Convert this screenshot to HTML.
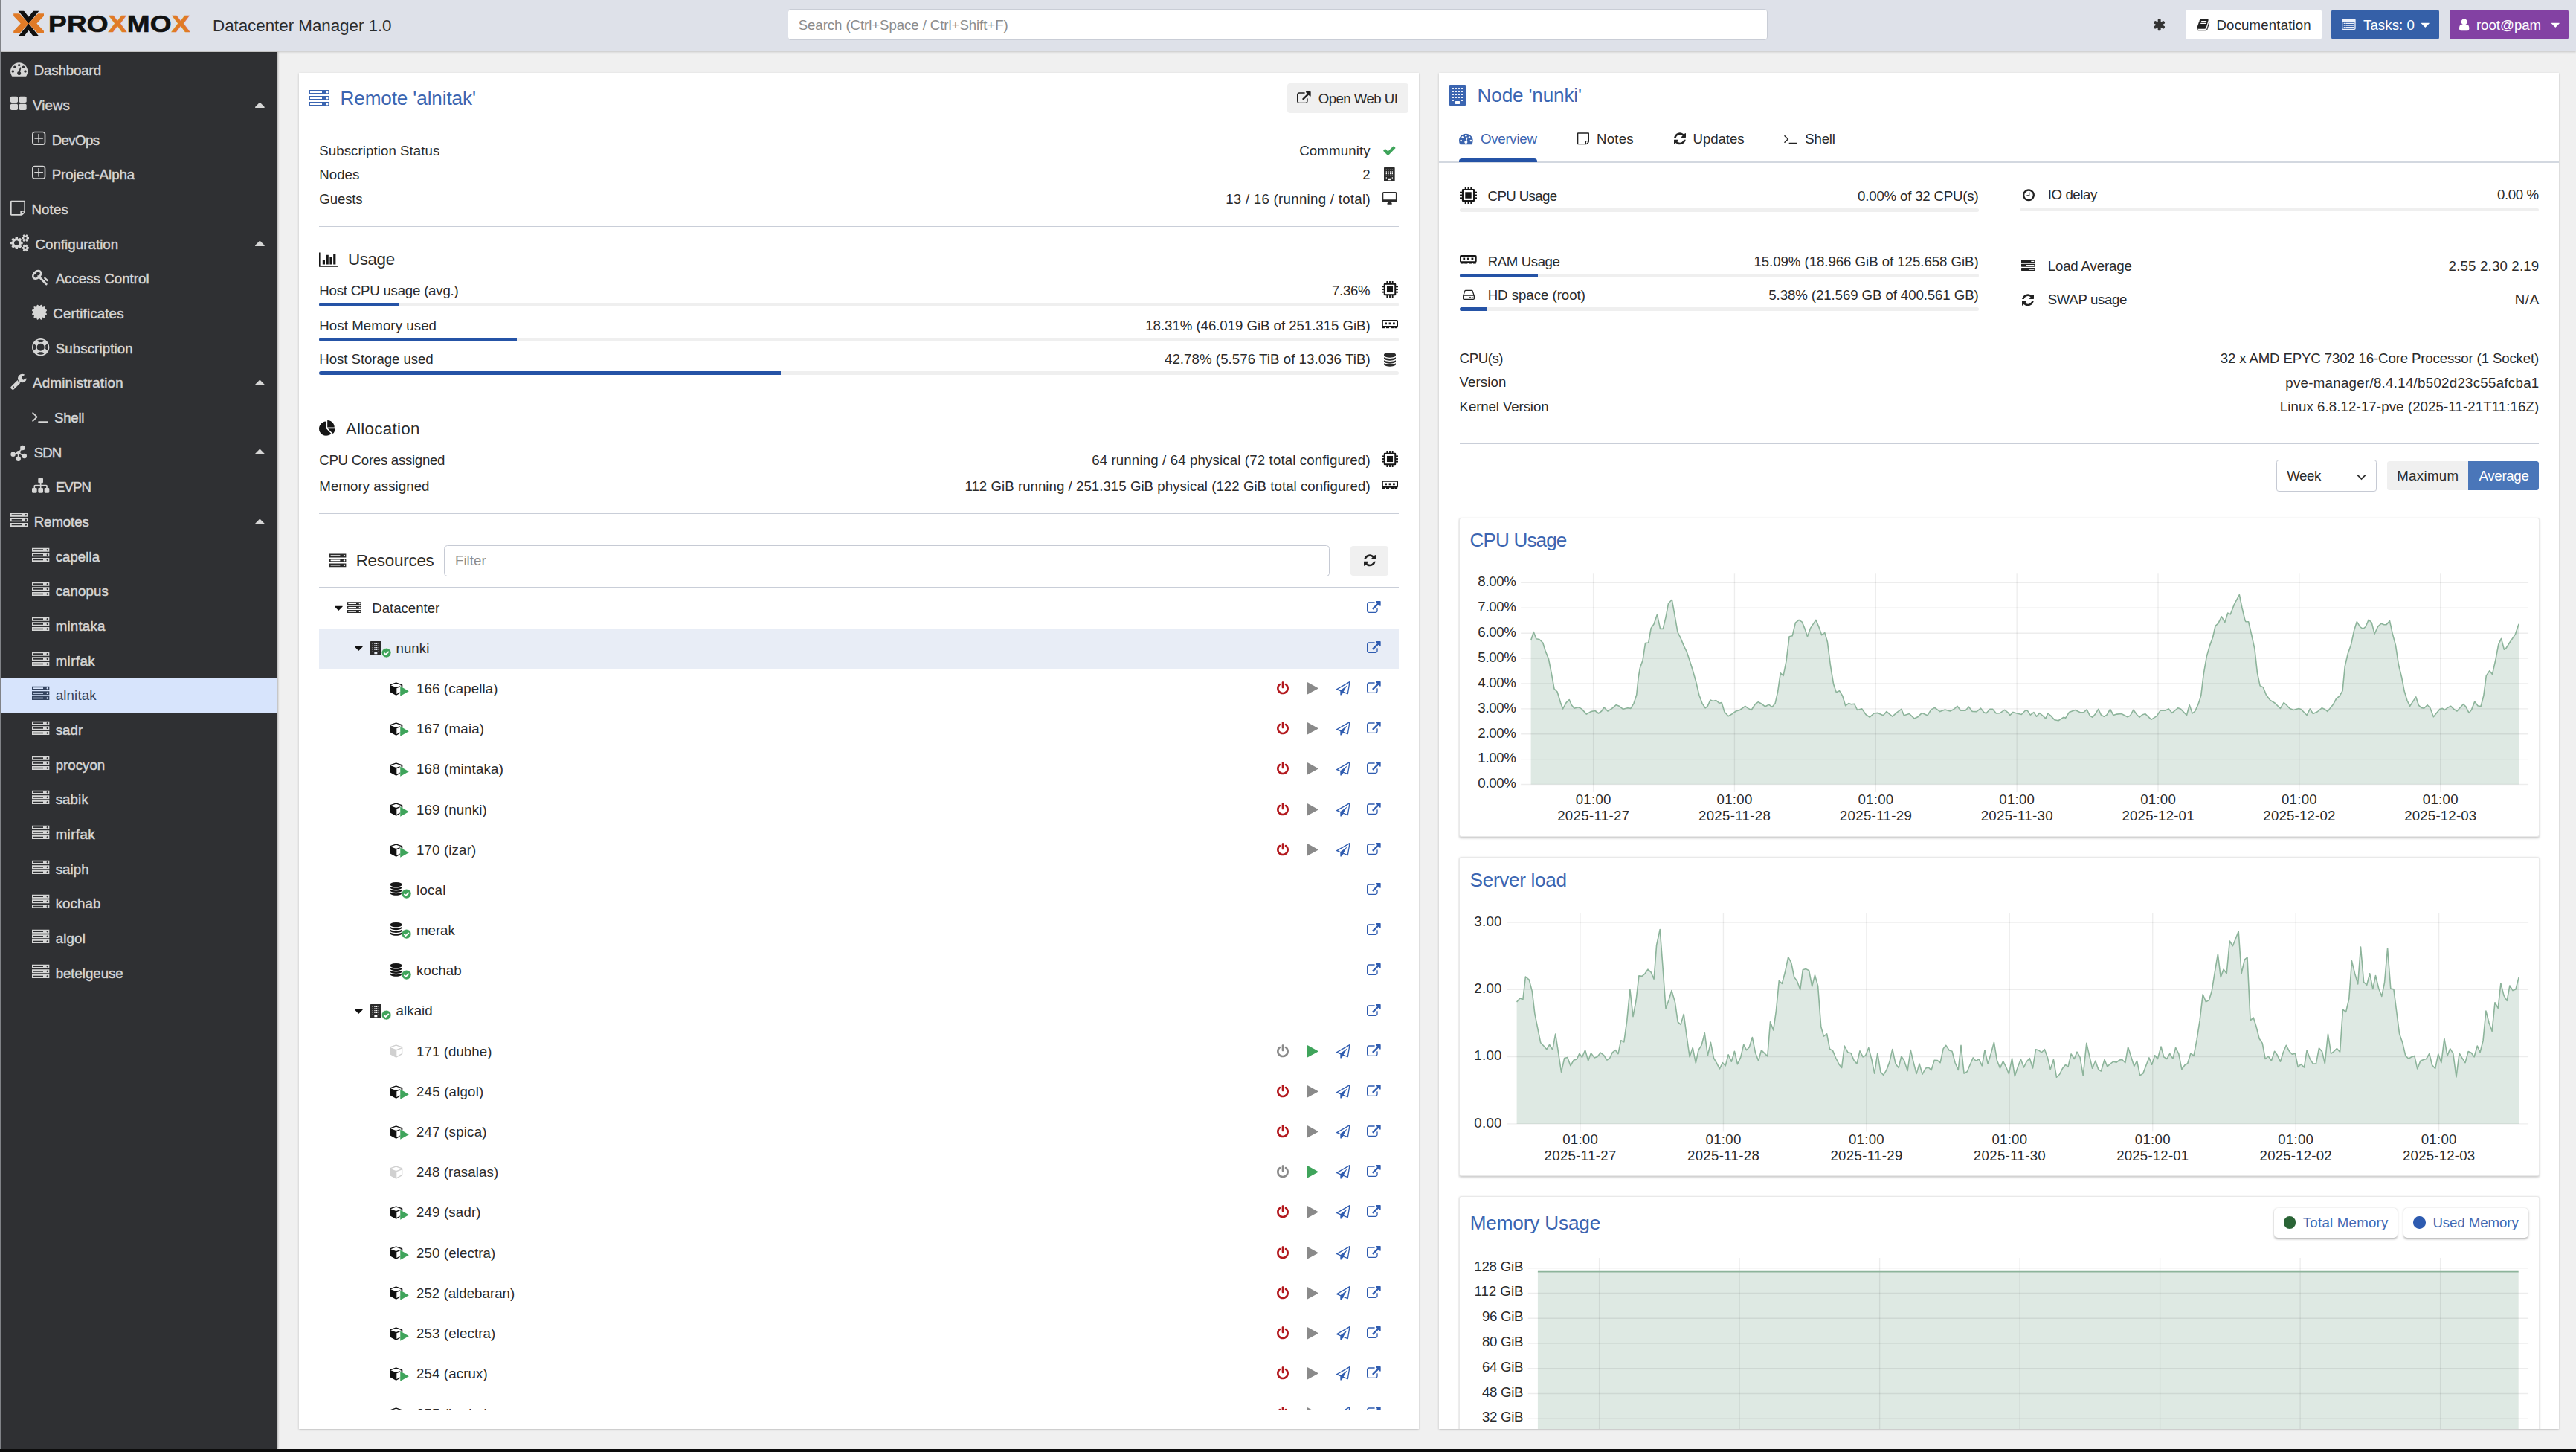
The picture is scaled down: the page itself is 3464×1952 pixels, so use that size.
<!DOCTYPE html><html lang="en"><head><meta charset="utf-8"><title>Proxmox Datacenter Manager</title><style>html,body{margin:0;padding:0}body{width:3464px;height:1952px;overflow:hidden;background:#f0f0f0;position:relative;font-family:"Liberation Sans",sans-serif;}
.t{position:absolute;white-space:nowrap;display:block}.i{position:absolute;display:block;overflow:visible}.r{position:absolute}</style></head><body>
<div class="r" style="left:0.00px;top:69.60px;width:372.90px;height:1878.60px;background:#2f3033;border-right:1.4px solid #19191b;box-sizing:border-box;box-shadow:1px 0 2px rgba(0,0,0,.25);"></div>
<svg class="i" style="width:23.33px;height:23.33px;left:13.70px;top:81.30px;" viewBox="0 -1536 1792 1792"><path fill="#d6d6d6" transform="scale(1,-1)" d="M384 384q0 53 -37.5 90.5t-90.5 37.5t-90.5 -37.5t-37.5 -90.5t37.5 -90.5t90.5 -37.5t90.5 37.5t37.5 90.5zM576 832q0 53 -37.5 90.5t-90.5 37.5t-90.5 -37.5t-37.5 -90.5t37.5 -90.5t90.5 -37.5t90.5 37.5t37.5 90.5zM1004 351l101 382q6 26 -7.5 48.5t-38.5 29.5 t-48 -6.5t-30 -39.5l-101 -382q-60 -5 -107 -43.5t-63 -98.5q-20 -77 20 -146t117 -89t146 20t89 117q16 60 -6 117t-72 91zM1664 384q0 53 -37.5 90.5t-90.5 37.5t-90.5 -37.5t-37.5 -90.5t37.5 -90.5t90.5 -37.5t90.5 37.5t37.5 90.5zM1024 1024q0 53 -37.5 90.5 t-90.5 37.5t-90.5 -37.5t-37.5 -90.5t37.5 -90.5t90.5 -37.5t90.5 37.5t37.5 90.5zM1472 832q0 53 -37.5 90.5t-90.5 37.5t-90.5 -37.5t-37.5 -90.5t37.5 -90.5t90.5 -37.5t90.5 37.5t37.5 90.5zM1792 384q0 -261 -141 -483q-19 -29 -54 -29h-1402q-35 0 -54 29 q-141 221 -141 483q0 182 71 348t191 286t286 191t348 71t348 -71t286 -191t191 -286t71 -348z"/></svg>
<span class="t" style="top:86.00px;font-size:18.667px;line-height:18.667px;color:#d6d6d6;letter-spacing:-0.115px;left:45.73px;-webkit-text-stroke:0.45px;">Dashboard</span>
<svg class="i" style="width:21.66px;height:23.33px;left:13.70px;top:127.97px;" viewBox="0 -1536 1664 1792"><path fill="#d6d6d6" transform="scale(1,-1)" d="M768 512v-384q0 -52 -38 -90t-90 -38h-512q-52 0 -90 38t-38 90v384q0 52 38 90t90 38h512q52 0 90 -38t38 -90zM768 1280v-384q0 -52 -38 -90t-90 -38h-512q-52 0 -90 38t-38 90v384q0 52 38 90t90 38h512q52 0 90 -38t38 -90zM1664 512v-384q0 -52 -38 -90t-90 -38 h-512q-52 0 -90 38t-38 90v384q0 52 38 90t90 38h512q52 0 90 -38t38 -90zM1664 1280v-384q0 -52 -38 -90t-90 -38h-512q-52 0 -90 38t-38 90v384q0 52 38 90t90 38h512q52 0 90 -38t38 -90z"/></svg>
<span class="t" style="top:133.00px;font-size:18.667px;line-height:18.667px;color:#d6d6d6;letter-spacing:0.106px;left:44.06px;-webkit-text-stroke:0.45px;">Views</span>
<svg class="i" style="width:12.80px;height:22.40px;left:342.60px;top:128.77px;" viewBox="0 -1536 1024 1792"><path fill="#d6d6d6" transform="scale(1,-1)" d="M1024 320q0 -26 -19 -45t-45 -19h-896q-26 0 -45 19t-19 45t19 45l448 448q19 19 45 19t45 -19l448 -448q19 -19 19 -45z"/></svg>
<svg class="i" style="width:18.33px;height:23.33px;left:42.60px;top:174.64px;" viewBox="0 -1536 1408 1792"><path fill="#d6d6d6" transform="scale(1,-1)" d="M1152 736v-64q0 -14 -9 -23t-23 -9h-352v-352q0 -14 -9 -23t-23 -9h-64q-14 0 -23 9t-9 23v352h-352q-14 0 -23 9t-9 23v64q0 14 9 23t23 9h352v352q0 14 9 23t23 9h64q14 0 23 -9t9 -23v-352h352q14 0 23 -9t9 -23zM1280 288v832q0 66 -47 113t-113 47h-832 q-66 0 -113 -47t-47 -113v-832q0 -66 47 -113t113 -47h832q66 0 113 47t47 113zM1408 1120v-832q0 -119 -84.5 -203.5t-203.5 -84.5h-832q-119 0 -203.5 84.5t-84.5 203.5v832q0 119 84.5 203.5t203.5 84.5h832q119 0 203.5 -84.5t84.5 -203.5z"/></svg>
<span class="t" style="top:180.00px;font-size:18.667px;line-height:18.667px;color:#d6d6d6;letter-spacing:-0.567px;left:69.63px;-webkit-text-stroke:0.45px;">DevOps</span>
<svg class="i" style="width:18.33px;height:23.33px;left:42.60px;top:221.30px;" viewBox="0 -1536 1408 1792"><path fill="#d6d6d6" transform="scale(1,-1)" d="M1152 736v-64q0 -14 -9 -23t-23 -9h-352v-352q0 -14 -9 -23t-23 -9h-64q-14 0 -23 9t-9 23v352h-352q-14 0 -23 9t-9 23v64q0 14 9 23t23 9h352v352q0 14 9 23t23 9h64q14 0 23 -9t9 -23v-352h352q14 0 23 -9t9 -23zM1280 288v832q0 66 -47 113t-113 47h-832 q-66 0 -113 -47t-47 -113v-832q0 -66 47 -113t113 -47h832q66 0 113 47t47 113zM1408 1120v-832q0 -119 -84.5 -203.5t-203.5 -84.5h-832q-119 0 -203.5 84.5t-84.5 203.5v832q0 119 84.5 203.5t203.5 84.5h832q119 0 203.5 -84.5t84.5 -203.5z"/></svg>
<span class="t" style="top:226.00px;font-size:18.667px;line-height:18.667px;color:#d6d6d6;letter-spacing:-0.035px;left:69.63px;-webkit-text-stroke:0.45px;">Project-Alpha</span>
<svg class="i" style="width:20.00px;height:23.33px;left:13.70px;top:267.97px;" viewBox="0 -1536 1536 1792"><path fill="#d6d6d6" transform="scale(1,-1)" d="M1400 256h-248v-248q29 10 41 22l185 185q12 12 22 41zM1120 384h288v896h-1280v-1280h896v288q0 40 28 68t68 28zM1536 1312v-1024q0 -40 -20 -88t-48 -76l-184 -184q-28 -28 -76 -48t-88 -20h-1024q-40 0 -68 28t-28 68v1344q0 40 28 68t68 28h1344q40 0 68 -28t28 -68 z"/></svg>
<span class="t" style="top:273.00px;font-size:18.667px;line-height:18.667px;color:#d6d6d6;letter-spacing:0.168px;left:42.40px;-webkit-text-stroke:0.45px;">Notes</span>
<svg class="i" style="width:25.00px;height:23.33px;left:13.70px;top:314.64px;" viewBox="0 -1536 1920 1792"><path fill="#d6d6d6" transform="scale(1,-1)" d="M896 640q0 106 -75 181t-181 75t-181 -75t-75 -181t75 -181t181 -75t181 75t75 181zM1664 128q0 52 -38 90t-90 38t-90 -38t-38 -90q0 -53 37.5 -90.5t90.5 -37.5t90.5 37.5t37.5 90.5zM1664 1152q0 52 -38 90t-90 38t-90 -38t-38 -90q0 -53 37.5 -90.5t90.5 -37.5 t90.5 37.5t37.5 90.5zM1280 731v-185q0 -10 -7 -19.5t-16 -10.5l-155 -24q-11 -35 -32 -76q34 -48 90 -115q7 -11 7 -20q0 -12 -7 -19q-23 -30 -82.5 -89.5t-78.5 -59.5q-11 0 -21 7l-115 90q-37 -19 -77 -31q-11 -108 -23 -155q-7 -24 -30 -24h-186q-11 0 -20 7.5t-10 17.5 l-23 153q-34 10 -75 31l-118 -89q-7 -7 -20 -7q-11 0 -21 8q-144 133 -144 160q0 9 7 19q10 14 41 53t47 61q-23 44 -35 82l-152 24q-10 1 -17 9.5t-7 19.5v185q0 10 7 19.5t16 10.5l155 24q11 35 32 76q-34 48 -90 115q-7 11 -7 20q0 12 7 20q22 30 82 89t79 59q11 0 21 -7 l115 -90q34 18 77 32q11 108 23 154q7 24 30 24h186q11 0 20 -7.5t10 -17.5l23 -153q34 -10 75 -31l118 89q8 7 20 7q11 0 21 -8q144 -133 144 -160q0 -8 -7 -19q-12 -16 -42 -54t-45 -60q23 -48 34 -82l152 -23q10 -2 17 -10.5t7 -19.5zM1920 198v-140q0 -16 -149 -31 q-12 -27 -30 -52q51 -113 51 -138q0 -4 -4 -7q-122 -71 -124 -71q-8 0 -46 47t-52 68q-20 -2 -30 -2t-30 2q-14 -21 -52 -68t-46 -47q-2 0 -124 71q-4 3 -4 7q0 25 51 138q-18 25 -30 52q-149 15 -149 31v140q0 16 149 31q13 29 30 52q-51 113 -51 138q0 4 4 7q4 2 35 20 t59 34t30 16q8 0 46 -46.5t52 -67.5q20 2 30 2t30 -2q51 71 92 112l6 2q4 0 124 -70q4 -3 4 -7q0 -25 -51 -138q17 -23 30 -52q149 -15 149 -31zM1920 1222v-140q0 -16 -149 -31q-12 -27 -30 -52q51 -113 51 -138q0 -4 -4 -7q-122 -71 -124 -71q-8 0 -46 47t-52 68 q-20 -2 -30 -2t-30 2q-14 -21 -52 -68t-46 -47q-2 0 -124 71q-4 3 -4 7q0 25 51 138q-18 25 -30 52q-149 15 -149 31v140q0 16 149 31q13 29 30 52q-51 113 -51 138q0 4 4 7q4 2 35 20t59 34t30 16q8 0 46 -46.5t52 -67.5q20 2 30 2t30 -2q51 71 92 112l6 2q4 0 124 -70 q4 -3 4 -7q0 -25 -51 -138q17 -23 30 -52q149 -15 149 -31z"/></svg>
<span class="t" style="top:320.00px;font-size:18.667px;line-height:18.667px;color:#d6d6d6;letter-spacing:0.069px;left:47.40px;-webkit-text-stroke:0.45px;">Configuration</span>
<svg class="i" style="width:12.80px;height:22.40px;left:342.60px;top:315.44px;" viewBox="0 -1536 1024 1792"><path fill="#d6d6d6" transform="scale(1,-1)" d="M1024 320q0 -26 -19 -45t-45 -19h-896q-26 0 -45 19t-19 45t19 45l448 448q19 19 45 19t45 -19l448 -448q19 -19 19 -45z"/></svg>
<svg class="i" style="width:23.33px;height:23.33px;left:42.60px;top:361.30px;" viewBox="0 -1536 1792 1792"><path fill="#d6d6d6" transform="scale(1,-1)" d="M832 1024q0 80 -56 136t-136 56t-136 -56t-56 -136q0 -42 19 -83q-41 19 -83 19q-80 0 -136 -56t-56 -136t56 -136t136 -56t136 56t56 136q0 42 -19 83q41 -19 83 -19q80 0 136 56t56 136zM1683 320q0 -17 -49 -66t-66 -49q-9 0 -28.5 16t-36.5 33t-38.5 40t-24.5 26 l-96 -96l220 -220q28 -28 28 -68q0 -42 -39 -81t-81 -39q-40 0 -68 28l-671 671q-176 -131 -365 -131q-163 0 -265.5 102.5t-102.5 265.5q0 160 95 313t248 248t313 95q163 0 265.5 -102.5t102.5 -265.5q0 -189 -131 -365l355 -355l96 96q-3 3 -26 24.5t-40 38.5t-33 36.5 t-16 28.5q0 17 49 66t66 49q13 0 23 -10q6 -6 46 -44.5t82 -79.5t86.5 -86t73 -78t28.5 -41z"/></svg>
<span class="t" style="top:366.00px;font-size:18.667px;line-height:18.667px;color:#d6d6d6;letter-spacing:0.038px;left:74.63px;-webkit-text-stroke:0.45px;">Access Control</span>
<svg class="i" style="width:20.00px;height:23.33px;left:42.60px;top:407.97px;" viewBox="0 -1536 1536 1792"><path fill="#d6d6d6" transform="scale(1,-1)" d="M1376 640l138 -135q30 -28 20 -70q-12 -41 -52 -51l-188 -48l53 -186q12 -41 -19 -70q-29 -31 -70 -19l-186 53l-48 -188q-10 -40 -51 -52q-12 -2 -19 -2q-31 0 -51 22l-135 138l-135 -138q-28 -30 -70 -20q-41 11 -51 52l-48 188l-186 -53q-41 -12 -70 19q-31 29 -19 70 l53 186l-188 48q-40 10 -52 51q-10 42 20 70l138 135l-138 135q-30 28 -20 70q12 41 52 51l188 48l-53 186q-12 41 19 70q29 31 70 19l186 -53l48 188q10 41 51 51q41 12 70 -19l135 -139l135 139q29 30 70 19q41 -10 51 -51l48 -188l186 53q41 12 70 -19q31 -29 19 -70 l-53 -186l188 -48q40 -10 52 -51q10 -42 -20 -70z"/></svg>
<span class="t" style="top:413.00px;font-size:18.667px;line-height:18.667px;color:#d6d6d6;letter-spacing:0.169px;left:71.30px;-webkit-text-stroke:0.45px;">Certificates</span>
<svg class="i" style="width:23.33px;height:23.33px;left:42.60px;top:454.64px;" viewBox="0 -1536 1792 1792"><path fill="#d6d6d6" transform="scale(1,-1)" d="M896 1536q182 0 348 -71t286 -191t191 -286t71 -348t-71 -348t-191 -286t-286 -191t-348 -71t-348 71t-286 191t-191 286t-71 348t71 348t191 286t286 191t348 71zM896 1408q-190 0 -361 -90l194 -194q82 28 167 28t167 -28l194 194q-171 90 -361 90zM218 279l194 194 q-28 82 -28 167t28 167l-194 194q-90 -171 -90 -361t90 -361zM896 -128q190 0 361 90l-194 194q-82 -28 -167 -28t-167 28l-194 -194q171 -90 361 -90zM896 256q159 0 271.5 112.5t112.5 271.5t-112.5 271.5t-271.5 112.5t-271.5 -112.5t-112.5 -271.5t112.5 -271.5 t271.5 -112.5zM1380 473l194 -194q90 171 90 361t-90 361l-194 -194q28 -82 28 -167t-28 -167z"/></svg>
<span class="t" style="top:460.00px;font-size:18.667px;line-height:18.667px;color:#d6d6d6;letter-spacing:0.124px;left:74.63px;-webkit-text-stroke:0.45px;">Subscription</span>
<svg class="i" style="width:21.66px;height:23.33px;left:13.70px;top:501.31px;" viewBox="0 -1536 1664 1792"><path fill="#d6d6d6" transform="scale(1,-1)" d="M384 64q0 26 -19 45t-45 19t-45 -19t-19 -45t19 -45t45 -19t45 19t19 45zM1028 484l-682 -682q-37 -37 -90 -37q-52 0 -91 37l-106 108q-38 36 -38 90q0 53 38 91l681 681q39 -98 114.5 -173.5t173.5 -114.5zM1662 919q0 -39 -23 -106q-47 -134 -164.5 -217.5 t-258.5 -83.5q-185 0 -316.5 131.5t-131.5 316.5t131.5 316.5t316.5 131.5q58 0 121.5 -16.5t107.5 -46.5q16 -11 16 -28t-16 -28l-293 -169v-224l193 -107q5 3 79 48.5t135.5 81t70.5 35.5q15 0 23.5 -10t8.5 -25z"/></svg>
<span class="t" style="top:506.00px;font-size:18.667px;line-height:18.667px;color:#d6d6d6;letter-spacing:0.260px;left:44.06px;-webkit-text-stroke:0.45px;">Administration</span>
<svg class="i" style="width:12.80px;height:22.40px;left:342.60px;top:502.10px;" viewBox="0 -1536 1024 1792"><path fill="#d6d6d6" transform="scale(1,-1)" d="M1024 320q0 -26 -19 -45t-45 -19h-896q-26 0 -45 19t-19 45t19 45l448 448q19 19 45 19t45 -19l448 -448q19 -19 19 -45z"/></svg>
<svg class="i" style="width:21.66px;height:23.33px;left:42.60px;top:547.97px;" viewBox="0 -1536 1664 1792"><path fill="#d6d6d6" transform="scale(1,-1)" d="M585 553l-466 -466q-10 -10 -23 -10t-23 10l-50 50q-10 10 -10 23t10 23l393 393l-393 393q-10 10 -10 23t10 23l50 50q10 10 23 10t23 -10l466 -466q10 -10 10 -23t-10 -23zM1664 96v-64q0 -14 -9 -23t-23 -9h-960q-14 0 -23 9t-9 23v64q0 14 9 23t23 9h960q14 0 23 -9 t9 -23z"/></svg>
<span class="t" style="top:553.00px;font-size:18.667px;line-height:18.667px;color:#d6d6d6;letter-spacing:-0.233px;left:72.96px;-webkit-text-stroke:0.45px;">Shell</span>
<svg class="i" style="left:14.40px;top:597.74px;width:23px;height:23px" viewBox="0 0 23 23"><g stroke="#d6d6d6" stroke-width="1.7"><line x1="10.7" y1="10.8" x2="16.4" y2="4"/><line x1="10.7" y1="10.8" x2="3.6" y2="12.8"/><line x1="10.7" y1="10.8" x2="18.8" y2="15"/><line x1="10.7" y1="10.8" x2="10.7" y2="18.8"/></g><g fill="#d6d6d6"><circle cx="16.4" cy="4" r="3.2"/><circle cx="3.6" cy="12.8" r="3.2"/><circle cx="10.7" cy="10.8" r="2.7"/><circle cx="18.8" cy="15" r="3.2"/><circle cx="10.7" cy="18.8" r="3.2"/></g></svg>
<span class="t" style="top:600.00px;font-size:18.667px;line-height:18.667px;color:#d6d6d6;letter-spacing:-0.921px;left:45.73px;-webkit-text-stroke:0.45px;">SDN</span>
<svg class="i" style="width:12.80px;height:22.40px;left:342.60px;top:595.44px;" viewBox="0 -1536 1024 1792"><path fill="#d6d6d6" transform="scale(1,-1)" d="M1024 320q0 -26 -19 -45t-45 -19h-896q-26 0 -45 19t-19 45t19 45l448 448q19 19 45 19t45 -19l448 -448q19 -19 19 -45z"/></svg>
<svg class="i" style="width:23.33px;height:23.33px;left:42.60px;top:641.31px;" viewBox="0 -1536 1792 1792"><path fill="#d6d6d6" transform="scale(1,-1)" d="M1792 288v-320q0 -40 -28 -68t-68 -28h-320q-40 0 -68 28t-28 68v320q0 40 28 68t68 28h96v192h-512v-192h96q40 0 68 -28t28 -68v-320q0 -40 -28 -68t-68 -28h-320q-40 0 -68 28t-28 68v320q0 40 28 68t68 28h96v192h-512v-192h96q40 0 68 -28t28 -68v-320 q0 -40 -28 -68t-68 -28h-320q-40 0 -68 28t-28 68v320q0 40 28 68t68 28h96v192q0 52 38 90t90 38h512v192h-96q-40 0 -68 28t-28 68v320q0 40 28 68t68 28h320q40 0 68 -28t28 -68v-320q0 -40 -28 -68t-68 -28h-96v-192h512q52 0 90 -38t38 -90v-192h96q40 0 68 -28t28 -68 z"/></svg>
<span class="t" style="top:646.00px;font-size:18.667px;line-height:18.667px;color:#d6d6d6;letter-spacing:-0.811px;left:74.63px;-webkit-text-stroke:0.45px;">EVPN</span>
<svg class="i" style="width:23.33px;height:23.33px;left:13.70px;top:687.97px;" viewBox="0 -1536 1792 1792"><path fill="#d6d6d6" transform="scale(1,-1)" d="M128 128h1024v128h-1024v-128zM128 640h1024v128h-1024v-128zM1696 192q0 40 -28 68t-68 28t-68 -28t-28 -68t28 -68t68 -28t68 28t28 68zM128 1152h1024v128h-1024v-128zM1696 704q0 40 -28 68t-68 28t-68 -28t-28 -68t28 -68t68 -28t68 28t28 68zM1696 1216 q0 40 -28 68t-68 28t-68 -28t-28 -68t28 -68t68 -28t68 28t28 68zM1792 384v-384h-1792v384h1792zM1792 896v-384h-1792v384h1792zM1792 1408v-384h-1792v384h1792z"/></svg>
<span class="t" style="top:693.00px;font-size:18.667px;line-height:18.667px;color:#d6d6d6;letter-spacing:-0.091px;left:45.73px;-webkit-text-stroke:0.45px;">Remotes</span>
<svg class="i" style="width:12.80px;height:22.40px;left:342.60px;top:688.77px;" viewBox="0 -1536 1024 1792"><path fill="#d6d6d6" transform="scale(1,-1)" d="M1024 320q0 -26 -19 -45t-45 -19h-896q-26 0 -45 19t-19 45t19 45l448 448q19 19 45 19t45 -19l448 -448q19 -19 19 -45z"/></svg>
<svg class="i" style="width:23.33px;height:23.33px;left:42.60px;top:734.64px;" viewBox="0 -1536 1792 1792"><path fill="#d6d6d6" transform="scale(1,-1)" d="M128 128h1024v128h-1024v-128zM128 640h1024v128h-1024v-128zM1696 192q0 40 -28 68t-68 28t-68 -28t-28 -68t28 -68t68 -28t68 28t28 68zM128 1152h1024v128h-1024v-128zM1696 704q0 40 -28 68t-68 28t-68 -28t-28 -68t28 -68t68 -28t68 28t28 68zM1696 1216 q0 40 -28 68t-68 28t-68 -28t-28 -68t28 -68t68 -28t68 28t28 68zM1792 384v-384h-1792v384h1792zM1792 896v-384h-1792v384h1792zM1792 1408v-384h-1792v384h1792z"/></svg>
<span class="t" style="top:740.00px;font-size:18.667px;line-height:18.667px;color:#d6d6d6;letter-spacing:0.055px;left:74.63px;-webkit-text-stroke:0.45px;">capella</span>
<svg class="i" style="width:23.33px;height:23.33px;left:42.60px;top:781.31px;" viewBox="0 -1536 1792 1792"><path fill="#d6d6d6" transform="scale(1,-1)" d="M128 128h1024v128h-1024v-128zM128 640h1024v128h-1024v-128zM1696 192q0 40 -28 68t-68 28t-68 -28t-28 -68t28 -68t68 -28t68 28t28 68zM128 1152h1024v128h-1024v-128zM1696 704q0 40 -28 68t-68 28t-68 -28t-28 -68t28 -68t68 -28t68 28t28 68zM1696 1216 q0 40 -28 68t-68 28t-68 -28t-28 -68t28 -68t68 -28t68 28t28 68zM1792 384v-384h-1792v384h1792zM1792 896v-384h-1792v384h1792zM1792 1408v-384h-1792v384h1792z"/></svg>
<span class="t" style="top:786.00px;font-size:18.667px;line-height:18.667px;color:#d6d6d6;letter-spacing:0.102px;left:74.63px;-webkit-text-stroke:0.45px;">canopus</span>
<svg class="i" style="width:23.33px;height:23.33px;left:42.60px;top:827.97px;" viewBox="0 -1536 1792 1792"><path fill="#d6d6d6" transform="scale(1,-1)" d="M128 128h1024v128h-1024v-128zM128 640h1024v128h-1024v-128zM1696 192q0 40 -28 68t-68 28t-68 -28t-28 -68t28 -68t68 -28t68 28t28 68zM128 1152h1024v128h-1024v-128zM1696 704q0 40 -28 68t-68 28t-68 -28t-28 -68t28 -68t68 -28t68 28t28 68zM1696 1216 q0 40 -28 68t-68 28t-68 -28t-28 -68t28 -68t68 -28t68 28t28 68zM1792 384v-384h-1792v384h1792zM1792 896v-384h-1792v384h1792zM1792 1408v-384h-1792v384h1792z"/></svg>
<span class="t" style="top:833.00px;font-size:18.667px;line-height:18.667px;color:#d6d6d6;letter-spacing:0.247px;left:74.63px;-webkit-text-stroke:0.45px;">mintaka</span>
<svg class="i" style="width:23.33px;height:23.33px;left:42.60px;top:874.64px;" viewBox="0 -1536 1792 1792"><path fill="#d6d6d6" transform="scale(1,-1)" d="M128 128h1024v128h-1024v-128zM128 640h1024v128h-1024v-128zM1696 192q0 40 -28 68t-68 28t-68 -28t-28 -68t28 -68t68 -28t68 28t28 68zM128 1152h1024v128h-1024v-128zM1696 704q0 40 -28 68t-68 28t-68 -28t-28 -68t28 -68t68 -28t68 28t28 68zM1696 1216 q0 40 -28 68t-68 28t-68 -28t-28 -68t28 -68t68 -28t68 28t28 68zM1792 384v-384h-1792v384h1792zM1792 896v-384h-1792v384h1792zM1792 1408v-384h-1792v384h1792z"/></svg>
<span class="t" style="top:880.00px;font-size:18.667px;line-height:18.667px;color:#d6d6d6;letter-spacing:0.444px;left:74.63px;-webkit-text-stroke:0.45px;">mirfak</span>
<div class="r" style="left:1.40px;top:911.01px;width:372.00px;height:47.60px;background:#d7e4fc;"></div>
<svg class="i" style="width:23.33px;height:23.33px;left:42.60px;top:921.31px;" viewBox="0 -1536 1792 1792"><path fill="#33435f" transform="scale(1,-1)" d="M128 128h1024v128h-1024v-128zM128 640h1024v128h-1024v-128zM1696 192q0 40 -28 68t-68 28t-68 -28t-28 -68t28 -68t68 -28t68 28t28 68zM128 1152h1024v128h-1024v-128zM1696 704q0 40 -28 68t-68 28t-68 -28t-28 -68t28 -68t68 -28t68 28t28 68zM1696 1216 q0 40 -28 68t-68 28t-68 -28t-28 -68t28 -68t68 -28t68 28t28 68zM1792 384v-384h-1792v384h1792zM1792 896v-384h-1792v384h1792zM1792 1408v-384h-1792v384h1792z"/></svg>
<span class="t" style="top:926.00px;font-size:18.667px;line-height:18.667px;color:#33435f;letter-spacing:0.186px;left:74.63px;">alnitak</span>
<svg class="i" style="width:23.33px;height:23.33px;left:42.60px;top:967.98px;" viewBox="0 -1536 1792 1792"><path fill="#d6d6d6" transform="scale(1,-1)" d="M128 128h1024v128h-1024v-128zM128 640h1024v128h-1024v-128zM1696 192q0 40 -28 68t-68 28t-68 -28t-28 -68t28 -68t68 -28t68 28t28 68zM128 1152h1024v128h-1024v-128zM1696 704q0 40 -28 68t-68 28t-68 -28t-28 -68t28 -68t68 -28t68 28t28 68zM1696 1216 q0 40 -28 68t-68 28t-68 -28t-28 -68t28 -68t68 -28t68 28t28 68zM1792 384v-384h-1792v384h1792zM1792 896v-384h-1792v384h1792zM1792 1408v-384h-1792v384h1792z"/></svg>
<span class="t" style="top:973.00px;font-size:18.667px;line-height:18.667px;color:#d6d6d6;letter-spacing:0.082px;left:74.63px;-webkit-text-stroke:0.45px;">sadr</span>
<svg class="i" style="width:23.33px;height:23.33px;left:42.60px;top:1014.64px;" viewBox="0 -1536 1792 1792"><path fill="#d6d6d6" transform="scale(1,-1)" d="M128 128h1024v128h-1024v-128zM128 640h1024v128h-1024v-128zM1696 192q0 40 -28 68t-68 28t-68 -28t-28 -68t28 -68t68 -28t68 28t28 68zM128 1152h1024v128h-1024v-128zM1696 704q0 40 -28 68t-68 28t-68 -28t-28 -68t28 -68t68 -28t68 28t28 68zM1696 1216 q0 40 -28 68t-68 28t-68 -28t-28 -68t28 -68t68 -28t68 28t28 68zM1792 384v-384h-1792v384h1792zM1792 896v-384h-1792v384h1792zM1792 1408v-384h-1792v384h1792z"/></svg>
<span class="t" style="top:1020.00px;font-size:18.667px;line-height:18.667px;color:#d6d6d6;letter-spacing:0.040px;left:74.63px;-webkit-text-stroke:0.45px;">procyon</span>
<svg class="i" style="width:23.33px;height:23.33px;left:42.60px;top:1061.31px;" viewBox="0 -1536 1792 1792"><path fill="#d6d6d6" transform="scale(1,-1)" d="M128 128h1024v128h-1024v-128zM128 640h1024v128h-1024v-128zM1696 192q0 40 -28 68t-68 28t-68 -28t-28 -68t28 -68t68 -28t68 28t28 68zM128 1152h1024v128h-1024v-128zM1696 704q0 40 -28 68t-68 28t-68 -28t-28 -68t28 -68t68 -28t68 28t28 68zM1696 1216 q0 40 -28 68t-68 28t-68 -28t-28 -68t28 -68t68 -28t68 28t28 68zM1792 384v-384h-1792v384h1792zM1792 896v-384h-1792v384h1792zM1792 1408v-384h-1792v384h1792z"/></svg>
<span class="t" style="top:1066.00px;font-size:18.667px;line-height:18.667px;color:#d6d6d6;letter-spacing:0.139px;left:74.63px;-webkit-text-stroke:0.45px;">sabik</span>
<svg class="i" style="width:23.33px;height:23.33px;left:42.60px;top:1107.98px;" viewBox="0 -1536 1792 1792"><path fill="#d6d6d6" transform="scale(1,-1)" d="M128 128h1024v128h-1024v-128zM128 640h1024v128h-1024v-128zM1696 192q0 40 -28 68t-68 28t-68 -28t-28 -68t28 -68t68 -28t68 28t28 68zM128 1152h1024v128h-1024v-128zM1696 704q0 40 -28 68t-68 28t-68 -28t-28 -68t28 -68t68 -28t68 28t28 68zM1696 1216 q0 40 -28 68t-68 28t-68 -28t-28 -68t28 -68t68 -28t68 28t28 68zM1792 384v-384h-1792v384h1792zM1792 896v-384h-1792v384h1792zM1792 1408v-384h-1792v384h1792z"/></svg>
<span class="t" style="top:1113.00px;font-size:18.667px;line-height:18.667px;color:#d6d6d6;letter-spacing:0.444px;left:74.63px;-webkit-text-stroke:0.45px;">mirfak</span>
<svg class="i" style="width:23.33px;height:23.33px;left:42.60px;top:1154.64px;" viewBox="0 -1536 1792 1792"><path fill="#d6d6d6" transform="scale(1,-1)" d="M128 128h1024v128h-1024v-128zM128 640h1024v128h-1024v-128zM1696 192q0 40 -28 68t-68 28t-68 -28t-28 -68t28 -68t68 -28t68 28t28 68zM128 1152h1024v128h-1024v-128zM1696 704q0 40 -28 68t-68 28t-68 -28t-28 -68t28 -68t68 -28t68 28t28 68zM1696 1216 q0 40 -28 68t-68 28t-68 -28t-28 -68t28 -68t68 -28t68 28t28 68zM1792 384v-384h-1792v384h1792zM1792 896v-384h-1792v384h1792zM1792 1408v-384h-1792v384h1792z"/></svg>
<span class="t" style="top:1160.00px;font-size:18.667px;line-height:18.667px;color:#d6d6d6;letter-spacing:0.093px;left:74.63px;-webkit-text-stroke:0.45px;">saiph</span>
<svg class="i" style="width:23.33px;height:23.33px;left:42.60px;top:1201.31px;" viewBox="0 -1536 1792 1792"><path fill="#d6d6d6" transform="scale(1,-1)" d="M128 128h1024v128h-1024v-128zM128 640h1024v128h-1024v-128zM1696 192q0 40 -28 68t-68 28t-68 -28t-28 -68t28 -68t68 -28t68 28t28 68zM128 1152h1024v128h-1024v-128zM1696 704q0 40 -28 68t-68 28t-68 -28t-28 -68t28 -68t68 -28t68 28t28 68zM1696 1216 q0 40 -28 68t-68 28t-68 -28t-28 -68t28 -68t68 -28t68 28t28 68zM1792 384v-384h-1792v384h1792zM1792 896v-384h-1792v384h1792zM1792 1408v-384h-1792v384h1792z"/></svg>
<span class="t" style="top:1206.00px;font-size:18.667px;line-height:18.667px;color:#d6d6d6;letter-spacing:0.100px;left:74.63px;-webkit-text-stroke:0.45px;">kochab</span>
<svg class="i" style="width:23.33px;height:23.33px;left:42.60px;top:1247.98px;" viewBox="0 -1536 1792 1792"><path fill="#d6d6d6" transform="scale(1,-1)" d="M128 128h1024v128h-1024v-128zM128 640h1024v128h-1024v-128zM1696 192q0 40 -28 68t-68 28t-68 -28t-28 -68t28 -68t68 -28t68 28t28 68zM128 1152h1024v128h-1024v-128zM1696 704q0 40 -28 68t-68 28t-68 -28t-28 -68t28 -68t68 -28t68 28t28 68zM1696 1216 q0 40 -28 68t-68 28t-68 -28t-28 -68t28 -68t68 -28t68 28t28 68zM1792 384v-384h-1792v384h1792zM1792 896v-384h-1792v384h1792zM1792 1408v-384h-1792v384h1792z"/></svg>
<span class="t" style="top:1253.00px;font-size:18.667px;line-height:18.667px;color:#d6d6d6;letter-spacing:0.184px;left:74.63px;-webkit-text-stroke:0.45px;">algol</span>
<svg class="i" style="width:23.33px;height:23.33px;left:42.60px;top:1294.64px;" viewBox="0 -1536 1792 1792"><path fill="#d6d6d6" transform="scale(1,-1)" d="M128 128h1024v128h-1024v-128zM128 640h1024v128h-1024v-128zM1696 192q0 40 -28 68t-68 28t-68 -28t-28 -68t28 -68t68 -28t68 28t28 68zM128 1152h1024v128h-1024v-128zM1696 704q0 40 -28 68t-68 28t-68 -28t-28 -68t28 -68t68 -28t68 28t28 68zM1696 1216 q0 40 -28 68t-68 28t-68 -28t-28 -68t28 -68t68 -28t68 28t28 68zM1792 384v-384h-1792v384h1792zM1792 896v-384h-1792v384h1792zM1792 1408v-384h-1792v384h1792z"/></svg>
<span class="t" style="top:1300.00px;font-size:18.667px;line-height:18.667px;color:#d6d6d6;letter-spacing:-0.021px;left:74.63px;-webkit-text-stroke:0.45px;">betelgeuse</span>
<div class="r" style="left:0.00px;top:0.00px;width:3464.00px;height:69.40px;background:#dee1e9;border-bottom:1.3px solid #c8ccd4;box-sizing:border-box;box-shadow:0 1px 2.5px rgba(0,0,0,.18);"></div>
<svg class="i" style="left:14px;top:10px;width:50px;height:44px" viewBox="14 10 50 44"><clipPath id="lk"><rect x="18.2" y="14.7" width="40.8" height="34.1"/></clipPath><clipPath id="lo"><rect x="18.2" y="18.2" width="40.8" height="26.8"/></clipPath><g fill="none" stroke-linejoin="miter" stroke-linecap="butt"><g clip-path="url(#lk)" stroke="#111" stroke-width="5.9"><path d="M25.2 10.6 L38.55 27.3 L51.9 10.6"/><path d="M25.2 52.9 L38.55 36.2 L51.9 52.9"/></g><g clip-path="url(#lo)" stroke="#e07a26" stroke-width="8"><path d="M16.9 14.3 L33.2 31.6 L16.9 48.9"/><path d="M60.2 14.3 L43.9 31.6 L60.2 48.9"/></g></g></svg>
<span class="t" style="left:64.5px;top:15.7px;font-size:32px;line-height:32px;font-weight:bold;letter-spacing:0.2px;transform:scaleX(1.155);transform-origin:0 0;color:#111;-webkit-text-stroke:0.7px">PRO<span style="color:#e07a26">X</span>MO<span style="color:#e07a26">X</span></span>
<span class="t" style="top:24.00px;font-size:22.400px;line-height:22.400px;color:#2b2b2b;letter-spacing:-0.043px;left:286.00px;">Datacenter Manager 1.0</span>
<div class="r" style="left:1059.30px;top:12.10px;width:1317.70px;height:41.60px;background:#fff;border:1.3px solid #c9cdd6;border-radius:4px;box-sizing:border-box;"></div>
<span class="t" style="top:25.00px;font-size:18.667px;line-height:18.667px;color:#8c8c8c;letter-spacing:-0.080px;left:1073.70px;">Search (Ctrl+Space / Ctrl+Shift+F)</span>
<svg class="i" style="width:17.33px;height:18.67px;left:2895.13px;top:24.20px;" viewBox="0 -1536 1664 1792"><path fill="#333" transform="scale(1,-1)" d="M1482 486q46 -26 59.5 -77.5t-12.5 -97.5l-64 -110q-26 -46 -77.5 -59.5t-97.5 12.5l-266 153v-307q0 -52 -38 -90t-90 -38h-128q-52 0 -90 38t-38 90v307l-266 -153q-46 -26 -97.5 -12.5t-77.5 59.5l-64 110q-26 46 -12.5 97.5t59.5 77.5l266 154l-266 154 q-46 26 -59.5 77.5t12.5 97.5l64 110q26 46 77.5 59.5t97.5 -12.5l266 -153v307q0 52 38 90t90 38h128q52 0 90 -38t38 -90v-307l266 153q46 26 97.5 12.5t77.5 -59.5l64 -110q26 -46 12.5 -97.5t-59.5 -77.5l-266 -154z"/></svg>
<div class="r" style="left:2938.50px;top:13.30px;width:183.40px;height:39.80px;background:#fff;border-radius:3px;"></div>
<svg class="i" style="width:17.33px;height:18.67px;left:2953.60px;top:24.00px;" viewBox="0 -1536 1664 1792"><path fill="#222" transform="scale(1,-1)" d="M1639 1058q40 -57 18 -129l-275 -906q-19 -64 -76.5 -107.5t-122.5 -43.5h-923q-77 0 -148.5 53.5t-99.5 131.5q-24 67 -2 127q0 4 3 27t4 37q1 8 -3 21.5t-3 19.5q2 11 8 21t16.5 23.5t16.5 23.5q23 38 45 91.5t30 91.5q3 10 0.5 30t-0.5 28q3 11 17 28t17 23 q21 36 42 92t25 90q1 9 -2.5 32t0.5 28q4 13 22 30.5t22 22.5q19 26 42.5 84.5t27.5 96.5q1 8 -3 25.5t-2 26.5q2 8 9 18t18 23t17 21q8 12 16.5 30.5t15 35t16 36t19.5 32t26.5 23.5t36 11.5t47.5 -5.5l-1 -3q38 9 51 9h761q74 0 114 -56t18 -130l-274 -906 q-36 -119 -71.5 -153.5t-128.5 -34.5h-869q-27 0 -38 -15q-11 -16 -1 -43q24 -70 144 -70h923q29 0 56 15.5t35 41.5l300 987q7 22 5 57q38 -15 59 -43zM575 1056q-4 -13 2 -22.5t20 -9.5h608q13 0 25.5 9.5t16.5 22.5l21 64q4 13 -2 22.5t-20 9.5h-608q-13 0 -25.5 -9.5 t-16.5 -22.5zM492 800q-4 -13 2 -22.5t20 -9.5h608q13 0 25.5 9.5t16.5 22.5l21 64q4 13 -2 22.5t-20 9.5h-608q-13 0 -25.5 -9.5t-16.5 -22.5z"/></svg>
<span class="t" style="top:25.00px;font-size:18.667px;line-height:18.667px;color:#2b2b2b;letter-spacing:0.142px;left:2980.50px;">Documentation</span>
<div class="r" style="left:3135.40px;top:13.30px;width:144.40px;height:39.80px;background:#3560a8;border-radius:3px;"></div>
<svg class="i" style="width:18.67px;height:18.67px;left:3148.50px;top:24.00px;" viewBox="0 -1536 1792 1792"><path fill="#eef2fa" transform="scale(1,-1)" d="M384 352v-64q0 -13 -9.5 -22.5t-22.5 -9.5h-64q-13 0 -22.5 9.5t-9.5 22.5v64q0 13 9.5 22.5t22.5 9.5h64q13 0 22.5 -9.5t9.5 -22.5zM384 608v-64q0 -13 -9.5 -22.5t-22.5 -9.5h-64q-13 0 -22.5 9.5t-9.5 22.5v64q0 13 9.5 22.5t22.5 9.5h64q13 0 22.5 -9.5t9.5 -22.5z M384 864v-64q0 -13 -9.5 -22.5t-22.5 -9.5h-64q-13 0 -22.5 9.5t-9.5 22.5v64q0 13 9.5 22.5t22.5 9.5h64q13 0 22.5 -9.5t9.5 -22.5zM1536 352v-64q0 -13 -9.5 -22.5t-22.5 -9.5h-960q-13 0 -22.5 9.5t-9.5 22.5v64q0 13 9.5 22.5t22.5 9.5h960q13 0 22.5 -9.5t9.5 -22.5z M1536 608v-64q0 -13 -9.5 -22.5t-22.5 -9.5h-960q-13 0 -22.5 9.5t-9.5 22.5v64q0 13 9.5 22.5t22.5 9.5h960q13 0 22.5 -9.5t9.5 -22.5zM1536 864v-64q0 -13 -9.5 -22.5t-22.5 -9.5h-960q-13 0 -22.5 9.5t-9.5 22.5v64q0 13 9.5 22.5t22.5 9.5h960q13 0 22.5 -9.5 t9.5 -22.5zM1664 160v832q0 13 -9.5 22.5t-22.5 9.5h-1472q-13 0 -22.5 -9.5t-9.5 -22.5v-832q0 -13 9.5 -22.5t22.5 -9.5h1472q13 0 22.5 9.5t9.5 22.5zM1792 1248v-1088q0 -66 -47 -113t-113 -47h-1472q-66 0 -113 47t-47 113v1088q0 66 47 113t113 47h1472q66 0 113 -47 t47 -113z"/></svg>
<span class="t" style="top:25.00px;font-size:18.667px;line-height:18.667px;color:#fff;letter-spacing:0.068px;left:3178.00px;">Tasks: 0</span>
<svg class="i" style="width:10.67px;height:18.67px;left:3256.30px;top:24.00px;" viewBox="0 -1536 1024 1792"><path fill="#fff" transform="scale(1,-1)" d="M1024 832q0 -26 -19 -45l-448 -448q-19 -19 -45 -19t-45 19l-448 448q-19 19 -19 45t19 45t45 19h896q26 0 45 -19t19 -45z"/></svg>
<div class="r" style="left:3293.80px;top:13.30px;width:160.70px;height:39.80px;background:#8341a3;border-radius:3px;"></div>
<svg class="i" style="width:13.33px;height:18.67px;left:3307.00px;top:24.00px;" viewBox="0 -1536 1280 1792"><path fill="#fff" transform="scale(1,-1)" d="M1280 137q0 -109 -62.5 -187t-150.5 -78h-854q-88 0 -150.5 78t-62.5 187q0 85 8.5 160.5t31.5 152t58.5 131t94 89t134.5 34.5q131 -128 313 -128t313 128q76 0 134.5 -34.5t94 -89t58.5 -131t31.5 -152t8.5 -160.5zM1024 1024q0 -159 -112.5 -271.5t-271.5 -112.5 t-271.5 112.5t-112.5 271.5t112.5 271.5t271.5 112.5t271.5 -112.5t112.5 -271.5z"/></svg>
<span class="t" style="top:25.00px;font-size:18.667px;line-height:18.667px;color:#fff;letter-spacing:-0.015px;left:3329.90px;">root@pam</span>
<svg class="i" style="width:10.67px;height:18.67px;left:3431.30px;top:24.00px;" viewBox="0 -1536 1024 1792"><path fill="#fff" transform="scale(1,-1)" d="M1024 832q0 -26 -19 -45l-448 -448q-19 -19 -45 -19t-45 19l-448 448q-19 19 -19 45t19 45t45 19h896q26 0 45 -19t19 -45z"/></svg>
<div class="r" style="left:402.00px;top:97.70px;width:1506.00px;height:1823.10px;background:#fff;box-shadow:0 1px 2.5px rgba(0,0,0,.22);"></div>
<svg class="i" style="width:28.00px;height:28.00px;left:415.20px;top:119.00px;" viewBox="0 -1536 1792 1792"><path fill="#3b65b1" transform="scale(1,-1)" d="M128 128h1024v128h-1024v-128zM128 640h1024v128h-1024v-128zM1696 192q0 40 -28 68t-68 28t-68 -28t-28 -68t28 -68t68 -28t68 28t28 68zM128 1152h1024v128h-1024v-128zM1696 704q0 40 -28 68t-68 28t-68 -28t-28 -68t28 -68t68 -28t68 28t28 68zM1696 1216 q0 40 -28 68t-68 28t-68 -28t-28 -68t28 -68t68 -28t68 28t28 68zM1792 384v-384h-1792v384h1792zM1792 896v-384h-1792v384h1792zM1792 1408v-384h-1792v384h1792z"/></svg>
<span class="t" style="top:119.00px;font-size:26.100px;line-height:26.100px;color:#3b65b1;letter-spacing:-0.109px;left:457.50px;">Remote &#x27;alnitak&#x27;</span>
<div class="r" style="left:1731.10px;top:112.20px;width:163.10px;height:39.60px;background:#f0f0f0;border-radius:4px;"></div>
<svg class="i" style="width:18.67px;height:18.67px;left:1743.60px;top:122.60px;" viewBox="0 -1536 1792 1792"><path fill="#222" transform="scale(1,-1)" d="M1408 608v-320q0 -119 -84.5 -203.5t-203.5 -84.5h-832q-119 0 -203.5 84.5t-84.5 203.5v832q0 119 84.5 203.5t203.5 84.5h704q14 0 23 -9t9 -23v-64q0 -14 -9 -23t-23 -9h-704q-66 0 -113 -47t-47 -113v-832q0 -66 47 -113t113 -47h832q66 0 113 47t47 113v320 q0 14 9 23t23 9h64q14 0 23 -9t9 -23zM1792 1472v-512q0 -26 -19 -45t-45 -19t-45 19l-176 176l-652 -652q-10 -10 -23 -10t-23 10l-114 114q-10 10 -10 23t10 23l652 652l-176 176q-19 19 -19 45t19 45t45 19h512q26 0 45 -19t19 -45z"/></svg>
<span class="t" style="top:124.00px;font-size:18.667px;line-height:18.667px;color:#2b2b2b;letter-spacing:-0.556px;left:1772.70px;">Open Web UI</span>
<span class="t" style="top:194.00px;font-size:18.667px;line-height:18.667px;color:#2b2b2b;letter-spacing:0.073px;left:429.30px;">Subscription Status</span>
<span class="t" style="top:194.00px;font-size:18.667px;line-height:18.667px;color:#2b2b2b;letter-spacing:0.136px;right:1621.26px;">Community</span>
<svg class="i" style="width:18.67px;height:18.67px;left:1859.17px;top:192.90px;" viewBox="0 -1536 1792 1792"><path fill="#3fa45b" transform="scale(1,-1)" d="M1671 970q0 -40 -28 -68l-724 -724l-136 -136q-28 -28 -68 -28t-68 28l-136 136l-362 362q-28 28 -28 68t28 68l136 136q28 28 68 28t68 -28l294 -295l656 657q28 28 68 28t68 -28l136 -136q28 -28 28 -68z"/></svg>
<span class="t" style="top:226.00px;font-size:18.667px;line-height:18.667px;color:#2b2b2b;letter-spacing:0.013px;left:429.30px;">Nodes</span>
<span class="t" style="top:226.00px;font-size:18.667px;line-height:18.667px;color:#2b2b2b;letter-spacing:0.489px;right:1620.91px;">2</span>
<svg class="i" style="width:16.00px;height:18.67px;left:1861.17px;top:225.10px;" viewBox="0 -1536 1536 1792"><path fill="#2b2b2b" transform="scale(1,-1)" d="M1344 1536q26 0 45 -19t19 -45v-1664q0 -26 -19 -45t-45 -19h-1280q-26 0 -45 19t-19 45v1664q0 26 19 45t45 19h1280zM512 1248v-64q0 -14 9 -23t23 -9h64q14 0 23 9t9 23v64q0 14 -9 23t-23 9h-64q-14 0 -23 -9t-9 -23zM512 992v-64q0 -14 9 -23t23 -9h64q14 0 23 9 t9 23v64q0 14 -9 23t-23 9h-64q-14 0 -23 -9t-9 -23zM512 736v-64q0 -14 9 -23t23 -9h64q14 0 23 9t9 23v64q0 14 -9 23t-23 9h-64q-14 0 -23 -9t-9 -23zM512 480v-64q0 -14 9 -23t23 -9h64q14 0 23 9t9 23v64q0 14 -9 23t-23 9h-64q-14 0 -23 -9t-9 -23zM384 160v64 q0 14 -9 23t-23 9h-64q-14 0 -23 -9t-9 -23v-64q0 -14 9 -23t23 -9h64q14 0 23 9t9 23zM384 416v64q0 14 -9 23t-23 9h-64q-14 0 -23 -9t-9 -23v-64q0 -14 9 -23t23 -9h64q14 0 23 9t9 23zM384 672v64q0 14 -9 23t-23 9h-64q-14 0 -23 -9t-9 -23v-64q0 -14 9 -23t23 -9h64 q14 0 23 9t9 23zM384 928v64q0 14 -9 23t-23 9h-64q-14 0 -23 -9t-9 -23v-64q0 -14 9 -23t23 -9h64q14 0 23 9t9 23zM384 1184v64q0 14 -9 23t-23 9h-64q-14 0 -23 -9t-9 -23v-64q0 -14 9 -23t23 -9h64q14 0 23 9t9 23zM896 -96v192q0 14 -9 23t-23 9h-320q-14 0 -23 -9 t-9 -23v-192q0 -14 9 -23t23 -9h320q14 0 23 9t9 23zM896 416v64q0 14 -9 23t-23 9h-64q-14 0 -23 -9t-9 -23v-64q0 -14 9 -23t23 -9h64q14 0 23 9t9 23zM896 672v64q0 14 -9 23t-23 9h-64q-14 0 -23 -9t-9 -23v-64q0 -14 9 -23t23 -9h64q14 0 23 9t9 23zM896 928v64 q0 14 -9 23t-23 9h-64q-14 0 -23 -9t-9 -23v-64q0 -14 9 -23t23 -9h64q14 0 23 9t9 23zM896 1184v64q0 14 -9 23t-23 9h-64q-14 0 -23 -9t-9 -23v-64q0 -14 9 -23t23 -9h64q14 0 23 9t9 23zM1152 160v64q0 14 -9 23t-23 9h-64q-14 0 -23 -9t-9 -23v-64q0 -14 9 -23t23 -9h64 q14 0 23 9t9 23zM1152 416v64q0 14 -9 23t-23 9h-64q-14 0 -23 -9t-9 -23v-64q0 -14 9 -23t23 -9h64q14 0 23 9t9 23zM1152 672v64q0 14 -9 23t-23 9h-64q-14 0 -23 -9t-9 -23v-64q0 -14 9 -23t23 -9h64q14 0 23 9t9 23zM1152 928v64q0 14 -9 23t-23 9h-64q-14 0 -23 -9 t-9 -23v-64q0 -14 9 -23t23 -9h64q14 0 23 9t9 23zM1152 1184v64q0 14 -9 23t-23 9h-64q-14 0 -23 -9t-9 -23v-64q0 -14 9 -23t23 -9h64q14 0 23 9t9 23z"/></svg>
<span class="t" style="top:259.00px;font-size:18.667px;line-height:18.667px;color:#2b2b2b;letter-spacing:-0.143px;left:429.30px;">Guests</span>
<span class="t" style="top:259.00px;font-size:18.667px;line-height:18.667px;color:#2b2b2b;letter-spacing:0.282px;right:1621.12px;">13 / 16 (running / total)</span>
<svg class="i" style="width:19.20px;height:17.92px;left:1858.90px;top:257.84px;" viewBox="0 -1536 1920 1792"><path fill="#2b2b2b" transform="scale(1,-1)" d="M1792 544v832q0 13 -9.5 22.5t-22.5 9.5h-1600q-13 0 -22.5 -9.5t-9.5 -22.5v-832q0 -13 9.5 -22.5t22.5 -9.5h1600q13 0 22.5 9.5t9.5 22.5zM1920 1376v-1088q0 -66 -47 -113t-113 -47h-544q0 -37 16 -77.5t32 -71t16 -43.5q0 -26 -19 -45t-45 -19h-512q-26 0 -45 19 t-19 45q0 14 16 44t32 70t16 78h-544q-66 0 -113 47t-47 113v1088q0 66 47 113t113 47h1600q66 0 113 -47t47 -113z"/></svg>
<div class="r" style="left:429.30px;top:303.53px;width:1451.30px;height:1.34px;background:#c9ced8;"></div>
<svg class="i" style="width:25.60px;height:22.40px;left:429.30px;top:337.90px;" viewBox="0 -1536 2048 1792"><path fill="#161616" transform="scale(1,-1)" d="M640 640v-512h-256v512h256zM1024 1152v-1024h-256v1024h256zM2048 0v-128h-2048v1536h128v-1408h1920zM1408 896v-768h-256v768h256zM1792 1280v-1152h-256v1152h256z"/></svg>
<span class="t" style="top:338.00px;font-size:22.400px;line-height:22.400px;color:#2b2b2b;letter-spacing:-0.405px;left:468.00px;">Usage</span>
<span class="t" style="top:382.00px;font-size:18.667px;line-height:18.667px;color:#2b2b2b;letter-spacing:-0.220px;left:429.30px;">Host CPU usage (avg.)</span>
<span class="t" style="top:382.00px;font-size:18.667px;line-height:18.667px;color:#2b2b2b;letter-spacing:-0.344px;right:1621.74px;">7.36%</span>
<svg class="i" style="left:1857.50px;top:378.30px;width:22px;height:22px" viewBox="0 0 24 24"><g fill="#161616"><rect x="7" y="0" width="2" height="24"/><rect x="0" y="7" width="24" height="2"/><rect x="11" y="0" width="2" height="24"/><rect x="0" y="11" width="24" height="2"/><rect x="15" y="0" width="2" height="24"/><rect x="0" y="15" width="24" height="2"/><rect x="3" y="3" width="18" height="18" rx="1.5"/></g><rect x="5.2" y="5.2" width="13.6" height="13.6" fill="#fff"/><rect x="7.6" y="7.6" width="8.8" height="8.8" fill="#161616"/></svg>
<div class="r" style="left:429.30px;top:407.00px;width:1451.30px;height:5.30px;background:#efefef;border-radius:2.6px;"></div>
<div class="r" style="left:429.30px;top:407.00px;width:106.82px;height:5.30px;background:#2553a6;border-radius:2.6px 0 0 2.6px;"></div>
<span class="t" style="top:429.00px;font-size:18.667px;line-height:18.667px;color:#2b2b2b;letter-spacing:0.075px;left:429.30px;">Host Memory used</span>
<span class="t" style="top:429.00px;font-size:18.667px;line-height:18.667px;color:#2b2b2b;letter-spacing:-0.047px;right:1621.45px;">18.31% (46.019 GiB of 251.315 GiB)</span>
<svg class="i" style="left:1857.50px;top:430.27px;width:22px;height:11.46px" viewBox="0 0 24 12.5"><rect x="1" y="1" width="22" height="8.6" rx="0.8" fill="none" stroke="#161616" stroke-width="2"/><g fill="#161616"><rect x="4.6" y="3.8" width="3" height="3"/><rect x="10.5" y="3.8" width="3" height="3"/><rect x="16.4" y="3.8" width="3" height="3"/><rect x="1" y="10" width="4" height="2.2"/><rect x="6.5" y="10" width="4.5" height="2.2"/><rect x="13" y="10" width="4.5" height="2.2"/><rect x="19" y="10" width="4" height="2.2"/></g></svg>
<div class="r" style="left:429.30px;top:454.20px;width:1451.30px;height:5.30px;background:#efefef;border-radius:2.6px;"></div>
<div class="r" style="left:429.30px;top:454.20px;width:265.73px;height:5.30px;background:#2553a6;border-radius:2.6px 0 0 2.6px;"></div>
<span class="t" style="top:474.00px;font-size:18.667px;line-height:18.667px;color:#2b2b2b;letter-spacing:-0.068px;left:429.30px;">Host Storage used</span>
<span class="t" style="top:474.00px;font-size:18.667px;line-height:18.667px;color:#2b2b2b;letter-spacing:0.057px;right:1621.34px;">42.78% (5.576 TiB of 13.036 TiB)</span>
<svg class="i" style="width:16.00px;height:18.67px;left:1860.50px;top:473.60px;" viewBox="0 -1536 1536 1792"><path fill="#2b2b2b" transform="scale(1,-1)" d="M768 768q237 0 443 43t325 127v-170q0 -69 -103 -128t-280 -93.5t-385 -34.5t-385 34.5t-280 93.5t-103 128v170q119 -84 325 -127t443 -43zM768 0q237 0 443 43t325 127v-170q0 -69 -103 -128t-280 -93.5t-385 -34.5t-385 34.5t-280 93.5t-103 128v170q119 -84 325 -127 t443 -43zM768 384q237 0 443 43t325 127v-170q0 -69 -103 -128t-280 -93.5t-385 -34.5t-385 34.5t-280 93.5t-103 128v170q119 -84 325 -127t443 -43zM768 1536q208 0 385 -34.5t280 -93.5t103 -128v-128q0 -69 -103 -128t-280 -93.5t-385 -34.5t-385 34.5t-280 93.5 t-103 128v128q0 69 103 128t280 93.5t385 34.5z"/></svg>
<div class="r" style="left:429.30px;top:499.00px;width:1451.30px;height:5.30px;background:#efefef;border-radius:2.6px;"></div>
<div class="r" style="left:429.30px;top:499.00px;width:620.87px;height:5.30px;background:#2553a6;border-radius:2.6px 0 0 2.6px;"></div>
<div class="r" style="left:429.30px;top:531.63px;width:1451.30px;height:1.34px;background:#c9ced8;"></div>
<svg class="i" style="width:22.40px;height:22.40px;left:429.30px;top:565.00px;" viewBox="0 -1536 1792 1792"><path fill="#161616" transform="scale(1,-1)" d="M768 646l546 -546q-106 -108 -247.5 -168t-298.5 -60q-209 0 -385.5 103t-279.5 279.5t-103 385.5t103 385.5t279.5 279.5t385.5 103v-762zM955 640h773q0 -157 -60 -298.5t-168 -247.5zM1664 768h-768v768q209 0 385.5 -103t279.5 -279.5t103 -385.5z"/></svg>
<span class="t" style="top:566.00px;font-size:22.400px;line-height:22.400px;color:#2b2b2b;letter-spacing:0.299px;left:464.80px;">Allocation</span>
<span class="t" style="top:610.00px;font-size:18.667px;line-height:18.667px;color:#2b2b2b;letter-spacing:-0.297px;left:429.30px;">CPU Cores assigned</span>
<span class="t" style="top:610.00px;font-size:18.667px;line-height:18.667px;color:#2b2b2b;letter-spacing:0.140px;right:1621.26px;">64 running / 64 physical (72 total configured)</span>
<svg class="i" style="left:1857.50px;top:605.90px;width:22px;height:22px" viewBox="0 0 24 24"><g fill="#161616"><rect x="7" y="0" width="2" height="24"/><rect x="0" y="7" width="24" height="2"/><rect x="11" y="0" width="2" height="24"/><rect x="0" y="11" width="24" height="2"/><rect x="15" y="0" width="2" height="24"/><rect x="0" y="15" width="24" height="2"/><rect x="3" y="3" width="18" height="18" rx="1.5"/></g><rect x="5.2" y="5.2" width="13.6" height="13.6" fill="#fff"/><rect x="7.6" y="7.6" width="8.8" height="8.8" fill="#161616"/></svg>
<span class="t" style="top:645.00px;font-size:18.667px;line-height:18.667px;color:#2b2b2b;letter-spacing:0.068px;left:429.30px;">Memory assigned</span>
<span class="t" style="top:645.00px;font-size:18.667px;line-height:18.667px;color:#2b2b2b;letter-spacing:0.033px;right:1621.37px;">112 GiB running / 251.315 GiB physical (122 GiB total configured)</span>
<svg class="i" style="left:1857.50px;top:645.77px;width:22px;height:11.46px" viewBox="0 0 24 12.5"><rect x="1" y="1" width="22" height="8.6" rx="0.8" fill="none" stroke="#161616" stroke-width="2"/><g fill="#161616"><rect x="4.6" y="3.8" width="3" height="3"/><rect x="10.5" y="3.8" width="3" height="3"/><rect x="16.4" y="3.8" width="3" height="3"/><rect x="1" y="10" width="4" height="2.2"/><rect x="6.5" y="10" width="4.5" height="2.2"/><rect x="13" y="10" width="4.5" height="2.2"/><rect x="19" y="10" width="4" height="2.2"/></g></svg>
<div class="r" style="left:429.30px;top:690.03px;width:1451.30px;height:1.34px;background:#c9ced8;"></div>
<svg class="i" style="width:22.40px;height:22.40px;left:442.60px;top:742.60px;" viewBox="0 -1536 1792 1792"><path fill="#2b2b2b" transform="scale(1,-1)" d="M128 128h1024v128h-1024v-128zM128 640h1024v128h-1024v-128zM1696 192q0 40 -28 68t-68 28t-68 -28t-28 -68t28 -68t68 -28t68 28t28 68zM128 1152h1024v128h-1024v-128zM1696 704q0 40 -28 68t-68 28t-68 -28t-28 -68t28 -68t68 -28t68 28t28 68zM1696 1216 q0 40 -28 68t-68 28t-68 -28t-28 -68t28 -68t68 -28t68 28t28 68zM1792 384v-384h-1792v384h1792zM1792 896v-384h-1792v384h1792zM1792 1408v-384h-1792v384h1792z"/></svg>
<span class="t" style="top:743.00px;font-size:22.400px;line-height:22.400px;color:#2b2b2b;letter-spacing:-0.239px;left:478.70px;">Resources</span>
<div class="r" style="left:596.80px;top:733.10px;width:1191.60px;height:41.90px;background:#fff;border:1.3px solid #c6cad4;border-radius:4.5px;box-sizing:border-box;"></div>
<span class="t" style="top:745.00px;font-size:18.667px;line-height:18.667px;color:#8c8c8c;letter-spacing:0.041px;left:612.00px;">Filter</span>
<div class="r" style="left:1816.00px;top:734.00px;width:51.40px;height:39.70px;background:#f0f0f0;border-radius:4px;"></div>
<svg class="i" style="width:16.00px;height:18.67px;left:1833.70px;top:744.40px;" viewBox="0 -1536 1536 1792"><path fill="#222" transform="scale(1,-1)" d="M1511 480q0 -5 -1 -7q-64 -268 -268 -434.5t-478 -166.5q-146 0 -282.5 55t-243.5 157l-129 -129q-19 -19 -45 -19t-45 19t-19 45v448q0 26 19 45t45 19h448q26 0 45 -19t19 -45t-19 -45l-137 -137q71 -66 161 -102t187 -36q134 0 250 65t186 179q11 17 53 117 q8 23 30 23h192q13 0 22.5 -9.5t9.5 -22.5zM1536 1280v-448q0 -26 -19 -45t-45 -19h-448q-26 0 -45 19t-19 45t19 45l138 138q-148 137 -349 137q-134 0 -250 -65t-186 -179q-11 -17 -53 -117q-8 -23 -30 -23h-199q-13 0 -22.5 9.5t-9.5 22.5v7q65 268 270 434.5t480 166.5 q146 0 284 -55.5t245 -156.5l130 129q19 19 45 19t45 -19t19 -45z"/></svg>
<div class="r" style="left:429.30px;top:789.13px;width:1451.30px;height:1.34px;background:#c9ced8;"></div>
<div class="r" style="left:402px;top:790.5px;width:1506px;height:1104.1px;overflow:hidden"><div style="position:absolute;left:-402px;top:-790.5px">
<svg class="i" style="width:10.67px;height:18.67px;left:449.80px;top:807.80px;" viewBox="0 -1536 1024 1792"><path fill="#111" transform="scale(1,-1)" d="M1024 832q0 -26 -19 -45l-448 -448q-19 -19 -45 -19t-45 19l-448 448q-19 19 -19 45t19 45t45 19h896q26 0 45 -19t19 -45z"/></svg>
<svg class="i" style="width:18.67px;height:18.67px;left:467.20px;top:808.10px;" viewBox="0 -1536 1792 1792"><path fill="#2b2b2b" transform="scale(1,-1)" d="M128 128h1024v128h-1024v-128zM128 640h1024v128h-1024v-128zM1696 192q0 40 -28 68t-68 28t-68 -28t-28 -68t28 -68t68 -28t68 28t28 68zM128 1152h1024v128h-1024v-128zM1696 704q0 40 -28 68t-68 28t-68 -28t-28 -68t28 -68t68 -28t68 28t28 68zM1696 1216 q0 40 -28 68t-68 28t-68 -28t-28 -68t28 -68t68 -28t68 28t28 68zM1792 384v-384h-1792v384h1792zM1792 896v-384h-1792v384h1792zM1792 1408v-384h-1792v384h1792z"/></svg>
<span class="t" style="top:809.00px;font-size:18.667px;line-height:18.667px;color:#2b2b2b;letter-spacing:-0.034px;left:500.30px;">Datacenter</span>
<svg class="i" style="width:18.67px;height:18.67px;left:1837.67px;top:807.80px;" viewBox="0 -1536 1792 1792"><path fill="#2f5cb0" transform="scale(1,-1)" d="M1408 608v-320q0 -119 -84.5 -203.5t-203.5 -84.5h-832q-119 0 -203.5 84.5t-84.5 203.5v832q0 119 84.5 203.5t203.5 84.5h704q14 0 23 -9t9 -23v-64q0 -14 -9 -23t-23 -9h-704q-66 0 -113 -47t-47 -113v-832q0 -66 47 -113t113 -47h832q66 0 113 47t47 113v320 q0 14 9 23t23 9h64q14 0 23 -9t9 -23zM1792 1472v-512q0 -26 -19 -45t-45 -19t-45 19l-176 176l-652 -652q-10 -10 -23 -10t-23 10l-114 114q-10 10 -10 23t10 23l652 652l-176 176q-19 19 -19 45t19 45t45 19h512q26 0 45 -19t19 -45z"/></svg>
<div class="r" style="left:429.30px;top:845.37px;width:1451.30px;height:53.30px;background:#e8edf6;"></div>
<svg class="i" style="width:10.67px;height:18.67px;left:477.10px;top:861.97px;" viewBox="0 -1536 1024 1792"><path fill="#111" transform="scale(1,-1)" d="M1024 832q0 -26 -19 -45l-448 -448q-19 -19 -45 -19t-45 19l-448 448q-19 19 -19 45t19 45t45 19h896q26 0 45 -19t19 -45z"/></svg>
<svg class="i" style="width:16.00px;height:18.67px;left:498.40px;top:862.37px;" viewBox="0 -1536 1536 1792"><path fill="#2b2b2b" transform="scale(1,-1)" d="M1344 1536q26 0 45 -19t19 -45v-1664q0 -26 -19 -45t-45 -19h-1280q-26 0 -45 19t-19 45v1664q0 26 19 45t45 19h1280zM512 1248v-64q0 -14 9 -23t23 -9h64q14 0 23 9t9 23v64q0 14 -9 23t-23 9h-64q-14 0 -23 -9t-9 -23zM512 992v-64q0 -14 9 -23t23 -9h64q14 0 23 9 t9 23v64q0 14 -9 23t-23 9h-64q-14 0 -23 -9t-9 -23zM512 736v-64q0 -14 9 -23t23 -9h64q14 0 23 9t9 23v64q0 14 -9 23t-23 9h-64q-14 0 -23 -9t-9 -23zM512 480v-64q0 -14 9 -23t23 -9h64q14 0 23 9t9 23v64q0 14 -9 23t-23 9h-64q-14 0 -23 -9t-9 -23zM384 160v64 q0 14 -9 23t-23 9h-64q-14 0 -23 -9t-9 -23v-64q0 -14 9 -23t23 -9h64q14 0 23 9t9 23zM384 416v64q0 14 -9 23t-23 9h-64q-14 0 -23 -9t-9 -23v-64q0 -14 9 -23t23 -9h64q14 0 23 9t9 23zM384 672v64q0 14 -9 23t-23 9h-64q-14 0 -23 -9t-9 -23v-64q0 -14 9 -23t23 -9h64 q14 0 23 9t9 23zM384 928v64q0 14 -9 23t-23 9h-64q-14 0 -23 -9t-9 -23v-64q0 -14 9 -23t23 -9h64q14 0 23 9t9 23zM384 1184v64q0 14 -9 23t-23 9h-64q-14 0 -23 -9t-9 -23v-64q0 -14 9 -23t23 -9h64q14 0 23 9t9 23zM896 -96v192q0 14 -9 23t-23 9h-320q-14 0 -23 -9 t-9 -23v-192q0 -14 9 -23t23 -9h320q14 0 23 9t9 23zM896 416v64q0 14 -9 23t-23 9h-64q-14 0 -23 -9t-9 -23v-64q0 -14 9 -23t23 -9h64q14 0 23 9t9 23zM896 672v64q0 14 -9 23t-23 9h-64q-14 0 -23 -9t-9 -23v-64q0 -14 9 -23t23 -9h64q14 0 23 9t9 23zM896 928v64 q0 14 -9 23t-23 9h-64q-14 0 -23 -9t-9 -23v-64q0 -14 9 -23t23 -9h64q14 0 23 9t9 23zM896 1184v64q0 14 -9 23t-23 9h-64q-14 0 -23 -9t-9 -23v-64q0 -14 9 -23t23 -9h64q14 0 23 9t9 23zM1152 160v64q0 14 -9 23t-23 9h-64q-14 0 -23 -9t-9 -23v-64q0 -14 9 -23t23 -9h64 q14 0 23 9t9 23zM1152 416v64q0 14 -9 23t-23 9h-64q-14 0 -23 -9t-9 -23v-64q0 -14 9 -23t23 -9h64q14 0 23 9t9 23zM1152 672v64q0 14 -9 23t-23 9h-64q-14 0 -23 -9t-9 -23v-64q0 -14 9 -23t23 -9h64q14 0 23 9t9 23zM1152 928v64q0 14 -9 23t-23 9h-64q-14 0 -23 -9 t-9 -23v-64q0 -14 9 -23t23 -9h64q14 0 23 9t9 23zM1152 1184v64q0 14 -9 23t-23 9h-64q-14 0 -23 -9t-9 -23v-64q0 -14 9 -23t23 -9h64q14 0 23 9t9 23z"/></svg>
<svg class="i" style="left:513.40px;top:870.57px;width:13.2px;height:13.2px" viewBox="0 0 13.2 13.2"><circle cx="6.6" cy="6.6" r="6.4" fill="#3fa45b" stroke="#fff" stroke-width="0.6"/><path d="M3.4 6.8 L5.7 9 L9.8 4.9" fill="none" stroke="#fff" stroke-width="1.9"/></svg>
<span class="t" style="top:863.00px;font-size:18.667px;line-height:18.667px;color:#2b2b2b;letter-spacing:0.057px;left:532.50px;">nunki</span>
<svg class="i" style="width:18.67px;height:18.67px;left:1837.67px;top:861.97px;" viewBox="0 -1536 1792 1792"><path fill="#2f5cb0" transform="scale(1,-1)" d="M1408 608v-320q0 -119 -84.5 -203.5t-203.5 -84.5h-832q-119 0 -203.5 84.5t-84.5 203.5v832q0 119 84.5 203.5t203.5 84.5h704q14 0 23 -9t9 -23v-64q0 -14 -9 -23t-23 -9h-704q-66 0 -113 -47t-47 -113v-832q0 -66 47 -113t113 -47h832q66 0 113 47t47 113v320 q0 14 9 23t23 9h64q14 0 23 -9t9 -23zM1792 1472v-512q0 -26 -19 -45t-45 -19t-45 19l-176 176l-652 -652q-10 -10 -23 -10t-23 10l-114 114q-10 10 -10 23t10 23l652 652l-176 176q-19 19 -19 45t19 45t45 19h512q26 0 45 -19t19 -45z"/></svg>
<svg class="i" style="width:18.67px;height:18.67px;left:523.90px;top:915.94px;" viewBox="0 -1536 1792 1792"><path fill="#111" transform="scale(1,-1)" d="M896 -93l640 349v636l-640 -233v-752zM832 772l698 254l-698 254l-698 -254zM1664 1024v-768q0 -35 -18 -65t-49 -47l-704 -384q-28 -16 -61 -16t-61 16l-704 384q-31 17 -49 47t-18 65v768q0 40 23 73t61 47l704 256q22 8 44 8t44 -8l704 -256q38 -14 61 -47t23 -73z"/></svg>
<svg class="i" style="left:536.6px;top:921.94px;width:13.4px;height:14.4px" viewBox="0 0 14 15"><path d="M1.3 0.6 L13.4 7.5 L1.3 14.4 Z" fill="#3fa45b" stroke="#fff" stroke-width="1.2" paint-order="stroke"/></svg>
<span class="t" style="top:917.00px;font-size:18.667px;line-height:18.667px;color:#2b2b2b;letter-spacing:0.135px;left:560.00px;">166 (capella)</span>
<svg class="i" style="width:18.67px;height:18.67px;left:1837.67px;top:916.14px;" viewBox="0 -1536 1792 1792"><path fill="#2f5cb0" transform="scale(1,-1)" d="M1408 608v-320q0 -119 -84.5 -203.5t-203.5 -84.5h-832q-119 0 -203.5 84.5t-84.5 203.5v832q0 119 84.5 203.5t203.5 84.5h704q14 0 23 -9t9 -23v-64q0 -14 -9 -23t-23 -9h-704q-66 0 -113 -47t-47 -113v-832q0 -66 47 -113t113 -47h832q66 0 113 47t47 113v320 q0 14 9 23t23 9h64q14 0 23 -9t9 -23zM1792 1472v-512q0 -26 -19 -45t-45 -19t-45 19l-176 176l-652 -652q-10 -10 -23 -10t-23 10l-114 114q-10 10 -10 23t10 23l652 652l-176 176q-19 19 -19 45t19 45t45 19h512q26 0 45 -19t19 -45z"/></svg>
<svg class="i" style="width:16.00px;height:18.67px;left:1717.00px;top:916.14px;" viewBox="0 -1536 1536 1792"><path fill="#b3181d" transform="scale(1,-1)" d="M1536 640q0 -156 -61 -298t-164 -245t-245 -164t-298 -61t-298 61t-245 164t-164 245t-61 298q0 182 80.5 343t226.5 270q43 32 95.5 25t83.5 -50q32 -42 24.5 -94.5t-49.5 -84.5q-98 -74 -151.5 -181t-53.5 -228q0 -104 40.5 -198.5t109.5 -163.5t163.5 -109.5 t198.5 -40.5t198.5 40.5t163.5 109.5t109.5 163.5t40.5 198.5q0 121 -53.5 228t-151.5 181q-42 32 -49.5 84.5t24.5 94.5q31 43 84 50t95 -25q146 -109 226.5 -270t80.5 -343zM896 1408v-640q0 -52 -38 -90t-90 -38t-90 38t-38 90v640q0 52 38 90t90 38t90 -38t38 -90z"/></svg>
<svg class="i" style="width:14.67px;height:18.67px;left:1758.17px;top:916.14px;" viewBox="0 -1536 1408 1792"><path fill="#8a8a8a" transform="scale(1,-1)" d="M1384 609l-1328 -738q-23 -13 -39.5 -3t-16.5 36v1472q0 26 16.5 36t39.5 -3l1328 -738q23 -13 23 -31t-23 -31z"/></svg>
<svg class="i" style="width:18.67px;height:18.67px;left:1797.37px;top:916.14px;" viewBox="0 -1536 1792 1792"><path fill="#2f5cb0" transform="scale(1,-1)" d="M1764 1525q33 -24 27 -64l-256 -1536q-5 -29 -32 -45q-14 -8 -31 -8q-11 0 -24 5l-527 215l-298 -327q-18 -21 -47 -21q-14 0 -23 4q-19 7 -30 23.5t-11 36.5v452l-472 193q-37 14 -40 55q-3 39 32 59l1664 960q35 21 68 -2zM1422 26l221 1323l-1434 -827l336 -137 l863 639l-478 -797z"/></svg>
<svg class="i" style="width:18.67px;height:18.67px;left:523.90px;top:970.11px;" viewBox="0 -1536 1792 1792"><path fill="#111" transform="scale(1,-1)" d="M896 -93l640 349v636l-640 -233v-752zM832 772l698 254l-698 254l-698 -254zM1664 1024v-768q0 -35 -18 -65t-49 -47l-704 -384q-28 -16 -61 -16t-61 16l-704 384q-31 17 -49 47t-18 65v768q0 40 23 73t61 47l704 256q22 8 44 8t44 -8l704 -256q38 -14 61 -47t23 -73z"/></svg>
<svg class="i" style="left:536.6px;top:976.11px;width:13.4px;height:14.4px" viewBox="0 0 14 15"><path d="M1.3 0.6 L13.4 7.5 L1.3 14.4 Z" fill="#3fa45b" stroke="#fff" stroke-width="1.2" paint-order="stroke"/></svg>
<span class="t" style="top:971.00px;font-size:18.667px;line-height:18.667px;color:#2b2b2b;letter-spacing:0.212px;left:560.00px;">167 (maia)</span>
<svg class="i" style="width:18.67px;height:18.67px;left:1837.67px;top:970.31px;" viewBox="0 -1536 1792 1792"><path fill="#2f5cb0" transform="scale(1,-1)" d="M1408 608v-320q0 -119 -84.5 -203.5t-203.5 -84.5h-832q-119 0 -203.5 84.5t-84.5 203.5v832q0 119 84.5 203.5t203.5 84.5h704q14 0 23 -9t9 -23v-64q0 -14 -9 -23t-23 -9h-704q-66 0 -113 -47t-47 -113v-832q0 -66 47 -113t113 -47h832q66 0 113 47t47 113v320 q0 14 9 23t23 9h64q14 0 23 -9t9 -23zM1792 1472v-512q0 -26 -19 -45t-45 -19t-45 19l-176 176l-652 -652q-10 -10 -23 -10t-23 10l-114 114q-10 10 -10 23t10 23l652 652l-176 176q-19 19 -19 45t19 45t45 19h512q26 0 45 -19t19 -45z"/></svg>
<svg class="i" style="width:16.00px;height:18.67px;left:1717.00px;top:970.31px;" viewBox="0 -1536 1536 1792"><path fill="#b3181d" transform="scale(1,-1)" d="M1536 640q0 -156 -61 -298t-164 -245t-245 -164t-298 -61t-298 61t-245 164t-164 245t-61 298q0 182 80.5 343t226.5 270q43 32 95.5 25t83.5 -50q32 -42 24.5 -94.5t-49.5 -84.5q-98 -74 -151.5 -181t-53.5 -228q0 -104 40.5 -198.5t109.5 -163.5t163.5 -109.5 t198.5 -40.5t198.5 40.5t163.5 109.5t109.5 163.5t40.5 198.5q0 121 -53.5 228t-151.5 181q-42 32 -49.5 84.5t24.5 94.5q31 43 84 50t95 -25q146 -109 226.5 -270t80.5 -343zM896 1408v-640q0 -52 -38 -90t-90 -38t-90 38t-38 90v640q0 52 38 90t90 38t90 -38t38 -90z"/></svg>
<svg class="i" style="width:14.67px;height:18.67px;left:1758.17px;top:970.31px;" viewBox="0 -1536 1408 1792"><path fill="#8a8a8a" transform="scale(1,-1)" d="M1384 609l-1328 -738q-23 -13 -39.5 -3t-16.5 36v1472q0 26 16.5 36t39.5 -3l1328 -738q23 -13 23 -31t-23 -31z"/></svg>
<svg class="i" style="width:18.67px;height:18.67px;left:1797.37px;top:970.31px;" viewBox="0 -1536 1792 1792"><path fill="#2f5cb0" transform="scale(1,-1)" d="M1764 1525q33 -24 27 -64l-256 -1536q-5 -29 -32 -45q-14 -8 -31 -8q-11 0 -24 5l-527 215l-298 -327q-18 -21 -47 -21q-14 0 -23 4q-19 7 -30 23.5t-11 36.5v452l-472 193q-37 14 -40 55q-3 39 32 59l1664 960q35 21 68 -2zM1422 26l221 1323l-1434 -827l336 -137 l863 639l-478 -797z"/></svg>
<svg class="i" style="width:18.67px;height:18.67px;left:523.90px;top:1024.28px;" viewBox="0 -1536 1792 1792"><path fill="#111" transform="scale(1,-1)" d="M896 -93l640 349v636l-640 -233v-752zM832 772l698 254l-698 254l-698 -254zM1664 1024v-768q0 -35 -18 -65t-49 -47l-704 -384q-28 -16 -61 -16t-61 16l-704 384q-31 17 -49 47t-18 65v768q0 40 23 73t61 47l704 256q22 8 44 8t44 -8l704 -256q38 -14 61 -47t23 -73z"/></svg>
<svg class="i" style="left:536.6px;top:1030.28px;width:13.4px;height:14.4px" viewBox="0 0 14 15"><path d="M1.3 0.6 L13.4 7.5 L1.3 14.4 Z" fill="#3fa45b" stroke="#fff" stroke-width="1.2" paint-order="stroke"/></svg>
<span class="t" style="top:1025.00px;font-size:18.667px;line-height:18.667px;color:#2b2b2b;letter-spacing:0.238px;left:560.00px;">168 (mintaka)</span>
<svg class="i" style="width:18.67px;height:18.67px;left:1837.67px;top:1024.48px;" viewBox="0 -1536 1792 1792"><path fill="#2f5cb0" transform="scale(1,-1)" d="M1408 608v-320q0 -119 -84.5 -203.5t-203.5 -84.5h-832q-119 0 -203.5 84.5t-84.5 203.5v832q0 119 84.5 203.5t203.5 84.5h704q14 0 23 -9t9 -23v-64q0 -14 -9 -23t-23 -9h-704q-66 0 -113 -47t-47 -113v-832q0 -66 47 -113t113 -47h832q66 0 113 47t47 113v320 q0 14 9 23t23 9h64q14 0 23 -9t9 -23zM1792 1472v-512q0 -26 -19 -45t-45 -19t-45 19l-176 176l-652 -652q-10 -10 -23 -10t-23 10l-114 114q-10 10 -10 23t10 23l652 652l-176 176q-19 19 -19 45t19 45t45 19h512q26 0 45 -19t19 -45z"/></svg>
<svg class="i" style="width:16.00px;height:18.67px;left:1717.00px;top:1024.48px;" viewBox="0 -1536 1536 1792"><path fill="#b3181d" transform="scale(1,-1)" d="M1536 640q0 -156 -61 -298t-164 -245t-245 -164t-298 -61t-298 61t-245 164t-164 245t-61 298q0 182 80.5 343t226.5 270q43 32 95.5 25t83.5 -50q32 -42 24.5 -94.5t-49.5 -84.5q-98 -74 -151.5 -181t-53.5 -228q0 -104 40.5 -198.5t109.5 -163.5t163.5 -109.5 t198.5 -40.5t198.5 40.5t163.5 109.5t109.5 163.5t40.5 198.5q0 121 -53.5 228t-151.5 181q-42 32 -49.5 84.5t24.5 94.5q31 43 84 50t95 -25q146 -109 226.5 -270t80.5 -343zM896 1408v-640q0 -52 -38 -90t-90 -38t-90 38t-38 90v640q0 52 38 90t90 38t90 -38t38 -90z"/></svg>
<svg class="i" style="width:14.67px;height:18.67px;left:1758.17px;top:1024.48px;" viewBox="0 -1536 1408 1792"><path fill="#8a8a8a" transform="scale(1,-1)" d="M1384 609l-1328 -738q-23 -13 -39.5 -3t-16.5 36v1472q0 26 16.5 36t39.5 -3l1328 -738q23 -13 23 -31t-23 -31z"/></svg>
<svg class="i" style="width:18.67px;height:18.67px;left:1797.37px;top:1024.48px;" viewBox="0 -1536 1792 1792"><path fill="#2f5cb0" transform="scale(1,-1)" d="M1764 1525q33 -24 27 -64l-256 -1536q-5 -29 -32 -45q-14 -8 -31 -8q-11 0 -24 5l-527 215l-298 -327q-18 -21 -47 -21q-14 0 -23 4q-19 7 -30 23.5t-11 36.5v452l-472 193q-37 14 -40 55q-3 39 32 59l1664 960q35 21 68 -2zM1422 26l221 1323l-1434 -827l336 -137 l863 639l-478 -797z"/></svg>
<svg class="i" style="width:18.67px;height:18.67px;left:523.90px;top:1078.45px;" viewBox="0 -1536 1792 1792"><path fill="#111" transform="scale(1,-1)" d="M896 -93l640 349v636l-640 -233v-752zM832 772l698 254l-698 254l-698 -254zM1664 1024v-768q0 -35 -18 -65t-49 -47l-704 -384q-28 -16 -61 -16t-61 16l-704 384q-31 17 -49 47t-18 65v768q0 40 23 73t61 47l704 256q22 8 44 8t44 -8l704 -256q38 -14 61 -47t23 -73z"/></svg>
<svg class="i" style="left:536.6px;top:1084.45px;width:13.4px;height:14.4px" viewBox="0 0 14 15"><path d="M1.3 0.6 L13.4 7.5 L1.3 14.4 Z" fill="#3fa45b" stroke="#fff" stroke-width="1.2" paint-order="stroke"/></svg>
<span class="t" style="top:1080.00px;font-size:18.667px;line-height:18.667px;color:#2b2b2b;letter-spacing:0.150px;left:560.00px;">169 (nunki)</span>
<svg class="i" style="width:18.67px;height:18.67px;left:1837.67px;top:1078.65px;" viewBox="0 -1536 1792 1792"><path fill="#2f5cb0" transform="scale(1,-1)" d="M1408 608v-320q0 -119 -84.5 -203.5t-203.5 -84.5h-832q-119 0 -203.5 84.5t-84.5 203.5v832q0 119 84.5 203.5t203.5 84.5h704q14 0 23 -9t9 -23v-64q0 -14 -9 -23t-23 -9h-704q-66 0 -113 -47t-47 -113v-832q0 -66 47 -113t113 -47h832q66 0 113 47t47 113v320 q0 14 9 23t23 9h64q14 0 23 -9t9 -23zM1792 1472v-512q0 -26 -19 -45t-45 -19t-45 19l-176 176l-652 -652q-10 -10 -23 -10t-23 10l-114 114q-10 10 -10 23t10 23l652 652l-176 176q-19 19 -19 45t19 45t45 19h512q26 0 45 -19t19 -45z"/></svg>
<svg class="i" style="width:16.00px;height:18.67px;left:1717.00px;top:1078.65px;" viewBox="0 -1536 1536 1792"><path fill="#b3181d" transform="scale(1,-1)" d="M1536 640q0 -156 -61 -298t-164 -245t-245 -164t-298 -61t-298 61t-245 164t-164 245t-61 298q0 182 80.5 343t226.5 270q43 32 95.5 25t83.5 -50q32 -42 24.5 -94.5t-49.5 -84.5q-98 -74 -151.5 -181t-53.5 -228q0 -104 40.5 -198.5t109.5 -163.5t163.5 -109.5 t198.5 -40.5t198.5 40.5t163.5 109.5t109.5 163.5t40.5 198.5q0 121 -53.5 228t-151.5 181q-42 32 -49.5 84.5t24.5 94.5q31 43 84 50t95 -25q146 -109 226.5 -270t80.5 -343zM896 1408v-640q0 -52 -38 -90t-90 -38t-90 38t-38 90v640q0 52 38 90t90 38t90 -38t38 -90z"/></svg>
<svg class="i" style="width:14.67px;height:18.67px;left:1758.17px;top:1078.65px;" viewBox="0 -1536 1408 1792"><path fill="#8a8a8a" transform="scale(1,-1)" d="M1384 609l-1328 -738q-23 -13 -39.5 -3t-16.5 36v1472q0 26 16.5 36t39.5 -3l1328 -738q23 -13 23 -31t-23 -31z"/></svg>
<svg class="i" style="width:18.67px;height:18.67px;left:1797.37px;top:1078.65px;" viewBox="0 -1536 1792 1792"><path fill="#2f5cb0" transform="scale(1,-1)" d="M1764 1525q33 -24 27 -64l-256 -1536q-5 -29 -32 -45q-14 -8 -31 -8q-11 0 -24 5l-527 215l-298 -327q-18 -21 -47 -21q-14 0 -23 4q-19 7 -30 23.5t-11 36.5v452l-472 193q-37 14 -40 55q-3 39 32 59l1664 960q35 21 68 -2zM1422 26l221 1323l-1434 -827l336 -137 l863 639l-478 -797z"/></svg>
<svg class="i" style="width:18.67px;height:18.67px;left:523.90px;top:1132.62px;" viewBox="0 -1536 1792 1792"><path fill="#111" transform="scale(1,-1)" d="M896 -93l640 349v636l-640 -233v-752zM832 772l698 254l-698 254l-698 -254zM1664 1024v-768q0 -35 -18 -65t-49 -47l-704 -384q-28 -16 -61 -16t-61 16l-704 384q-31 17 -49 47t-18 65v768q0 40 23 73t61 47l704 256q22 8 44 8t44 -8l704 -256q38 -14 61 -47t23 -73z"/></svg>
<svg class="i" style="left:536.6px;top:1138.62px;width:13.4px;height:14.4px" viewBox="0 0 14 15"><path d="M1.3 0.6 L13.4 7.5 L1.3 14.4 Z" fill="#3fa45b" stroke="#fff" stroke-width="1.2" paint-order="stroke"/></svg>
<span class="t" style="top:1134.00px;font-size:18.667px;line-height:18.667px;color:#2b2b2b;letter-spacing:0.157px;left:560.00px;">170 (izar)</span>
<svg class="i" style="width:18.67px;height:18.67px;left:1837.67px;top:1132.82px;" viewBox="0 -1536 1792 1792"><path fill="#2f5cb0" transform="scale(1,-1)" d="M1408 608v-320q0 -119 -84.5 -203.5t-203.5 -84.5h-832q-119 0 -203.5 84.5t-84.5 203.5v832q0 119 84.5 203.5t203.5 84.5h704q14 0 23 -9t9 -23v-64q0 -14 -9 -23t-23 -9h-704q-66 0 -113 -47t-47 -113v-832q0 -66 47 -113t113 -47h832q66 0 113 47t47 113v320 q0 14 9 23t23 9h64q14 0 23 -9t9 -23zM1792 1472v-512q0 -26 -19 -45t-45 -19t-45 19l-176 176l-652 -652q-10 -10 -23 -10t-23 10l-114 114q-10 10 -10 23t10 23l652 652l-176 176q-19 19 -19 45t19 45t45 19h512q26 0 45 -19t19 -45z"/></svg>
<svg class="i" style="width:16.00px;height:18.67px;left:1717.00px;top:1132.82px;" viewBox="0 -1536 1536 1792"><path fill="#b3181d" transform="scale(1,-1)" d="M1536 640q0 -156 -61 -298t-164 -245t-245 -164t-298 -61t-298 61t-245 164t-164 245t-61 298q0 182 80.5 343t226.5 270q43 32 95.5 25t83.5 -50q32 -42 24.5 -94.5t-49.5 -84.5q-98 -74 -151.5 -181t-53.5 -228q0 -104 40.5 -198.5t109.5 -163.5t163.5 -109.5 t198.5 -40.5t198.5 40.5t163.5 109.5t109.5 163.5t40.5 198.5q0 121 -53.5 228t-151.5 181q-42 32 -49.5 84.5t24.5 94.5q31 43 84 50t95 -25q146 -109 226.5 -270t80.5 -343zM896 1408v-640q0 -52 -38 -90t-90 -38t-90 38t-38 90v640q0 52 38 90t90 38t90 -38t38 -90z"/></svg>
<svg class="i" style="width:14.67px;height:18.67px;left:1758.17px;top:1132.82px;" viewBox="0 -1536 1408 1792"><path fill="#8a8a8a" transform="scale(1,-1)" d="M1384 609l-1328 -738q-23 -13 -39.5 -3t-16.5 36v1472q0 26 16.5 36t39.5 -3l1328 -738q23 -13 23 -31t-23 -31z"/></svg>
<svg class="i" style="width:18.67px;height:18.67px;left:1797.37px;top:1132.82px;" viewBox="0 -1536 1792 1792"><path fill="#2f5cb0" transform="scale(1,-1)" d="M1764 1525q33 -24 27 -64l-256 -1536q-5 -29 -32 -45q-14 -8 -31 -8q-11 0 -24 5l-527 215l-298 -327q-18 -21 -47 -21q-14 0 -23 4q-19 7 -30 23.5t-11 36.5v452l-472 193q-37 14 -40 55q-3 39 32 59l1664 960q35 21 68 -2zM1422 26l221 1323l-1434 -827l336 -137 l863 639l-478 -797z"/></svg>
<svg class="i" style="width:15.20px;height:17.73px;left:525.40px;top:1186.29px;" viewBox="0 -1536 1536 1792"><path fill="#161616" transform="scale(1,-1)" d="M768 768q237 0 443 43t325 127v-170q0 -69 -103 -128t-280 -93.5t-385 -34.5t-385 34.5t-280 93.5t-103 128v170q119 -84 325 -127t443 -43zM768 0q237 0 443 43t325 127v-170q0 -69 -103 -128t-280 -93.5t-385 -34.5t-385 34.5t-280 93.5t-103 128v170q119 -84 325 -127 t443 -43zM768 384q237 0 443 43t325 127v-170q0 -69 -103 -128t-280 -93.5t-385 -34.5t-385 34.5t-280 93.5t-103 128v170q119 -84 325 -127t443 -43zM768 1536q208 0 385 -34.5t280 -93.5t103 -128v-128q0 -69 -103 -128t-280 -93.5t-385 -34.5t-385 34.5t-280 93.5 t-103 128v128q0 69 103 128t280 93.5t385 34.5z"/></svg>
<svg class="i" style="left:540.30px;top:1195.29px;width:13.2px;height:13.2px" viewBox="0 0 13.2 13.2"><circle cx="6.6" cy="6.6" r="6.4" fill="#3fa45b" stroke="#fff" stroke-width="0.6"/><path d="M3.4 6.8 L5.7 9 L9.8 4.9" fill="none" stroke="#fff" stroke-width="1.9"/></svg>
<span class="t" style="top:1188.00px;font-size:18.667px;line-height:18.667px;color:#2b2b2b;letter-spacing:0.252px;left:560.00px;">local</span>
<svg class="i" style="width:18.67px;height:18.67px;left:1837.67px;top:1186.99px;" viewBox="0 -1536 1792 1792"><path fill="#2f5cb0" transform="scale(1,-1)" d="M1408 608v-320q0 -119 -84.5 -203.5t-203.5 -84.5h-832q-119 0 -203.5 84.5t-84.5 203.5v832q0 119 84.5 203.5t203.5 84.5h704q14 0 23 -9t9 -23v-64q0 -14 -9 -23t-23 -9h-704q-66 0 -113 -47t-47 -113v-832q0 -66 47 -113t113 -47h832q66 0 113 47t47 113v320 q0 14 9 23t23 9h64q14 0 23 -9t9 -23zM1792 1472v-512q0 -26 -19 -45t-45 -19t-45 19l-176 176l-652 -652q-10 -10 -23 -10t-23 10l-114 114q-10 10 -10 23t10 23l652 652l-176 176q-19 19 -19 45t19 45t45 19h512q26 0 45 -19t19 -45z"/></svg>
<svg class="i" style="width:15.20px;height:17.73px;left:525.40px;top:1240.46px;" viewBox="0 -1536 1536 1792"><path fill="#161616" transform="scale(1,-1)" d="M768 768q237 0 443 43t325 127v-170q0 -69 -103 -128t-280 -93.5t-385 -34.5t-385 34.5t-280 93.5t-103 128v170q119 -84 325 -127t443 -43zM768 0q237 0 443 43t325 127v-170q0 -69 -103 -128t-280 -93.5t-385 -34.5t-385 34.5t-280 93.5t-103 128v170q119 -84 325 -127 t443 -43zM768 384q237 0 443 43t325 127v-170q0 -69 -103 -128t-280 -93.5t-385 -34.5t-385 34.5t-280 93.5t-103 128v170q119 -84 325 -127t443 -43zM768 1536q208 0 385 -34.5t280 -93.5t103 -128v-128q0 -69 -103 -128t-280 -93.5t-385 -34.5t-385 34.5t-280 93.5 t-103 128v128q0 69 103 128t280 93.5t385 34.5z"/></svg>
<svg class="i" style="left:540.30px;top:1249.46px;width:13.2px;height:13.2px" viewBox="0 0 13.2 13.2"><circle cx="6.6" cy="6.6" r="6.4" fill="#3fa45b" stroke="#fff" stroke-width="0.6"/><path d="M3.4 6.8 L5.7 9 L9.8 4.9" fill="none" stroke="#fff" stroke-width="1.9"/></svg>
<span class="t" style="top:1242.00px;font-size:18.667px;line-height:18.667px;color:#2b2b2b;letter-spacing:-0.004px;left:560.00px;">merak</span>
<svg class="i" style="width:18.67px;height:18.67px;left:1837.67px;top:1241.16px;" viewBox="0 -1536 1792 1792"><path fill="#2f5cb0" transform="scale(1,-1)" d="M1408 608v-320q0 -119 -84.5 -203.5t-203.5 -84.5h-832q-119 0 -203.5 84.5t-84.5 203.5v832q0 119 84.5 203.5t203.5 84.5h704q14 0 23 -9t9 -23v-64q0 -14 -9 -23t-23 -9h-704q-66 0 -113 -47t-47 -113v-832q0 -66 47 -113t113 -47h832q66 0 113 47t47 113v320 q0 14 9 23t23 9h64q14 0 23 -9t9 -23zM1792 1472v-512q0 -26 -19 -45t-45 -19t-45 19l-176 176l-652 -652q-10 -10 -23 -10t-23 10l-114 114q-10 10 -10 23t10 23l652 652l-176 176q-19 19 -19 45t19 45t45 19h512q26 0 45 -19t19 -45z"/></svg>
<svg class="i" style="width:15.20px;height:17.73px;left:525.40px;top:1294.63px;" viewBox="0 -1536 1536 1792"><path fill="#161616" transform="scale(1,-1)" d="M768 768q237 0 443 43t325 127v-170q0 -69 -103 -128t-280 -93.5t-385 -34.5t-385 34.5t-280 93.5t-103 128v170q119 -84 325 -127t443 -43zM768 0q237 0 443 43t325 127v-170q0 -69 -103 -128t-280 -93.5t-385 -34.5t-385 34.5t-280 93.5t-103 128v170q119 -84 325 -127 t443 -43zM768 384q237 0 443 43t325 127v-170q0 -69 -103 -128t-280 -93.5t-385 -34.5t-385 34.5t-280 93.5t-103 128v170q119 -84 325 -127t443 -43zM768 1536q208 0 385 -34.5t280 -93.5t103 -128v-128q0 -69 -103 -128t-280 -93.5t-385 -34.5t-385 34.5t-280 93.5 t-103 128v128q0 69 103 128t280 93.5t385 34.5z"/></svg>
<svg class="i" style="left:540.30px;top:1303.63px;width:13.2px;height:13.2px" viewBox="0 0 13.2 13.2"><circle cx="6.6" cy="6.6" r="6.4" fill="#3fa45b" stroke="#fff" stroke-width="0.6"/><path d="M3.4 6.8 L5.7 9 L9.8 4.9" fill="none" stroke="#fff" stroke-width="1.9"/></svg>
<span class="t" style="top:1296.00px;font-size:18.667px;line-height:18.667px;color:#2b2b2b;letter-spacing:0.100px;left:560.00px;">kochab</span>
<svg class="i" style="width:18.67px;height:18.67px;left:1837.67px;top:1295.33px;" viewBox="0 -1536 1792 1792"><path fill="#2f5cb0" transform="scale(1,-1)" d="M1408 608v-320q0 -119 -84.5 -203.5t-203.5 -84.5h-832q-119 0 -203.5 84.5t-84.5 203.5v832q0 119 84.5 203.5t203.5 84.5h704q14 0 23 -9t9 -23v-64q0 -14 -9 -23t-23 -9h-704q-66 0 -113 -47t-47 -113v-832q0 -66 47 -113t113 -47h832q66 0 113 47t47 113v320 q0 14 9 23t23 9h64q14 0 23 -9t9 -23zM1792 1472v-512q0 -26 -19 -45t-45 -19t-45 19l-176 176l-652 -652q-10 -10 -23 -10t-23 10l-114 114q-10 10 -10 23t10 23l652 652l-176 176q-19 19 -19 45t19 45t45 19h512q26 0 45 -19t19 -45z"/></svg>
<svg class="i" style="width:10.67px;height:18.67px;left:477.10px;top:1349.50px;" viewBox="0 -1536 1024 1792"><path fill="#111" transform="scale(1,-1)" d="M1024 832q0 -26 -19 -45l-448 -448q-19 -19 -45 -19t-45 19l-448 448q-19 19 -19 45t19 45t45 19h896q26 0 45 -19t19 -45z"/></svg>
<svg class="i" style="width:16.00px;height:18.67px;left:498.40px;top:1349.90px;" viewBox="0 -1536 1536 1792"><path fill="#2b2b2b" transform="scale(1,-1)" d="M1344 1536q26 0 45 -19t19 -45v-1664q0 -26 -19 -45t-45 -19h-1280q-26 0 -45 19t-19 45v1664q0 26 19 45t45 19h1280zM512 1248v-64q0 -14 9 -23t23 -9h64q14 0 23 9t9 23v64q0 14 -9 23t-23 9h-64q-14 0 -23 -9t-9 -23zM512 992v-64q0 -14 9 -23t23 -9h64q14 0 23 9 t9 23v64q0 14 -9 23t-23 9h-64q-14 0 -23 -9t-9 -23zM512 736v-64q0 -14 9 -23t23 -9h64q14 0 23 9t9 23v64q0 14 -9 23t-23 9h-64q-14 0 -23 -9t-9 -23zM512 480v-64q0 -14 9 -23t23 -9h64q14 0 23 9t9 23v64q0 14 -9 23t-23 9h-64q-14 0 -23 -9t-9 -23zM384 160v64 q0 14 -9 23t-23 9h-64q-14 0 -23 -9t-9 -23v-64q0 -14 9 -23t23 -9h64q14 0 23 9t9 23zM384 416v64q0 14 -9 23t-23 9h-64q-14 0 -23 -9t-9 -23v-64q0 -14 9 -23t23 -9h64q14 0 23 9t9 23zM384 672v64q0 14 -9 23t-23 9h-64q-14 0 -23 -9t-9 -23v-64q0 -14 9 -23t23 -9h64 q14 0 23 9t9 23zM384 928v64q0 14 -9 23t-23 9h-64q-14 0 -23 -9t-9 -23v-64q0 -14 9 -23t23 -9h64q14 0 23 9t9 23zM384 1184v64q0 14 -9 23t-23 9h-64q-14 0 -23 -9t-9 -23v-64q0 -14 9 -23t23 -9h64q14 0 23 9t9 23zM896 -96v192q0 14 -9 23t-23 9h-320q-14 0 -23 -9 t-9 -23v-192q0 -14 9 -23t23 -9h320q14 0 23 9t9 23zM896 416v64q0 14 -9 23t-23 9h-64q-14 0 -23 -9t-9 -23v-64q0 -14 9 -23t23 -9h64q14 0 23 9t9 23zM896 672v64q0 14 -9 23t-23 9h-64q-14 0 -23 -9t-9 -23v-64q0 -14 9 -23t23 -9h64q14 0 23 9t9 23zM896 928v64 q0 14 -9 23t-23 9h-64q-14 0 -23 -9t-9 -23v-64q0 -14 9 -23t23 -9h64q14 0 23 9t9 23zM896 1184v64q0 14 -9 23t-23 9h-64q-14 0 -23 -9t-9 -23v-64q0 -14 9 -23t23 -9h64q14 0 23 9t9 23zM1152 160v64q0 14 -9 23t-23 9h-64q-14 0 -23 -9t-9 -23v-64q0 -14 9 -23t23 -9h64 q14 0 23 9t9 23zM1152 416v64q0 14 -9 23t-23 9h-64q-14 0 -23 -9t-9 -23v-64q0 -14 9 -23t23 -9h64q14 0 23 9t9 23zM1152 672v64q0 14 -9 23t-23 9h-64q-14 0 -23 -9t-9 -23v-64q0 -14 9 -23t23 -9h64q14 0 23 9t9 23zM1152 928v64q0 14 -9 23t-23 9h-64q-14 0 -23 -9 t-9 -23v-64q0 -14 9 -23t23 -9h64q14 0 23 9t9 23zM1152 1184v64q0 14 -9 23t-23 9h-64q-14 0 -23 -9t-9 -23v-64q0 -14 9 -23t23 -9h64q14 0 23 9t9 23z"/></svg>
<svg class="i" style="left:513.40px;top:1358.10px;width:13.2px;height:13.2px" viewBox="0 0 13.2 13.2"><circle cx="6.6" cy="6.6" r="6.4" fill="#3fa45b" stroke="#fff" stroke-width="0.6"/><path d="M3.4 6.8 L5.7 9 L9.8 4.9" fill="none" stroke="#fff" stroke-width="1.9"/></svg>
<span class="t" style="top:1350.00px;font-size:18.667px;line-height:18.667px;color:#2b2b2b;letter-spacing:0.100px;left:532.50px;">alkaid</span>
<svg class="i" style="width:18.67px;height:18.67px;left:1837.67px;top:1349.50px;" viewBox="0 -1536 1792 1792"><path fill="#2f5cb0" transform="scale(1,-1)" d="M1408 608v-320q0 -119 -84.5 -203.5t-203.5 -84.5h-832q-119 0 -203.5 84.5t-84.5 203.5v832q0 119 84.5 203.5t203.5 84.5h704q14 0 23 -9t9 -23v-64q0 -14 -9 -23t-23 -9h-704q-66 0 -113 -47t-47 -113v-832q0 -66 47 -113t113 -47h832q66 0 113 47t47 113v320 q0 14 9 23t23 9h64q14 0 23 -9t9 -23zM1792 1472v-512q0 -26 -19 -45t-45 -19t-45 19l-176 176l-652 -652q-10 -10 -23 -10t-23 10l-114 114q-10 10 -10 23t10 23l652 652l-176 176q-19 19 -19 45t19 45t45 19h512q26 0 45 -19t19 -45z"/></svg>
<svg class="i" style="width:18.67px;height:18.67px;left:523.90px;top:1403.47px;" viewBox="0 -1536 1792 1792"><path fill="#d0d0d0" transform="scale(1,-1)" d="M896 -93l640 349v636l-640 -233v-752zM832 772l698 254l-698 254l-698 -254zM1664 1024v-768q0 -35 -18 -65t-49 -47l-704 -384q-28 -16 -61 -16t-61 16l-704 384q-31 17 -49 47t-18 65v768q0 40 23 73t61 47l704 256q22 8 44 8t44 -8l704 -256q38 -14 61 -47t23 -73z"/></svg>
<span class="t" style="top:1405.00px;font-size:18.667px;line-height:18.667px;color:#2b2b2b;letter-spacing:0.085px;left:560.00px;">171 (dubhe)</span>
<svg class="i" style="width:18.67px;height:18.67px;left:1837.67px;top:1403.67px;" viewBox="0 -1536 1792 1792"><path fill="#2f5cb0" transform="scale(1,-1)" d="M1408 608v-320q0 -119 -84.5 -203.5t-203.5 -84.5h-832q-119 0 -203.5 84.5t-84.5 203.5v832q0 119 84.5 203.5t203.5 84.5h704q14 0 23 -9t9 -23v-64q0 -14 -9 -23t-23 -9h-704q-66 0 -113 -47t-47 -113v-832q0 -66 47 -113t113 -47h832q66 0 113 47t47 113v320 q0 14 9 23t23 9h64q14 0 23 -9t9 -23zM1792 1472v-512q0 -26 -19 -45t-45 -19t-45 19l-176 176l-652 -652q-10 -10 -23 -10t-23 10l-114 114q-10 10 -10 23t10 23l652 652l-176 176q-19 19 -19 45t19 45t45 19h512q26 0 45 -19t19 -45z"/></svg>
<svg class="i" style="width:16.00px;height:18.67px;left:1717.00px;top:1403.67px;" viewBox="0 -1536 1536 1792"><path fill="#8a8a8a" transform="scale(1,-1)" d="M1536 640q0 -156 -61 -298t-164 -245t-245 -164t-298 -61t-298 61t-245 164t-164 245t-61 298q0 182 80.5 343t226.5 270q43 32 95.5 25t83.5 -50q32 -42 24.5 -94.5t-49.5 -84.5q-98 -74 -151.5 -181t-53.5 -228q0 -104 40.5 -198.5t109.5 -163.5t163.5 -109.5 t198.5 -40.5t198.5 40.5t163.5 109.5t109.5 163.5t40.5 198.5q0 121 -53.5 228t-151.5 181q-42 32 -49.5 84.5t24.5 94.5q31 43 84 50t95 -25q146 -109 226.5 -270t80.5 -343zM896 1408v-640q0 -52 -38 -90t-90 -38t-90 38t-38 90v640q0 52 38 90t90 38t90 -38t38 -90z"/></svg>
<svg class="i" style="width:14.67px;height:18.67px;left:1758.17px;top:1403.67px;" viewBox="0 -1536 1408 1792"><path fill="#3fa45b" transform="scale(1,-1)" d="M1384 609l-1328 -738q-23 -13 -39.5 -3t-16.5 36v1472q0 26 16.5 36t39.5 -3l1328 -738q23 -13 23 -31t-23 -31z"/></svg>
<svg class="i" style="width:18.67px;height:18.67px;left:1797.37px;top:1403.67px;" viewBox="0 -1536 1792 1792"><path fill="#2f5cb0" transform="scale(1,-1)" d="M1764 1525q33 -24 27 -64l-256 -1536q-5 -29 -32 -45q-14 -8 -31 -8q-11 0 -24 5l-527 215l-298 -327q-18 -21 -47 -21q-14 0 -23 4q-19 7 -30 23.5t-11 36.5v452l-472 193q-37 14 -40 55q-3 39 32 59l1664 960q35 21 68 -2zM1422 26l221 1323l-1434 -827l336 -137 l863 639l-478 -797z"/></svg>
<svg class="i" style="width:18.67px;height:18.67px;left:523.90px;top:1457.64px;" viewBox="0 -1536 1792 1792"><path fill="#111" transform="scale(1,-1)" d="M896 -93l640 349v636l-640 -233v-752zM832 772l698 254l-698 254l-698 -254zM1664 1024v-768q0 -35 -18 -65t-49 -47l-704 -384q-28 -16 -61 -16t-61 16l-704 384q-31 17 -49 47t-18 65v768q0 40 23 73t61 47l704 256q22 8 44 8t44 -8l704 -256q38 -14 61 -47t23 -73z"/></svg>
<svg class="i" style="left:536.6px;top:1463.64px;width:13.4px;height:14.4px" viewBox="0 0 14 15"><path d="M1.3 0.6 L13.4 7.5 L1.3 14.4 Z" fill="#3fa45b" stroke="#fff" stroke-width="1.2" paint-order="stroke"/></svg>
<span class="t" style="top:1459.00px;font-size:18.667px;line-height:18.667px;color:#2b2b2b;letter-spacing:0.208px;left:560.00px;">245 (algol)</span>
<svg class="i" style="width:18.67px;height:18.67px;left:1837.67px;top:1457.84px;" viewBox="0 -1536 1792 1792"><path fill="#2f5cb0" transform="scale(1,-1)" d="M1408 608v-320q0 -119 -84.5 -203.5t-203.5 -84.5h-832q-119 0 -203.5 84.5t-84.5 203.5v832q0 119 84.5 203.5t203.5 84.5h704q14 0 23 -9t9 -23v-64q0 -14 -9 -23t-23 -9h-704q-66 0 -113 -47t-47 -113v-832q0 -66 47 -113t113 -47h832q66 0 113 47t47 113v320 q0 14 9 23t23 9h64q14 0 23 -9t9 -23zM1792 1472v-512q0 -26 -19 -45t-45 -19t-45 19l-176 176l-652 -652q-10 -10 -23 -10t-23 10l-114 114q-10 10 -10 23t10 23l652 652l-176 176q-19 19 -19 45t19 45t45 19h512q26 0 45 -19t19 -45z"/></svg>
<svg class="i" style="width:16.00px;height:18.67px;left:1717.00px;top:1457.84px;" viewBox="0 -1536 1536 1792"><path fill="#b3181d" transform="scale(1,-1)" d="M1536 640q0 -156 -61 -298t-164 -245t-245 -164t-298 -61t-298 61t-245 164t-164 245t-61 298q0 182 80.5 343t226.5 270q43 32 95.5 25t83.5 -50q32 -42 24.5 -94.5t-49.5 -84.5q-98 -74 -151.5 -181t-53.5 -228q0 -104 40.5 -198.5t109.5 -163.5t163.5 -109.5 t198.5 -40.5t198.5 40.5t163.5 109.5t109.5 163.5t40.5 198.5q0 121 -53.5 228t-151.5 181q-42 32 -49.5 84.5t24.5 94.5q31 43 84 50t95 -25q146 -109 226.5 -270t80.5 -343zM896 1408v-640q0 -52 -38 -90t-90 -38t-90 38t-38 90v640q0 52 38 90t90 38t90 -38t38 -90z"/></svg>
<svg class="i" style="width:14.67px;height:18.67px;left:1758.17px;top:1457.84px;" viewBox="0 -1536 1408 1792"><path fill="#8a8a8a" transform="scale(1,-1)" d="M1384 609l-1328 -738q-23 -13 -39.5 -3t-16.5 36v1472q0 26 16.5 36t39.5 -3l1328 -738q23 -13 23 -31t-23 -31z"/></svg>
<svg class="i" style="width:18.67px;height:18.67px;left:1797.37px;top:1457.84px;" viewBox="0 -1536 1792 1792"><path fill="#2f5cb0" transform="scale(1,-1)" d="M1764 1525q33 -24 27 -64l-256 -1536q-5 -29 -32 -45q-14 -8 -31 -8q-11 0 -24 5l-527 215l-298 -327q-18 -21 -47 -21q-14 0 -23 4q-19 7 -30 23.5t-11 36.5v452l-472 193q-37 14 -40 55q-3 39 32 59l1664 960q35 21 68 -2zM1422 26l221 1323l-1434 -827l336 -137 l863 639l-478 -797z"/></svg>
<svg class="i" style="width:18.67px;height:18.67px;left:523.90px;top:1511.81px;" viewBox="0 -1536 1792 1792"><path fill="#111" transform="scale(1,-1)" d="M896 -93l640 349v636l-640 -233v-752zM832 772l698 254l-698 254l-698 -254zM1664 1024v-768q0 -35 -18 -65t-49 -47l-704 -384q-28 -16 -61 -16t-61 16l-704 384q-31 17 -49 47t-18 65v768q0 40 23 73t61 47l704 256q22 8 44 8t44 -8l704 -256q38 -14 61 -47t23 -73z"/></svg>
<svg class="i" style="left:536.6px;top:1517.81px;width:13.4px;height:14.4px" viewBox="0 0 14 15"><path d="M1.3 0.6 L13.4 7.5 L1.3 14.4 Z" fill="#3fa45b" stroke="#fff" stroke-width="1.2" paint-order="stroke"/></svg>
<span class="t" style="top:1513.00px;font-size:18.667px;line-height:18.667px;color:#2b2b2b;letter-spacing:0.215px;left:560.00px;">247 (spica)</span>
<svg class="i" style="width:18.67px;height:18.67px;left:1837.67px;top:1512.01px;" viewBox="0 -1536 1792 1792"><path fill="#2f5cb0" transform="scale(1,-1)" d="M1408 608v-320q0 -119 -84.5 -203.5t-203.5 -84.5h-832q-119 0 -203.5 84.5t-84.5 203.5v832q0 119 84.5 203.5t203.5 84.5h704q14 0 23 -9t9 -23v-64q0 -14 -9 -23t-23 -9h-704q-66 0 -113 -47t-47 -113v-832q0 -66 47 -113t113 -47h832q66 0 113 47t47 113v320 q0 14 9 23t23 9h64q14 0 23 -9t9 -23zM1792 1472v-512q0 -26 -19 -45t-45 -19t-45 19l-176 176l-652 -652q-10 -10 -23 -10t-23 10l-114 114q-10 10 -10 23t10 23l652 652l-176 176q-19 19 -19 45t19 45t45 19h512q26 0 45 -19t19 -45z"/></svg>
<svg class="i" style="width:16.00px;height:18.67px;left:1717.00px;top:1512.01px;" viewBox="0 -1536 1536 1792"><path fill="#b3181d" transform="scale(1,-1)" d="M1536 640q0 -156 -61 -298t-164 -245t-245 -164t-298 -61t-298 61t-245 164t-164 245t-61 298q0 182 80.5 343t226.5 270q43 32 95.5 25t83.5 -50q32 -42 24.5 -94.5t-49.5 -84.5q-98 -74 -151.5 -181t-53.5 -228q0 -104 40.5 -198.5t109.5 -163.5t163.5 -109.5 t198.5 -40.5t198.5 40.5t163.5 109.5t109.5 163.5t40.5 198.5q0 121 -53.5 228t-151.5 181q-42 32 -49.5 84.5t24.5 94.5q31 43 84 50t95 -25q146 -109 226.5 -270t80.5 -343zM896 1408v-640q0 -52 -38 -90t-90 -38t-90 38t-38 90v640q0 52 38 90t90 38t90 -38t38 -90z"/></svg>
<svg class="i" style="width:14.67px;height:18.67px;left:1758.17px;top:1512.01px;" viewBox="0 -1536 1408 1792"><path fill="#8a8a8a" transform="scale(1,-1)" d="M1384 609l-1328 -738q-23 -13 -39.5 -3t-16.5 36v1472q0 26 16.5 36t39.5 -3l1328 -738q23 -13 23 -31t-23 -31z"/></svg>
<svg class="i" style="width:18.67px;height:18.67px;left:1797.37px;top:1512.01px;" viewBox="0 -1536 1792 1792"><path fill="#2f5cb0" transform="scale(1,-1)" d="M1764 1525q33 -24 27 -64l-256 -1536q-5 -29 -32 -45q-14 -8 -31 -8q-11 0 -24 5l-527 215l-298 -327q-18 -21 -47 -21q-14 0 -23 4q-19 7 -30 23.5t-11 36.5v452l-472 193q-37 14 -40 55q-3 39 32 59l1664 960q35 21 68 -2zM1422 26l221 1323l-1434 -827l336 -137 l863 639l-478 -797z"/></svg>
<svg class="i" style="width:18.67px;height:18.67px;left:523.90px;top:1565.98px;" viewBox="0 -1536 1792 1792"><path fill="#d0d0d0" transform="scale(1,-1)" d="M896 -93l640 349v636l-640 -233v-752zM832 772l698 254l-698 254l-698 -254zM1664 1024v-768q0 -35 -18 -65t-49 -47l-704 -384q-28 -16 -61 -16t-61 16l-704 384q-31 17 -49 47t-18 65v768q0 40 23 73t61 47l704 256q22 8 44 8t44 -8l704 -256q38 -14 61 -47t23 -73z"/></svg>
<span class="t" style="top:1567.00px;font-size:18.667px;line-height:18.667px;color:#2b2b2b;letter-spacing:0.109px;left:560.00px;">248 (rasalas)</span>
<svg class="i" style="width:18.67px;height:18.67px;left:1837.67px;top:1566.18px;" viewBox="0 -1536 1792 1792"><path fill="#2f5cb0" transform="scale(1,-1)" d="M1408 608v-320q0 -119 -84.5 -203.5t-203.5 -84.5h-832q-119 0 -203.5 84.5t-84.5 203.5v832q0 119 84.5 203.5t203.5 84.5h704q14 0 23 -9t9 -23v-64q0 -14 -9 -23t-23 -9h-704q-66 0 -113 -47t-47 -113v-832q0 -66 47 -113t113 -47h832q66 0 113 47t47 113v320 q0 14 9 23t23 9h64q14 0 23 -9t9 -23zM1792 1472v-512q0 -26 -19 -45t-45 -19t-45 19l-176 176l-652 -652q-10 -10 -23 -10t-23 10l-114 114q-10 10 -10 23t10 23l652 652l-176 176q-19 19 -19 45t19 45t45 19h512q26 0 45 -19t19 -45z"/></svg>
<svg class="i" style="width:16.00px;height:18.67px;left:1717.00px;top:1566.18px;" viewBox="0 -1536 1536 1792"><path fill="#8a8a8a" transform="scale(1,-1)" d="M1536 640q0 -156 -61 -298t-164 -245t-245 -164t-298 -61t-298 61t-245 164t-164 245t-61 298q0 182 80.5 343t226.5 270q43 32 95.5 25t83.5 -50q32 -42 24.5 -94.5t-49.5 -84.5q-98 -74 -151.5 -181t-53.5 -228q0 -104 40.5 -198.5t109.5 -163.5t163.5 -109.5 t198.5 -40.5t198.5 40.5t163.5 109.5t109.5 163.5t40.5 198.5q0 121 -53.5 228t-151.5 181q-42 32 -49.5 84.5t24.5 94.5q31 43 84 50t95 -25q146 -109 226.5 -270t80.5 -343zM896 1408v-640q0 -52 -38 -90t-90 -38t-90 38t-38 90v640q0 52 38 90t90 38t90 -38t38 -90z"/></svg>
<svg class="i" style="width:14.67px;height:18.67px;left:1758.17px;top:1566.18px;" viewBox="0 -1536 1408 1792"><path fill="#3fa45b" transform="scale(1,-1)" d="M1384 609l-1328 -738q-23 -13 -39.5 -3t-16.5 36v1472q0 26 16.5 36t39.5 -3l1328 -738q23 -13 23 -31t-23 -31z"/></svg>
<svg class="i" style="width:18.67px;height:18.67px;left:1797.37px;top:1566.18px;" viewBox="0 -1536 1792 1792"><path fill="#2f5cb0" transform="scale(1,-1)" d="M1764 1525q33 -24 27 -64l-256 -1536q-5 -29 -32 -45q-14 -8 -31 -8q-11 0 -24 5l-527 215l-298 -327q-18 -21 -47 -21q-14 0 -23 4q-19 7 -30 23.5t-11 36.5v452l-472 193q-37 14 -40 55q-3 39 32 59l1664 960q35 21 68 -2zM1422 26l221 1323l-1434 -827l336 -137 l863 639l-478 -797z"/></svg>
<svg class="i" style="width:18.67px;height:18.67px;left:523.90px;top:1620.15px;" viewBox="0 -1536 1792 1792"><path fill="#111" transform="scale(1,-1)" d="M896 -93l640 349v636l-640 -233v-752zM832 772l698 254l-698 254l-698 -254zM1664 1024v-768q0 -35 -18 -65t-49 -47l-704 -384q-28 -16 -61 -16t-61 16l-704 384q-31 17 -49 47t-18 65v768q0 40 23 73t61 47l704 256q22 8 44 8t44 -8l704 -256q38 -14 61 -47t23 -73z"/></svg>
<svg class="i" style="left:536.6px;top:1626.15px;width:13.4px;height:14.4px" viewBox="0 0 14 15"><path d="M1.3 0.6 L13.4 7.5 L1.3 14.4 Z" fill="#3fa45b" stroke="#fff" stroke-width="1.2" paint-order="stroke"/></svg>
<span class="t" style="top:1621.00px;font-size:18.667px;line-height:18.667px;color:#2b2b2b;letter-spacing:0.170px;left:560.00px;">249 (sadr)</span>
<svg class="i" style="width:18.67px;height:18.67px;left:1837.67px;top:1620.35px;" viewBox="0 -1536 1792 1792"><path fill="#2f5cb0" transform="scale(1,-1)" d="M1408 608v-320q0 -119 -84.5 -203.5t-203.5 -84.5h-832q-119 0 -203.5 84.5t-84.5 203.5v832q0 119 84.5 203.5t203.5 84.5h704q14 0 23 -9t9 -23v-64q0 -14 -9 -23t-23 -9h-704q-66 0 -113 -47t-47 -113v-832q0 -66 47 -113t113 -47h832q66 0 113 47t47 113v320 q0 14 9 23t23 9h64q14 0 23 -9t9 -23zM1792 1472v-512q0 -26 -19 -45t-45 -19t-45 19l-176 176l-652 -652q-10 -10 -23 -10t-23 10l-114 114q-10 10 -10 23t10 23l652 652l-176 176q-19 19 -19 45t19 45t45 19h512q26 0 45 -19t19 -45z"/></svg>
<svg class="i" style="width:16.00px;height:18.67px;left:1717.00px;top:1620.35px;" viewBox="0 -1536 1536 1792"><path fill="#b3181d" transform="scale(1,-1)" d="M1536 640q0 -156 -61 -298t-164 -245t-245 -164t-298 -61t-298 61t-245 164t-164 245t-61 298q0 182 80.5 343t226.5 270q43 32 95.5 25t83.5 -50q32 -42 24.5 -94.5t-49.5 -84.5q-98 -74 -151.5 -181t-53.5 -228q0 -104 40.5 -198.5t109.5 -163.5t163.5 -109.5 t198.5 -40.5t198.5 40.5t163.5 109.5t109.5 163.5t40.5 198.5q0 121 -53.5 228t-151.5 181q-42 32 -49.5 84.5t24.5 94.5q31 43 84 50t95 -25q146 -109 226.5 -270t80.5 -343zM896 1408v-640q0 -52 -38 -90t-90 -38t-90 38t-38 90v640q0 52 38 90t90 38t90 -38t38 -90z"/></svg>
<svg class="i" style="width:14.67px;height:18.67px;left:1758.17px;top:1620.35px;" viewBox="0 -1536 1408 1792"><path fill="#8a8a8a" transform="scale(1,-1)" d="M1384 609l-1328 -738q-23 -13 -39.5 -3t-16.5 36v1472q0 26 16.5 36t39.5 -3l1328 -738q23 -13 23 -31t-23 -31z"/></svg>
<svg class="i" style="width:18.67px;height:18.67px;left:1797.37px;top:1620.35px;" viewBox="0 -1536 1792 1792"><path fill="#2f5cb0" transform="scale(1,-1)" d="M1764 1525q33 -24 27 -64l-256 -1536q-5 -29 -32 -45q-14 -8 -31 -8q-11 0 -24 5l-527 215l-298 -327q-18 -21 -47 -21q-14 0 -23 4q-19 7 -30 23.5t-11 36.5v452l-472 193q-37 14 -40 55q-3 39 32 59l1664 960q35 21 68 -2zM1422 26l221 1323l-1434 -827l336 -137 l863 639l-478 -797z"/></svg>
<svg class="i" style="width:18.67px;height:18.67px;left:523.90px;top:1674.32px;" viewBox="0 -1536 1792 1792"><path fill="#111" transform="scale(1,-1)" d="M896 -93l640 349v636l-640 -233v-752zM832 772l698 254l-698 254l-698 -254zM1664 1024v-768q0 -35 -18 -65t-49 -47l-704 -384q-28 -16 -61 -16t-61 16l-704 384q-31 17 -49 47t-18 65v768q0 40 23 73t61 47l704 256q22 8 44 8t44 -8l704 -256q38 -14 61 -47t23 -73z"/></svg>
<svg class="i" style="left:536.6px;top:1680.32px;width:13.4px;height:14.4px" viewBox="0 0 14 15"><path d="M1.3 0.6 L13.4 7.5 L1.3 14.4 Z" fill="#3fa45b" stroke="#fff" stroke-width="1.2" paint-order="stroke"/></svg>
<span class="t" style="top:1676.00px;font-size:18.667px;line-height:18.667px;color:#2b2b2b;letter-spacing:0.128px;left:560.00px;">250 (electra)</span>
<svg class="i" style="width:18.67px;height:18.67px;left:1837.67px;top:1674.52px;" viewBox="0 -1536 1792 1792"><path fill="#2f5cb0" transform="scale(1,-1)" d="M1408 608v-320q0 -119 -84.5 -203.5t-203.5 -84.5h-832q-119 0 -203.5 84.5t-84.5 203.5v832q0 119 84.5 203.5t203.5 84.5h704q14 0 23 -9t9 -23v-64q0 -14 -9 -23t-23 -9h-704q-66 0 -113 -47t-47 -113v-832q0 -66 47 -113t113 -47h832q66 0 113 47t47 113v320 q0 14 9 23t23 9h64q14 0 23 -9t9 -23zM1792 1472v-512q0 -26 -19 -45t-45 -19t-45 19l-176 176l-652 -652q-10 -10 -23 -10t-23 10l-114 114q-10 10 -10 23t10 23l652 652l-176 176q-19 19 -19 45t19 45t45 19h512q26 0 45 -19t19 -45z"/></svg>
<svg class="i" style="width:16.00px;height:18.67px;left:1717.00px;top:1674.52px;" viewBox="0 -1536 1536 1792"><path fill="#b3181d" transform="scale(1,-1)" d="M1536 640q0 -156 -61 -298t-164 -245t-245 -164t-298 -61t-298 61t-245 164t-164 245t-61 298q0 182 80.5 343t226.5 270q43 32 95.5 25t83.5 -50q32 -42 24.5 -94.5t-49.5 -84.5q-98 -74 -151.5 -181t-53.5 -228q0 -104 40.5 -198.5t109.5 -163.5t163.5 -109.5 t198.5 -40.5t198.5 40.5t163.5 109.5t109.5 163.5t40.5 198.5q0 121 -53.5 228t-151.5 181q-42 32 -49.5 84.5t24.5 94.5q31 43 84 50t95 -25q146 -109 226.5 -270t80.5 -343zM896 1408v-640q0 -52 -38 -90t-90 -38t-90 38t-38 90v640q0 52 38 90t90 38t90 -38t38 -90z"/></svg>
<svg class="i" style="width:14.67px;height:18.67px;left:1758.17px;top:1674.52px;" viewBox="0 -1536 1408 1792"><path fill="#8a8a8a" transform="scale(1,-1)" d="M1384 609l-1328 -738q-23 -13 -39.5 -3t-16.5 36v1472q0 26 16.5 36t39.5 -3l1328 -738q23 -13 23 -31t-23 -31z"/></svg>
<svg class="i" style="width:18.67px;height:18.67px;left:1797.37px;top:1674.52px;" viewBox="0 -1536 1792 1792"><path fill="#2f5cb0" transform="scale(1,-1)" d="M1764 1525q33 -24 27 -64l-256 -1536q-5 -29 -32 -45q-14 -8 -31 -8q-11 0 -24 5l-527 215l-298 -327q-18 -21 -47 -21q-14 0 -23 4q-19 7 -30 23.5t-11 36.5v452l-472 193q-37 14 -40 55q-3 39 32 59l1664 960q35 21 68 -2zM1422 26l221 1323l-1434 -827l336 -137 l863 639l-478 -797z"/></svg>
<svg class="i" style="width:18.67px;height:18.67px;left:523.90px;top:1728.49px;" viewBox="0 -1536 1792 1792"><path fill="#111" transform="scale(1,-1)" d="M896 -93l640 349v636l-640 -233v-752zM832 772l698 254l-698 254l-698 -254zM1664 1024v-768q0 -35 -18 -65t-49 -47l-704 -384q-28 -16 -61 -16t-61 16l-704 384q-31 17 -49 47t-18 65v768q0 40 23 73t61 47l704 256q22 8 44 8t44 -8l704 -256q38 -14 61 -47t23 -73z"/></svg>
<svg class="i" style="left:536.6px;top:1734.49px;width:13.4px;height:14.4px" viewBox="0 0 14 15"><path d="M1.3 0.6 L13.4 7.5 L1.3 14.4 Z" fill="#3fa45b" stroke="#fff" stroke-width="1.2" paint-order="stroke"/></svg>
<span class="t" style="top:1730.00px;font-size:18.667px;line-height:18.667px;color:#2b2b2b;letter-spacing:0.034px;left:560.00px;">252 (aldebaran)</span>
<svg class="i" style="width:18.67px;height:18.67px;left:1837.67px;top:1728.69px;" viewBox="0 -1536 1792 1792"><path fill="#2f5cb0" transform="scale(1,-1)" d="M1408 608v-320q0 -119 -84.5 -203.5t-203.5 -84.5h-832q-119 0 -203.5 84.5t-84.5 203.5v832q0 119 84.5 203.5t203.5 84.5h704q14 0 23 -9t9 -23v-64q0 -14 -9 -23t-23 -9h-704q-66 0 -113 -47t-47 -113v-832q0 -66 47 -113t113 -47h832q66 0 113 47t47 113v320 q0 14 9 23t23 9h64q14 0 23 -9t9 -23zM1792 1472v-512q0 -26 -19 -45t-45 -19t-45 19l-176 176l-652 -652q-10 -10 -23 -10t-23 10l-114 114q-10 10 -10 23t10 23l652 652l-176 176q-19 19 -19 45t19 45t45 19h512q26 0 45 -19t19 -45z"/></svg>
<svg class="i" style="width:16.00px;height:18.67px;left:1717.00px;top:1728.69px;" viewBox="0 -1536 1536 1792"><path fill="#b3181d" transform="scale(1,-1)" d="M1536 640q0 -156 -61 -298t-164 -245t-245 -164t-298 -61t-298 61t-245 164t-164 245t-61 298q0 182 80.5 343t226.5 270q43 32 95.5 25t83.5 -50q32 -42 24.5 -94.5t-49.5 -84.5q-98 -74 -151.5 -181t-53.5 -228q0 -104 40.5 -198.5t109.5 -163.5t163.5 -109.5 t198.5 -40.5t198.5 40.5t163.5 109.5t109.5 163.5t40.5 198.5q0 121 -53.5 228t-151.5 181q-42 32 -49.5 84.5t24.5 94.5q31 43 84 50t95 -25q146 -109 226.5 -270t80.5 -343zM896 1408v-640q0 -52 -38 -90t-90 -38t-90 38t-38 90v640q0 52 38 90t90 38t90 -38t38 -90z"/></svg>
<svg class="i" style="width:14.67px;height:18.67px;left:1758.17px;top:1728.69px;" viewBox="0 -1536 1408 1792"><path fill="#8a8a8a" transform="scale(1,-1)" d="M1384 609l-1328 -738q-23 -13 -39.5 -3t-16.5 36v1472q0 26 16.5 36t39.5 -3l1328 -738q23 -13 23 -31t-23 -31z"/></svg>
<svg class="i" style="width:18.67px;height:18.67px;left:1797.37px;top:1728.69px;" viewBox="0 -1536 1792 1792"><path fill="#2f5cb0" transform="scale(1,-1)" d="M1764 1525q33 -24 27 -64l-256 -1536q-5 -29 -32 -45q-14 -8 -31 -8q-11 0 -24 5l-527 215l-298 -327q-18 -21 -47 -21q-14 0 -23 4q-19 7 -30 23.5t-11 36.5v452l-472 193q-37 14 -40 55q-3 39 32 59l1664 960q35 21 68 -2zM1422 26l221 1323l-1434 -827l336 -137 l863 639l-478 -797z"/></svg>
<svg class="i" style="width:18.67px;height:18.67px;left:523.90px;top:1782.66px;" viewBox="0 -1536 1792 1792"><path fill="#111" transform="scale(1,-1)" d="M896 -93l640 349v636l-640 -233v-752zM832 772l698 254l-698 254l-698 -254zM1664 1024v-768q0 -35 -18 -65t-49 -47l-704 -384q-28 -16 -61 -16t-61 16l-704 384q-31 17 -49 47t-18 65v768q0 40 23 73t61 47l704 256q22 8 44 8t44 -8l704 -256q38 -14 61 -47t23 -73z"/></svg>
<svg class="i" style="left:536.6px;top:1788.66px;width:13.4px;height:14.4px" viewBox="0 0 14 15"><path d="M1.3 0.6 L13.4 7.5 L1.3 14.4 Z" fill="#3fa45b" stroke="#fff" stroke-width="1.2" paint-order="stroke"/></svg>
<span class="t" style="top:1784.00px;font-size:18.667px;line-height:18.667px;color:#2b2b2b;letter-spacing:0.128px;left:560.00px;">253 (electra)</span>
<svg class="i" style="width:18.67px;height:18.67px;left:1837.67px;top:1782.86px;" viewBox="0 -1536 1792 1792"><path fill="#2f5cb0" transform="scale(1,-1)" d="M1408 608v-320q0 -119 -84.5 -203.5t-203.5 -84.5h-832q-119 0 -203.5 84.5t-84.5 203.5v832q0 119 84.5 203.5t203.5 84.5h704q14 0 23 -9t9 -23v-64q0 -14 -9 -23t-23 -9h-704q-66 0 -113 -47t-47 -113v-832q0 -66 47 -113t113 -47h832q66 0 113 47t47 113v320 q0 14 9 23t23 9h64q14 0 23 -9t9 -23zM1792 1472v-512q0 -26 -19 -45t-45 -19t-45 19l-176 176l-652 -652q-10 -10 -23 -10t-23 10l-114 114q-10 10 -10 23t10 23l652 652l-176 176q-19 19 -19 45t19 45t45 19h512q26 0 45 -19t19 -45z"/></svg>
<svg class="i" style="width:16.00px;height:18.67px;left:1717.00px;top:1782.86px;" viewBox="0 -1536 1536 1792"><path fill="#b3181d" transform="scale(1,-1)" d="M1536 640q0 -156 -61 -298t-164 -245t-245 -164t-298 -61t-298 61t-245 164t-164 245t-61 298q0 182 80.5 343t226.5 270q43 32 95.5 25t83.5 -50q32 -42 24.5 -94.5t-49.5 -84.5q-98 -74 -151.5 -181t-53.5 -228q0 -104 40.5 -198.5t109.5 -163.5t163.5 -109.5 t198.5 -40.5t198.5 40.5t163.5 109.5t109.5 163.5t40.5 198.5q0 121 -53.5 228t-151.5 181q-42 32 -49.5 84.5t24.5 94.5q31 43 84 50t95 -25q146 -109 226.5 -270t80.5 -343zM896 1408v-640q0 -52 -38 -90t-90 -38t-90 38t-38 90v640q0 52 38 90t90 38t90 -38t38 -90z"/></svg>
<svg class="i" style="width:14.67px;height:18.67px;left:1758.17px;top:1782.86px;" viewBox="0 -1536 1408 1792"><path fill="#8a8a8a" transform="scale(1,-1)" d="M1384 609l-1328 -738q-23 -13 -39.5 -3t-16.5 36v1472q0 26 16.5 36t39.5 -3l1328 -738q23 -13 23 -31t-23 -31z"/></svg>
<svg class="i" style="width:18.67px;height:18.67px;left:1797.37px;top:1782.86px;" viewBox="0 -1536 1792 1792"><path fill="#2f5cb0" transform="scale(1,-1)" d="M1764 1525q33 -24 27 -64l-256 -1536q-5 -29 -32 -45q-14 -8 -31 -8q-11 0 -24 5l-527 215l-298 -327q-18 -21 -47 -21q-14 0 -23 4q-19 7 -30 23.5t-11 36.5v452l-472 193q-37 14 -40 55q-3 39 32 59l1664 960q35 21 68 -2zM1422 26l221 1323l-1434 -827l336 -137 l863 639l-478 -797z"/></svg>
<svg class="i" style="width:18.67px;height:18.67px;left:523.90px;top:1836.83px;" viewBox="0 -1536 1792 1792"><path fill="#111" transform="scale(1,-1)" d="M896 -93l640 349v636l-640 -233v-752zM832 772l698 254l-698 254l-698 -254zM1664 1024v-768q0 -35 -18 -65t-49 -47l-704 -384q-28 -16 -61 -16t-61 16l-704 384q-31 17 -49 47t-18 65v768q0 40 23 73t61 47l704 256q22 8 44 8t44 -8l704 -256q38 -14 61 -47t23 -73z"/></svg>
<svg class="i" style="left:536.6px;top:1842.83px;width:13.4px;height:14.4px" viewBox="0 0 14 15"><path d="M1.3 0.6 L13.4 7.5 L1.3 14.4 Z" fill="#3fa45b" stroke="#fff" stroke-width="1.2" paint-order="stroke"/></svg>
<span class="t" style="top:1838.00px;font-size:18.667px;line-height:18.667px;color:#2b2b2b;letter-spacing:0.138px;left:560.00px;">254 (acrux)</span>
<svg class="i" style="width:18.67px;height:18.67px;left:1837.67px;top:1837.03px;" viewBox="0 -1536 1792 1792"><path fill="#2f5cb0" transform="scale(1,-1)" d="M1408 608v-320q0 -119 -84.5 -203.5t-203.5 -84.5h-832q-119 0 -203.5 84.5t-84.5 203.5v832q0 119 84.5 203.5t203.5 84.5h704q14 0 23 -9t9 -23v-64q0 -14 -9 -23t-23 -9h-704q-66 0 -113 -47t-47 -113v-832q0 -66 47 -113t113 -47h832q66 0 113 47t47 113v320 q0 14 9 23t23 9h64q14 0 23 -9t9 -23zM1792 1472v-512q0 -26 -19 -45t-45 -19t-45 19l-176 176l-652 -652q-10 -10 -23 -10t-23 10l-114 114q-10 10 -10 23t10 23l652 652l-176 176q-19 19 -19 45t19 45t45 19h512q26 0 45 -19t19 -45z"/></svg>
<svg class="i" style="width:16.00px;height:18.67px;left:1717.00px;top:1837.03px;" viewBox="0 -1536 1536 1792"><path fill="#b3181d" transform="scale(1,-1)" d="M1536 640q0 -156 -61 -298t-164 -245t-245 -164t-298 -61t-298 61t-245 164t-164 245t-61 298q0 182 80.5 343t226.5 270q43 32 95.5 25t83.5 -50q32 -42 24.5 -94.5t-49.5 -84.5q-98 -74 -151.5 -181t-53.5 -228q0 -104 40.5 -198.5t109.5 -163.5t163.5 -109.5 t198.5 -40.5t198.5 40.5t163.5 109.5t109.5 163.5t40.5 198.5q0 121 -53.5 228t-151.5 181q-42 32 -49.5 84.5t24.5 94.5q31 43 84 50t95 -25q146 -109 226.5 -270t80.5 -343zM896 1408v-640q0 -52 -38 -90t-90 -38t-90 38t-38 90v640q0 52 38 90t90 38t90 -38t38 -90z"/></svg>
<svg class="i" style="width:14.67px;height:18.67px;left:1758.17px;top:1837.03px;" viewBox="0 -1536 1408 1792"><path fill="#8a8a8a" transform="scale(1,-1)" d="M1384 609l-1328 -738q-23 -13 -39.5 -3t-16.5 36v1472q0 26 16.5 36t39.5 -3l1328 -738q23 -13 23 -31t-23 -31z"/></svg>
<svg class="i" style="width:18.67px;height:18.67px;left:1797.37px;top:1837.03px;" viewBox="0 -1536 1792 1792"><path fill="#2f5cb0" transform="scale(1,-1)" d="M1764 1525q33 -24 27 -64l-256 -1536q-5 -29 -32 -45q-14 -8 -31 -8q-11 0 -24 5l-527 215l-298 -327q-18 -21 -47 -21q-14 0 -23 4q-19 7 -30 23.5t-11 36.5v452l-472 193q-37 14 -40 55q-3 39 32 59l1664 960q35 21 68 -2zM1422 26l221 1323l-1434 -827l336 -137 l863 639l-478 -797z"/></svg>
<svg class="i" style="width:18.67px;height:18.67px;left:523.90px;top:1891.00px;" viewBox="0 -1536 1792 1792"><path fill="#111" transform="scale(1,-1)" d="M896 -93l640 349v636l-640 -233v-752zM832 772l698 254l-698 254l-698 -254zM1664 1024v-768q0 -35 -18 -65t-49 -47l-704 -384q-28 -16 -61 -16t-61 16l-704 384q-31 17 -49 47t-18 65v768q0 40 23 73t61 47l704 256q22 8 44 8t44 -8l704 -256q38 -14 61 -47t23 -73z"/></svg>
<svg class="i" style="left:536.6px;top:1897.00px;width:13.4px;height:14.4px" viewBox="0 0 14 15"><path d="M1.3 0.6 L13.4 7.5 L1.3 14.4 Z" fill="#3fa45b" stroke="#fff" stroke-width="1.2" paint-order="stroke"/></svg>
<span class="t" style="top:1892.00px;font-size:18.667px;line-height:18.667px;color:#2b2b2b;letter-spacing:0.097px;left:560.00px;">255 (hadar)</span>
<svg class="i" style="width:18.67px;height:18.67px;left:1837.67px;top:1891.20px;" viewBox="0 -1536 1792 1792"><path fill="#2f5cb0" transform="scale(1,-1)" d="M1408 608v-320q0 -119 -84.5 -203.5t-203.5 -84.5h-832q-119 0 -203.5 84.5t-84.5 203.5v832q0 119 84.5 203.5t203.5 84.5h704q14 0 23 -9t9 -23v-64q0 -14 -9 -23t-23 -9h-704q-66 0 -113 -47t-47 -113v-832q0 -66 47 -113t113 -47h832q66 0 113 47t47 113v320 q0 14 9 23t23 9h64q14 0 23 -9t9 -23zM1792 1472v-512q0 -26 -19 -45t-45 -19t-45 19l-176 176l-652 -652q-10 -10 -23 -10t-23 10l-114 114q-10 10 -10 23t10 23l652 652l-176 176q-19 19 -19 45t19 45t45 19h512q26 0 45 -19t19 -45z"/></svg>
<svg class="i" style="width:16.00px;height:18.67px;left:1717.00px;top:1891.20px;" viewBox="0 -1536 1536 1792"><path fill="#b3181d" transform="scale(1,-1)" d="M1536 640q0 -156 -61 -298t-164 -245t-245 -164t-298 -61t-298 61t-245 164t-164 245t-61 298q0 182 80.5 343t226.5 270q43 32 95.5 25t83.5 -50q32 -42 24.5 -94.5t-49.5 -84.5q-98 -74 -151.5 -181t-53.5 -228q0 -104 40.5 -198.5t109.5 -163.5t163.5 -109.5 t198.5 -40.5t198.5 40.5t163.5 109.5t109.5 163.5t40.5 198.5q0 121 -53.5 228t-151.5 181q-42 32 -49.5 84.5t24.5 94.5q31 43 84 50t95 -25q146 -109 226.5 -270t80.5 -343zM896 1408v-640q0 -52 -38 -90t-90 -38t-90 38t-38 90v640q0 52 38 90t90 38t90 -38t38 -90z"/></svg>
<svg class="i" style="width:14.67px;height:18.67px;left:1758.17px;top:1891.20px;" viewBox="0 -1536 1408 1792"><path fill="#8a8a8a" transform="scale(1,-1)" d="M1384 609l-1328 -738q-23 -13 -39.5 -3t-16.5 36v1472q0 26 16.5 36t39.5 -3l1328 -738q23 -13 23 -31t-23 -31z"/></svg>
<svg class="i" style="width:18.67px;height:18.67px;left:1797.37px;top:1891.20px;" viewBox="0 -1536 1792 1792"><path fill="#2f5cb0" transform="scale(1,-1)" d="M1764 1525q33 -24 27 -64l-256 -1536q-5 -29 -32 -45q-14 -8 -31 -8q-11 0 -24 5l-527 215l-298 -327q-18 -21 -47 -21q-14 0 -23 4q-19 7 -30 23.5t-11 36.5v452l-472 193q-37 14 -40 55q-3 39 32 59l1664 960q35 21 68 -2zM1422 26l221 1323l-1434 -827l336 -137 l863 639l-478 -797z"/></svg>
</div></div>
<div class="r" style="left:1935.00px;top:97.70px;width:1506.20px;height:1823.10px;background:#fff;box-shadow:0 1px 2.5px rgba(0,0,0,.22);"></div>
<svg class="i" style="width:24.00px;height:28.00px;left:1949.10px;top:113.80px;" viewBox="0 -1536 1536 1792"><path fill="#3b65b1" transform="scale(1,-1)" d="M1344 1536q26 0 45 -19t19 -45v-1664q0 -26 -19 -45t-45 -19h-1280q-26 0 -45 19t-19 45v1664q0 26 19 45t45 19h1280zM512 1248v-64q0 -14 9 -23t23 -9h64q14 0 23 9t9 23v64q0 14 -9 23t-23 9h-64q-14 0 -23 -9t-9 -23zM512 992v-64q0 -14 9 -23t23 -9h64q14 0 23 9 t9 23v64q0 14 -9 23t-23 9h-64q-14 0 -23 -9t-9 -23zM512 736v-64q0 -14 9 -23t23 -9h64q14 0 23 9t9 23v64q0 14 -9 23t-23 9h-64q-14 0 -23 -9t-9 -23zM512 480v-64q0 -14 9 -23t23 -9h64q14 0 23 9t9 23v64q0 14 -9 23t-23 9h-64q-14 0 -23 -9t-9 -23zM384 160v64 q0 14 -9 23t-23 9h-64q-14 0 -23 -9t-9 -23v-64q0 -14 9 -23t23 -9h64q14 0 23 9t9 23zM384 416v64q0 14 -9 23t-23 9h-64q-14 0 -23 -9t-9 -23v-64q0 -14 9 -23t23 -9h64q14 0 23 9t9 23zM384 672v64q0 14 -9 23t-23 9h-64q-14 0 -23 -9t-9 -23v-64q0 -14 9 -23t23 -9h64 q14 0 23 9t9 23zM384 928v64q0 14 -9 23t-23 9h-64q-14 0 -23 -9t-9 -23v-64q0 -14 9 -23t23 -9h64q14 0 23 9t9 23zM384 1184v64q0 14 -9 23t-23 9h-64q-14 0 -23 -9t-9 -23v-64q0 -14 9 -23t23 -9h64q14 0 23 9t9 23zM896 -96v192q0 14 -9 23t-23 9h-320q-14 0 -23 -9 t-9 -23v-192q0 -14 9 -23t23 -9h320q14 0 23 9t9 23zM896 416v64q0 14 -9 23t-23 9h-64q-14 0 -23 -9t-9 -23v-64q0 -14 9 -23t23 -9h64q14 0 23 9t9 23zM896 672v64q0 14 -9 23t-23 9h-64q-14 0 -23 -9t-9 -23v-64q0 -14 9 -23t23 -9h64q14 0 23 9t9 23zM896 928v64 q0 14 -9 23t-23 9h-64q-14 0 -23 -9t-9 -23v-64q0 -14 9 -23t23 -9h64q14 0 23 9t9 23zM896 1184v64q0 14 -9 23t-23 9h-64q-14 0 -23 -9t-9 -23v-64q0 -14 9 -23t23 -9h64q14 0 23 9t9 23zM1152 160v64q0 14 -9 23t-23 9h-64q-14 0 -23 -9t-9 -23v-64q0 -14 9 -23t23 -9h64 q14 0 23 9t9 23zM1152 416v64q0 14 -9 23t-23 9h-64q-14 0 -23 -9t-9 -23v-64q0 -14 9 -23t23 -9h64q14 0 23 9t9 23zM1152 672v64q0 14 -9 23t-23 9h-64q-14 0 -23 -9t-9 -23v-64q0 -14 9 -23t23 -9h64q14 0 23 9t9 23zM1152 928v64q0 14 -9 23t-23 9h-64q-14 0 -23 -9 t-9 -23v-64q0 -14 9 -23t23 -9h64q14 0 23 9t9 23zM1152 1184v64q0 14 -9 23t-23 9h-64q-14 0 -23 -9t-9 -23v-64q0 -14 9 -23t23 -9h64q14 0 23 9t9 23z"/></svg>
<span class="t" style="top:115.00px;font-size:26.100px;line-height:26.100px;color:#3b65b1;letter-spacing:-0.151px;left:1986.60px;">Node &#x27;nunki&#x27;</span>
<div class="r" style="left:1935.00px;top:217.30px;width:1506.20px;height:1.30px;background:#d3d8e0;"></div>
<div class="r" style="left:1962.10px;top:213.40px;width:104.70px;height:4.20px;background:#2553a6;border-radius:4px 4px 0 0;"></div>
<svg class="i" style="width:18.67px;height:18.67px;left:1962.10px;top:177.20px;" viewBox="0 -1536 1792 1792"><path fill="#3a63ad" transform="scale(1,-1)" d="M384 384q0 53 -37.5 90.5t-90.5 37.5t-90.5 -37.5t-37.5 -90.5t37.5 -90.5t90.5 -37.5t90.5 37.5t37.5 90.5zM576 832q0 53 -37.5 90.5t-90.5 37.5t-90.5 -37.5t-37.5 -90.5t37.5 -90.5t90.5 -37.5t90.5 37.5t37.5 90.5zM1004 351l101 382q6 26 -7.5 48.5t-38.5 29.5 t-48 -6.5t-30 -39.5l-101 -382q-60 -5 -107 -43.5t-63 -98.5q-20 -77 20 -146t117 -89t146 20t89 117q16 60 -6 117t-72 91zM1664 384q0 53 -37.5 90.5t-90.5 37.5t-90.5 -37.5t-37.5 -90.5t37.5 -90.5t90.5 -37.5t90.5 37.5t37.5 90.5zM1024 1024q0 53 -37.5 90.5 t-90.5 37.5t-90.5 -37.5t-37.5 -90.5t37.5 -90.5t90.5 -37.5t90.5 37.5t37.5 90.5zM1472 832q0 53 -37.5 90.5t-90.5 37.5t-90.5 -37.5t-37.5 -90.5t37.5 -90.5t90.5 -37.5t90.5 37.5t37.5 90.5zM1792 384q0 -261 -141 -483q-19 -29 -54 -29h-1402q-35 0 -54 29 q-141 221 -141 483q0 182 71 348t191 286t286 191t348 71t348 -71t286 -191t191 -286t71 -348z"/></svg>
<span class="t" style="top:178.00px;font-size:18.667px;line-height:18.667px;color:#3b65b1;letter-spacing:-0.267px;left:1991.00px;">Overview</span>
<svg class="i" style="width:16.00px;height:18.67px;left:2120.70px;top:177.20px;" viewBox="0 -1536 1536 1792"><path fill="#222" transform="scale(1,-1)" d="M1400 256h-248v-248q29 10 41 22l185 185q12 12 22 41zM1120 384h288v896h-1280v-1280h896v288q0 40 28 68t68 28zM1536 1312v-1024q0 -40 -20 -88t-48 -76l-184 -184q-28 -28 -76 -48t-88 -20h-1024q-40 0 -68 28t-28 68v1344q0 40 28 68t68 28h1344q40 0 68 -28t28 -68 z"/></svg>
<span class="t" style="top:178.00px;font-size:18.667px;line-height:18.667px;color:#2b2b2b;letter-spacing:0.168px;left:2147.10px;">Notes</span>
<svg class="i" style="width:16.00px;height:18.67px;left:2250.60px;top:177.20px;" viewBox="0 -1536 1536 1792"><path fill="#222" transform="scale(1,-1)" d="M1511 480q0 -5 -1 -7q-64 -268 -268 -434.5t-478 -166.5q-146 0 -282.5 55t-243.5 157l-129 -129q-19 -19 -45 -19t-45 19t-19 45v448q0 26 19 45t45 19h448q26 0 45 -19t19 -45t-19 -45l-137 -137q71 -66 161 -102t187 -36q134 0 250 65t186 179q11 17 53 117 q8 23 30 23h192q13 0 22.5 -9.5t9.5 -22.5zM1536 1280v-448q0 -26 -19 -45t-45 -19h-448q-26 0 -45 19t-19 45t19 45l138 138q-148 137 -349 137q-134 0 -250 -65t-186 -179q-11 -17 -53 -117q-8 -23 -30 -23h-199q-13 0 -22.5 9.5t-9.5 22.5v7q65 268 270 434.5t480 166.5 q146 0 284 -55.5t245 -156.5l130 129q19 19 45 19t45 -19t19 -45z"/></svg>
<span class="t" style="top:178.00px;font-size:18.667px;line-height:18.667px;color:#2b2b2b;letter-spacing:-0.089px;left:2276.60px;">Updates</span>
<svg class="i" style="width:17.33px;height:18.67px;left:2399.26px;top:177.20px;" viewBox="0 -1536 1664 1792"><path fill="#222" transform="scale(1,-1)" d="M585 553l-466 -466q-10 -10 -23 -10t-23 10l-50 50q-10 10 -10 23t10 23l393 393l-393 393q-10 10 -10 23t10 23l50 50q10 10 23 10t23 -10l466 -466q10 -10 10 -23t-10 -23zM1664 96v-64q0 -14 -9 -23t-23 -9h-960q-14 0 -23 9t-9 23v64q0 14 9 23t23 9h960q14 0 23 -9 t9 -23z"/></svg>
<span class="t" style="top:178.00px;font-size:18.667px;line-height:18.667px;color:#2b2b2b;letter-spacing:-0.233px;left:2427.30px;">Shell</span>
<svg class="i" style="left:1962.80px;top:250.60px;width:23px;height:23px" viewBox="0 0 24 24"><g fill="#161616"><rect x="7" y="0" width="2" height="24"/><rect x="0" y="7" width="24" height="2"/><rect x="11" y="0" width="2" height="24"/><rect x="0" y="11" width="24" height="2"/><rect x="15" y="0" width="2" height="24"/><rect x="0" y="15" width="24" height="2"/><rect x="3" y="3" width="18" height="18" rx="1.5"/></g><rect x="5.2" y="5.2" width="13.6" height="13.6" fill="#fff"/><rect x="7.6" y="7.6" width="8.8" height="8.8" fill="#161616"/></svg>
<span class="t" style="top:255.00px;font-size:18.667px;line-height:18.667px;color:#2b2b2b;letter-spacing:-0.625px;left:2000.60px;">CPU Usage</span>
<span class="t" style="top:255.00px;font-size:18.667px;line-height:18.667px;color:#2b2b2b;letter-spacing:-0.193px;right:803.49px;">0.00% of 32 CPU(s)</span>
<div class="r" style="left:1962.60px;top:279.80px;width:698.10px;height:5.30px;background:#efefef;border-radius:2.6px;"></div>
<svg class="i" style="width:16.00px;height:18.67px;left:2720.40px;top:252.60px;" viewBox="0 -1536 1536 1792"><path fill="#222" transform="scale(1,-1)" d="M896 992v-448q0 -14 -9 -23t-23 -9h-320q-14 0 -23 9t-9 23v64q0 14 9 23t23 9h224v352q0 14 9 23t23 9h64q14 0 23 -9t9 -23zM1312 640q0 148 -73 273t-198 198t-273 73t-273 -73t-198 -198t-73 -273t73 -273t198 -198t273 -73t273 73t198 198t73 273zM1536 640 q0 -209 -103 -385.5t-279.5 -279.5t-385.5 -103t-385.5 103t-279.5 279.5t-103 385.5t103 385.5t279.5 279.5t385.5 103t385.5 -103t279.5 -279.5t103 -385.5z"/></svg>
<span class="t" style="top:253.00px;font-size:18.667px;line-height:18.667px;color:#2b2b2b;letter-spacing:-0.394px;left:2753.70px;">IO delay</span>
<span class="t" style="top:253.00px;font-size:18.667px;line-height:18.667px;color:#2b2b2b;letter-spacing:-0.380px;right:50.18px;">0.00 %</span>
<div class="r" style="left:2716.40px;top:279.50px;width:697.80px;height:4.90px;background:#efefef;border-radius:2.6px;"></div>
<svg class="i" style="left:1962.65px;top:343.29px;width:22.7px;height:11.82px" viewBox="0 0 24 12.5"><rect x="1" y="1" width="22" height="8.6" rx="0.8" fill="none" stroke="#161616" stroke-width="2"/><g fill="#161616"><rect x="4.6" y="3.8" width="3" height="3"/><rect x="10.5" y="3.8" width="3" height="3"/><rect x="16.4" y="3.8" width="3" height="3"/><rect x="1" y="10" width="4" height="2.2"/><rect x="6.5" y="10" width="4.5" height="2.2"/><rect x="13" y="10" width="4.5" height="2.2"/><rect x="19" y="10" width="4" height="2.2"/></g></svg>
<span class="t" style="top:343.00px;font-size:18.667px;line-height:18.667px;color:#2b2b2b;letter-spacing:-0.416px;left:2000.70px;">RAM Usage</span>
<span class="t" style="top:343.00px;font-size:18.667px;line-height:18.667px;color:#2b2b2b;letter-spacing:-0.047px;right:803.35px;">15.09% (18.966 GiB of 125.658 GiB)</span>
<div class="r" style="left:1962.60px;top:367.80px;width:698.10px;height:5.10px;background:#efefef;border-radius:2.6px;"></div>
<div class="r" style="left:1962.60px;top:367.80px;width:105.34px;height:5.10px;background:#2553a6;border-radius:2.6px 0 0 2.6px;"></div>
<svg class="i" style="width:18.67px;height:18.67px;left:2718.27px;top:347.60px;" viewBox="0 -1536 1792 1792"><path fill="#222" transform="scale(1,-1)" d="M1024 128h640v128h-640v-128zM640 640h1024v128h-1024v-128zM1280 1152h384v128h-384v-128zM1792 320v-256q0 -26 -19 -45t-45 -19h-1664q-26 0 -45 19t-19 45v256q0 26 19 45t45 19h1664q26 0 45 -19t19 -45zM1792 832v-256q0 -26 -19 -45t-45 -19h-1664q-26 0 -45 19 t-19 45v256q0 26 19 45t45 19h1664q26 0 45 -19t19 -45zM1792 1344v-256q0 -26 -19 -45t-45 -19h-1664q-26 0 -45 19t-19 45v256q0 26 19 45t45 19h1664q26 0 45 -19t19 -45z"/></svg>
<span class="t" style="top:349.00px;font-size:18.667px;line-height:18.667px;color:#2b2b2b;letter-spacing:-0.152px;left:2753.70px;">Load Average</span>
<span class="t" style="top:349.00px;font-size:18.667px;line-height:18.667px;color:#2b2b2b;letter-spacing:0.179px;right:49.62px;">2.55 2.30 2.19</span>
<svg class="i" style="width:16.00px;height:18.67px;left:1966.50px;top:387.20px;" viewBox="0 -1536 1536 1792"><path fill="#222" transform="scale(1,-1)" d="M1040 320q0 -33 -23.5 -56.5t-56.5 -23.5t-56.5 23.5t-23.5 56.5t23.5 56.5t56.5 23.5t56.5 -23.5t23.5 -56.5zM1296 320q0 -33 -23.5 -56.5t-56.5 -23.5t-56.5 23.5t-23.5 56.5t23.5 56.5t56.5 23.5t56.5 -23.5t23.5 -56.5zM1408 160v320q0 13 -9.5 22.5t-22.5 9.5 h-1216q-13 0 -22.5 -9.5t-9.5 -22.5v-320q0 -13 9.5 -22.5t22.5 -9.5h1216q13 0 22.5 9.5t9.5 22.5zM178 640h1180l-157 482q-4 13 -16 21.5t-26 8.5h-782q-14 0 -26 -8.5t-16 -21.5zM1536 480v-320q0 -66 -47 -113t-113 -47h-1216q-66 0 -113 47t-47 113v320q0 25 16 75 l197 606q17 53 63 86t101 33h782q55 0 101 -33t63 -86l197 -606q16 -50 16 -75z"/></svg>
<span class="t" style="top:388.00px;font-size:18.667px;line-height:18.667px;color:#2b2b2b;letter-spacing:-0.036px;left:2000.70px;">HD space (root)</span>
<span class="t" style="top:388.00px;font-size:18.667px;line-height:18.667px;color:#2b2b2b;letter-spacing:-0.093px;right:803.39px;">5.38% (21.569 GB of 400.561 GB)</span>
<div class="r" style="left:1962.60px;top:412.80px;width:698.10px;height:4.80px;background:#efefef;border-radius:2.6px;"></div>
<div class="r" style="left:1962.60px;top:412.80px;width:37.56px;height:4.80px;background:#2553a6;border-radius:2.6px 0 0 2.6px;"></div>
<svg class="i" style="width:16.00px;height:18.67px;left:2719.40px;top:393.90px;" viewBox="0 -1536 1536 1792"><path fill="#222" transform="scale(1,-1)" d="M1511 480q0 -5 -1 -7q-64 -268 -268 -434.5t-478 -166.5q-146 0 -282.5 55t-243.5 157l-129 -129q-19 -19 -45 -19t-45 19t-19 45v448q0 26 19 45t45 19h448q26 0 45 -19t19 -45t-19 -45l-137 -137q71 -66 161 -102t187 -36q134 0 250 65t186 179q11 17 53 117 q8 23 30 23h192q13 0 22.5 -9.5t9.5 -22.5zM1536 1280v-448q0 -26 -19 -45t-45 -19h-448q-26 0 -45 19t-19 45t19 45l138 138q-148 137 -349 137q-134 0 -250 -65t-186 -179q-11 -17 -53 -117q-8 -23 -30 -23h-199q-13 0 -22.5 9.5t-9.5 22.5v7q65 268 270 434.5t480 166.5 q146 0 284 -55.5t245 -156.5l130 129q19 19 45 19t45 -19t19 -45z"/></svg>
<span class="t" style="top:394.00px;font-size:18.667px;line-height:18.667px;color:#2b2b2b;letter-spacing:-0.369px;left:2753.70px;">SWAP usage</span>
<span class="t" style="top:394.00px;font-size:18.667px;line-height:18.667px;color:#2b2b2b;letter-spacing:0.693px;right:49.11px;">N/A</span>
<span class="t" style="top:473.00px;font-size:18.667px;line-height:18.667px;color:#2b2b2b;letter-spacing:-0.438px;left:1962.60px;">CPU(s)</span>
<span class="t" style="top:473.00px;font-size:18.667px;line-height:18.667px;color:#2b2b2b;letter-spacing:-0.154px;right:49.95px;">32 x AMD EPYC 7302 16-Core Processor (1 Socket)</span>
<span class="t" style="top:505.00px;font-size:18.667px;line-height:18.667px;color:#2b2b2b;letter-spacing:0.082px;left:1962.60px;">Version</span>
<span class="t" style="top:506.00px;font-size:18.667px;line-height:18.667px;color:#2b2b2b;letter-spacing:0.294px;right:49.51px;">pve-manager/8.4.14/b502d23c55afcba1</span>
<span class="t" style="top:538.00px;font-size:18.667px;line-height:18.667px;color:#2b2b2b;letter-spacing:-0.107px;left:1962.60px;">Kernel Version</span>
<span class="t" style="top:538.00px;font-size:18.667px;line-height:18.667px;color:#2b2b2b;letter-spacing:0.101px;right:49.70px;">Linux 6.8.12-17-pve (2025-11-21T11:16Z)</span>
<div class="r" style="left:1962.60px;top:596.03px;width:1451.60px;height:1.34px;background:#c9ced8;"></div>
<div class="r" style="left:3060.90px;top:618.20px;width:134.70px;height:43.00px;background:#fff;border:1.3px solid #c6cad4;border-radius:3.5px;box-sizing:border-box;"></div>
<span class="t" style="top:631.00px;font-size:18.667px;line-height:18.667px;color:#2b2b2b;letter-spacing:-0.460px;left:3075.30px;">Week</span>
<svg class="i" style="left:3167.5px;top:635.6px;width:15px;height:11px" viewBox="0 0 15 11"><path d="M2.2 2.6 L7.5 7.9 L12.8 2.6" fill="none" stroke="#333" stroke-width="1.9"/></svg>
<div class="r" style="left:3209.80px;top:619.60px;width:109.50px;height:39.70px;background:#f0f0f0;border-radius:3.5px 0 0 3.5px;"></div>
<span class="t" style="top:631.00px;font-size:18.667px;line-height:18.667px;color:#2b2b2b;letter-spacing:0.341px;left:3223.20px;">Maximum</span>
<div class="r" style="left:3319.30px;top:619.60px;width:94.50px;height:39.70px;background:#4a76b9;border-radius:0 3.5px 3.5px 0;"></div>
<span class="t" style="top:631.00px;font-size:18.667px;line-height:18.667px;color:#fff;letter-spacing:-0.307px;left:3333.50px;">Average</span>
<div class="r" style="left:1962.00px;top:695.80px;width:1452.80px;height:429.30px;background:#fff;border:1.2px solid #e9e9e9;box-sizing:border-box;border-radius:3px;box-shadow:0 1.3px 3px rgba(0,0,0,.2);"></div>
<div class="r" style="left:1962.00px;top:1151.60px;width:1452.80px;height:429.40px;background:#fff;border:1.2px solid #e9e9e9;box-sizing:border-box;border-radius:3px;box-shadow:0 1.3px 3px rgba(0,0,0,.2);"></div>
<div class="r" style="left:1935px;top:1590px;width:1506.2px;height:330.8px;overflow:hidden"><div style="position:absolute;left:-1935px;top:-1590px">
<div class="r" style="left:1962.00px;top:1608.00px;width:1452.80px;height:432.00px;background:#fff;border:1.2px solid #e9e9e9;box-sizing:border-box;border-radius:3px;box-shadow:0 1.3px 3px rgba(0,0,0,.2);"></div>
</div></div>
<span class="t" style="top:713.00px;font-size:26.100px;line-height:26.100px;color:#3b65b1;letter-spacing:-0.874px;left:1976.60px;">CPU Usage</span>
<span class="t" style="top:1170.00px;font-size:26.100px;line-height:26.100px;color:#3b65b1;letter-spacing:-0.298px;left:1976.60px;">Server load</span>
<span class="t" style="top:1631.00px;font-size:26.100px;line-height:26.100px;color:#3b65b1;letter-spacing:-0.131px;left:1976.70px;">Memory Usage</span>
<div class="r" style="left:3058.30px;top:1623.60px;width:165.70px;height:40.20px;background:#fff;border-radius:5px;box-shadow:0 1.3px 3px rgba(0,0,0,.26),0 0 1px rgba(0,0,0,.12);"></div>
<div class="r" style="left:3070.90px;top:1635.40px;width:16.60px;height:16.60px;background:#2a6436;border-radius:50%;"></div>
<span class="t" style="top:1635.00px;font-size:18.667px;line-height:18.667px;color:#4169b3;letter-spacing:0.235px;left:3096.80px;">Total Memory</span>
<div class="r" style="left:3231.70px;top:1623.60px;width:168.70px;height:40.20px;background:#fff;border-radius:5px;box-shadow:0 1.3px 3px rgba(0,0,0,.26),0 0 1px rgba(0,0,0,.12);"></div>
<div class="r" style="left:3245.10px;top:1635.40px;width:16.60px;height:16.60px;background:#2d5bb0;border-radius:50%;"></div>
<span class="t" style="top:1635.00px;font-size:18.667px;line-height:18.667px;color:#4169b3;letter-spacing:-0.077px;left:3271.40px;">Used Memory</span>
<svg class="i" style="left:1935px;top:690px;width:1506px;height:1230.8px;overflow:hidden" viewBox="1935 690 1506 1230.8" font-family="Liberation Sans, sans-serif"><path d="M2058.6 860.9 L2062.3 849.5 L2065.8 858.8 L2070.0 859.5 L2074.7 864.0 L2078.2 875.4 L2082.4 885.7 L2086.5 906.4 L2090.0 926.0 L2094.1 930.1 L2098.5 944.6 L2101.6 952.9 L2106.1 944.6 L2110.2 940.5 L2113.3 947.7 L2116.9 952.2 L2122.6 950.8 L2126.8 952.9 L2133.4 960.1 L2139.2 956.6 L2145.0 955.5 L2149.5 959.0 L2153.6 956.0 L2157.1 951.0 L2161.9 956.0 L2167.1 952.9 L2173.3 947.7 L2177.4 949.3 L2182.6 953.3 L2188.8 951.8 L2192.9 952.4 L2197.0 945.6 L2200.7 934.3 L2203.2 910.5 L2205.3 898.1 L2209.0 887.8 L2212.5 864.6 L2216.7 864.0 L2220.2 844.4 L2223.9 839.2 L2228.4 826.2 L2232.6 845.4 L2236.3 845.4 L2240.0 829.9 L2243.5 811.3 L2248.3 806.2 L2251.8 825.8 L2255.9 849.5 L2260.0 857.8 L2264.2 868.1 L2268.3 876.4 L2272.4 888.8 L2276.6 902.2 L2280.7 916.7 L2284.8 934.3 L2289.0 945.6 L2293.1 951.8 L2296.2 949.3 L2299.9 941.1 L2303.4 942.5 L2307.6 941.5 L2311.7 945.2 L2315.2 944.6 L2318.9 957.0 L2324.1 962.8 L2329.3 959.7 L2334.4 956.0 L2339.6 954.5 L2346.8 949.3 L2351.0 952.4 L2355.1 954.5 L2360.2 946.7 L2364.4 943.6 L2368.5 946.0 L2373.7 949.8 L2378.8 947.3 L2383.0 950.4 L2387.1 945.6 L2390.6 930.1 L2394.3 904.7 L2398.1 908.4 L2402.0 888.8 L2406.1 855.7 L2410.2 854.7 L2414.4 837.1 L2419.1 833.4 L2423.3 836.1 L2427.4 846.4 L2430.5 855.7 L2434.6 844.4 L2441.9 833.4 L2446.0 843.3 L2449.7 853.7 L2453.8 850.6 L2457.4 863.0 L2461.5 895.0 L2465.6 919.8 L2469.3 930.7 L2473.5 928.7 L2477.6 935.3 L2481.7 948.7 L2485.9 945.6 L2489.4 946.7 L2493.5 946.2 L2497.6 954.5 L2503.8 952.9 L2509.0 960.5 L2514.2 964.2 L2520.0 959.0 L2525.2 958.4 L2532.4 961.7 L2536.9 956.6 L2544.8 963.2 L2551.0 957.6 L2556.8 953.3 L2560.3 961.7 L2567.5 959.5 L2574.1 965.9 L2578.9 963.8 L2584.5 958.4 L2591.9 961.7 L2596.9 953.9 L2601.6 951.4 L2608.8 956.6 L2615.5 953.9 L2622.3 956.0 L2627.4 953.5 L2632.0 949.3 L2636.7 955.3 L2642.9 955.3 L2647.5 950.2 L2652.2 956.4 L2658.0 956.6 L2663.6 952.2 L2667.7 957.6 L2670.8 959.0 L2676.0 953.3 L2679.5 953.3 L2684.3 959.0 L2689.4 958.6 L2695.6 954.3 L2699.8 957.6 L2702.9 961.5 L2707.0 957.4 L2712.1 959.0 L2718.3 960.5 L2723.5 955.3 L2726.0 954.9 L2730.3 961.1 L2734.9 957.6 L2738.6 963.2 L2742.7 958.6 L2746.2 961.5 L2750.8 965.9 L2753.9 959.0 L2757.6 962.1 L2762.8 967.7 L2767.9 968.8 L2775.2 964.2 L2777.6 965.2 L2782.4 957.6 L2790.7 954.5 L2797.9 958.0 L2802.0 957.6 L2806.2 953.9 L2810.3 962.1 L2813.8 964.2 L2817.5 960.1 L2821.7 953.3 L2825.4 961.1 L2829.3 963.2 L2833.0 961.1 L2837.6 953.5 L2841.9 961.5 L2846.4 960.1 L2852.6 959.5 L2860.9 963.8 L2864.6 962.1 L2868.8 954.3 L2873.3 960.5 L2877.0 964.2 L2881.2 960.7 L2884.7 959.7 L2892.9 967.3 L2900.2 962.6 L2905.3 954.9 L2911.5 955.3 L2916.3 952.9 L2920.8 958.4 L2928.7 951.8 L2932.2 952.9 L2940.5 961.5 L2944.2 947.7 L2948.1 959.0 L2951.8 956.0 L2956.0 946.7 L2959.7 935.3 L2963.2 906.4 L2967.3 882.6 L2971.4 868.1 L2975.6 856.8 L2979.1 841.3 L2982.8 838.2 L2987.4 828.9 L2991.7 836.7 L2995.8 824.1 L2999.3 825.8 L3004.5 812.4 L3011.3 799.5 L3014.8 816.5 L3019.0 834.0 L3019.9 835.7 L3023.6 835.7 L3027.8 853.7 L3031.9 872.3 L3035.4 904.3 L3039.1 921.9 L3043.3 923.9 L3047.4 934.3 L3052.6 941.1 L3059.2 945.2 L3066.4 952.4 L3071.0 944.6 L3074.7 947.7 L3078.8 952.2 L3084.0 954.5 L3091.2 952.4 L3094.3 953.5 L3102.1 961.5 L3106.3 952.9 L3110.4 959.5 L3116.0 957.0 L3122.2 951.8 L3126.3 953.5 L3129.8 956.4 L3137.3 947.3 L3141.8 939.0 L3146.0 935.9 L3150.1 928.7 L3153.2 896.0 L3157.3 878.5 L3161.4 867.1 L3165.6 847.5 L3169.3 835.7 L3173.8 842.9 L3177.6 845.4 L3181.1 842.7 L3185.2 833.0 L3189.3 837.1 L3193.1 852.2 L3197.6 842.3 L3202.1 838.2 L3205.9 839.8 L3209.0 839.6 L3213.5 834.7 L3217.2 851.6 L3221.4 867.1 L3225.5 894.0 L3229.6 910.5 L3233.1 929.1 L3236.9 941.5 L3240.6 949.3 L3248.8 936.9 L3252.4 948.1 L3255.9 951.4 L3259.6 952.2 L3264.1 947.7 L3267.9 951.8 L3272.4 963.8 L3276.1 959.0 L3280.9 953.3 L3284.4 952.4 L3287.5 954.5 L3291.6 951.2 L3295.7 949.3 L3299.9 953.3 L3304.0 956.0 L3312.3 946.7 L3315.8 949.8 L3320.1 958.4 L3323.6 953.9 L3327.8 943.1 L3331.9 948.7 L3336.0 949.8 L3339.8 935.3 L3343.3 908.4 L3347.8 901.8 L3351.5 906.4 L3355.7 887.8 L3359.8 866.1 L3363.5 858.4 L3367.4 873.3 L3370.1 871.2 L3375.3 863.0 L3382.5 852.6 L3387.1 838.8 L3387.1 1054.5 L2058.6 1054.5 Z" fill="#dee9e3"/><g stroke="rgba(0,0,0,0.07)" stroke-width="1.4" fill="none"><line x1="2045.1" y1="783.40" x2="3400.1" y2="783.40"/><line x1="2045.1" y1="817.29" x2="3400.1" y2="817.29"/><line x1="2045.1" y1="851.18" x2="3400.1" y2="851.18"/><line x1="2045.1" y1="885.07" x2="3400.1" y2="885.07"/><line x1="2045.1" y1="918.96" x2="3400.1" y2="918.96"/><line x1="2045.1" y1="952.85" x2="3400.1" y2="952.85"/><line x1="2045.1" y1="986.74" x2="3400.1" y2="986.74"/><line x1="2045.1" y1="1020.63" x2="3400.1" y2="1020.63"/><line x1="2045.1" y1="1054.52" x2="3400.1" y2="1054.52"/><line x1="2142.60" y1="770.3" x2="2142.60" y2="1065.0"/><line x1="2332.45" y1="770.3" x2="2332.45" y2="1065.0"/><line x1="2522.30" y1="770.3" x2="2522.30" y2="1065.0"/><line x1="2712.15" y1="770.3" x2="2712.15" y2="1065.0"/><line x1="2902.00" y1="770.3" x2="2902.00" y2="1065.0"/><line x1="3091.85" y1="770.3" x2="3091.85" y2="1065.0"/><line x1="3281.70" y1="770.3" x2="3281.70" y2="1065.0"/></g><path d="M2058.6 860.9 L2062.3 849.5 L2065.8 858.8 L2070.0 859.5 L2074.7 864.0 L2078.2 875.4 L2082.4 885.7 L2086.5 906.4 L2090.0 926.0 L2094.1 930.1 L2098.5 944.6 L2101.6 952.9 L2106.1 944.6 L2110.2 940.5 L2113.3 947.7 L2116.9 952.2 L2122.6 950.8 L2126.8 952.9 L2133.4 960.1 L2139.2 956.6 L2145.0 955.5 L2149.5 959.0 L2153.6 956.0 L2157.1 951.0 L2161.9 956.0 L2167.1 952.9 L2173.3 947.7 L2177.4 949.3 L2182.6 953.3 L2188.8 951.8 L2192.9 952.4 L2197.0 945.6 L2200.7 934.3 L2203.2 910.5 L2205.3 898.1 L2209.0 887.8 L2212.5 864.6 L2216.7 864.0 L2220.2 844.4 L2223.9 839.2 L2228.4 826.2 L2232.6 845.4 L2236.3 845.4 L2240.0 829.9 L2243.5 811.3 L2248.3 806.2 L2251.8 825.8 L2255.9 849.5 L2260.0 857.8 L2264.2 868.1 L2268.3 876.4 L2272.4 888.8 L2276.6 902.2 L2280.7 916.7 L2284.8 934.3 L2289.0 945.6 L2293.1 951.8 L2296.2 949.3 L2299.9 941.1 L2303.4 942.5 L2307.6 941.5 L2311.7 945.2 L2315.2 944.6 L2318.9 957.0 L2324.1 962.8 L2329.3 959.7 L2334.4 956.0 L2339.6 954.5 L2346.8 949.3 L2351.0 952.4 L2355.1 954.5 L2360.2 946.7 L2364.4 943.6 L2368.5 946.0 L2373.7 949.8 L2378.8 947.3 L2383.0 950.4 L2387.1 945.6 L2390.6 930.1 L2394.3 904.7 L2398.1 908.4 L2402.0 888.8 L2406.1 855.7 L2410.2 854.7 L2414.4 837.1 L2419.1 833.4 L2423.3 836.1 L2427.4 846.4 L2430.5 855.7 L2434.6 844.4 L2441.9 833.4 L2446.0 843.3 L2449.7 853.7 L2453.8 850.6 L2457.4 863.0 L2461.5 895.0 L2465.6 919.8 L2469.3 930.7 L2473.5 928.7 L2477.6 935.3 L2481.7 948.7 L2485.9 945.6 L2489.4 946.7 L2493.5 946.2 L2497.6 954.5 L2503.8 952.9 L2509.0 960.5 L2514.2 964.2 L2520.0 959.0 L2525.2 958.4 L2532.4 961.7 L2536.9 956.6 L2544.8 963.2 L2551.0 957.6 L2556.8 953.3 L2560.3 961.7 L2567.5 959.5 L2574.1 965.9 L2578.9 963.8 L2584.5 958.4 L2591.9 961.7 L2596.9 953.9 L2601.6 951.4 L2608.8 956.6 L2615.5 953.9 L2622.3 956.0 L2627.4 953.5 L2632.0 949.3 L2636.7 955.3 L2642.9 955.3 L2647.5 950.2 L2652.2 956.4 L2658.0 956.6 L2663.6 952.2 L2667.7 957.6 L2670.8 959.0 L2676.0 953.3 L2679.5 953.3 L2684.3 959.0 L2689.4 958.6 L2695.6 954.3 L2699.8 957.6 L2702.9 961.5 L2707.0 957.4 L2712.1 959.0 L2718.3 960.5 L2723.5 955.3 L2726.0 954.9 L2730.3 961.1 L2734.9 957.6 L2738.6 963.2 L2742.7 958.6 L2746.2 961.5 L2750.8 965.9 L2753.9 959.0 L2757.6 962.1 L2762.8 967.7 L2767.9 968.8 L2775.2 964.2 L2777.6 965.2 L2782.4 957.6 L2790.7 954.5 L2797.9 958.0 L2802.0 957.6 L2806.2 953.9 L2810.3 962.1 L2813.8 964.2 L2817.5 960.1 L2821.7 953.3 L2825.4 961.1 L2829.3 963.2 L2833.0 961.1 L2837.6 953.5 L2841.9 961.5 L2846.4 960.1 L2852.6 959.5 L2860.9 963.8 L2864.6 962.1 L2868.8 954.3 L2873.3 960.5 L2877.0 964.2 L2881.2 960.7 L2884.7 959.7 L2892.9 967.3 L2900.2 962.6 L2905.3 954.9 L2911.5 955.3 L2916.3 952.9 L2920.8 958.4 L2928.7 951.8 L2932.2 952.9 L2940.5 961.5 L2944.2 947.7 L2948.1 959.0 L2951.8 956.0 L2956.0 946.7 L2959.7 935.3 L2963.2 906.4 L2967.3 882.6 L2971.4 868.1 L2975.6 856.8 L2979.1 841.3 L2982.8 838.2 L2987.4 828.9 L2991.7 836.7 L2995.8 824.1 L2999.3 825.8 L3004.5 812.4 L3011.3 799.5 L3014.8 816.5 L3019.0 834.0 L3019.9 835.7 L3023.6 835.7 L3027.8 853.7 L3031.9 872.3 L3035.4 904.3 L3039.1 921.9 L3043.3 923.9 L3047.4 934.3 L3052.6 941.1 L3059.2 945.2 L3066.4 952.4 L3071.0 944.6 L3074.7 947.7 L3078.8 952.2 L3084.0 954.5 L3091.2 952.4 L3094.3 953.5 L3102.1 961.5 L3106.3 952.9 L3110.4 959.5 L3116.0 957.0 L3122.2 951.8 L3126.3 953.5 L3129.8 956.4 L3137.3 947.3 L3141.8 939.0 L3146.0 935.9 L3150.1 928.7 L3153.2 896.0 L3157.3 878.5 L3161.4 867.1 L3165.6 847.5 L3169.3 835.7 L3173.8 842.9 L3177.6 845.4 L3181.1 842.7 L3185.2 833.0 L3189.3 837.1 L3193.1 852.2 L3197.6 842.3 L3202.1 838.2 L3205.9 839.8 L3209.0 839.6 L3213.5 834.7 L3217.2 851.6 L3221.4 867.1 L3225.5 894.0 L3229.6 910.5 L3233.1 929.1 L3236.9 941.5 L3240.6 949.3 L3248.8 936.9 L3252.4 948.1 L3255.9 951.4 L3259.6 952.2 L3264.1 947.7 L3267.9 951.8 L3272.4 963.8 L3276.1 959.0 L3280.9 953.3 L3284.4 952.4 L3287.5 954.5 L3291.6 951.2 L3295.7 949.3 L3299.9 953.3 L3304.0 956.0 L3312.3 946.7 L3315.8 949.8 L3320.1 958.4 L3323.6 953.9 L3327.8 943.1 L3331.9 948.7 L3336.0 949.8 L3339.8 935.3 L3343.3 908.4 L3347.8 901.8 L3351.5 906.4 L3355.7 887.8 L3359.8 866.1 L3363.5 858.4 L3367.4 873.3 L3370.1 871.2 L3375.3 863.0 L3382.5 852.6 L3387.1 838.8" fill="none" stroke="#8db49b" stroke-width="1.6" stroke-linejoin="round"/><text x="2038.56" y="788.20" text-anchor="end" font-size="18.667" fill="#2b2b2b" letter-spacing="-0.344">8.00%</text><text x="2038.56" y="822.09" text-anchor="end" font-size="18.667" fill="#2b2b2b" letter-spacing="-0.344">7.00%</text><text x="2038.56" y="855.98" text-anchor="end" font-size="18.667" fill="#2b2b2b" letter-spacing="-0.344">6.00%</text><text x="2038.56" y="889.87" text-anchor="end" font-size="18.667" fill="#2b2b2b" letter-spacing="-0.344">5.00%</text><text x="2038.56" y="923.76" text-anchor="end" font-size="18.667" fill="#2b2b2b" letter-spacing="-0.344">4.00%</text><text x="2038.56" y="957.65" text-anchor="end" font-size="18.667" fill="#2b2b2b" letter-spacing="-0.344">3.00%</text><text x="2038.56" y="991.54" text-anchor="end" font-size="18.667" fill="#2b2b2b" letter-spacing="-0.344">2.00%</text><text x="2038.56" y="1025.43" text-anchor="end" font-size="18.667" fill="#2b2b2b" letter-spacing="-0.344">1.00%</text><text x="2038.56" y="1059.32" text-anchor="end" font-size="18.667" fill="#2b2b2b" letter-spacing="-0.344">0.00%</text><text x="2142.73" y="1081.40" text-anchor="middle" font-size="18.667" fill="#2b2b2b" letter-spacing="0.258">01:00</text><text x="2142.76" y="1103.40" text-anchor="middle" font-size="18.667" fill="#2b2b2b" letter-spacing="0.319">2025-11-27</text><text x="2332.58" y="1081.40" text-anchor="middle" font-size="18.667" fill="#2b2b2b" letter-spacing="0.258">01:00</text><text x="2332.61" y="1103.40" text-anchor="middle" font-size="18.667" fill="#2b2b2b" letter-spacing="0.319">2025-11-28</text><text x="2522.43" y="1081.40" text-anchor="middle" font-size="18.667" fill="#2b2b2b" letter-spacing="0.258">01:00</text><text x="2522.46" y="1103.40" text-anchor="middle" font-size="18.667" fill="#2b2b2b" letter-spacing="0.319">2025-11-29</text><text x="2712.28" y="1081.40" text-anchor="middle" font-size="18.667" fill="#2b2b2b" letter-spacing="0.258">01:00</text><text x="2712.31" y="1103.40" text-anchor="middle" font-size="18.667" fill="#2b2b2b" letter-spacing="0.319">2025-11-30</text><text x="2902.13" y="1081.40" text-anchor="middle" font-size="18.667" fill="#2b2b2b" letter-spacing="0.258">01:00</text><text x="2902.09" y="1103.40" text-anchor="middle" font-size="18.667" fill="#2b2b2b" letter-spacing="0.180">2025-12-01</text><text x="3091.98" y="1081.40" text-anchor="middle" font-size="18.667" fill="#2b2b2b" letter-spacing="0.258">01:00</text><text x="3091.94" y="1103.40" text-anchor="middle" font-size="18.667" fill="#2b2b2b" letter-spacing="0.180">2025-12-02</text><text x="3281.83" y="1081.40" text-anchor="middle" font-size="18.667" fill="#2b2b2b" letter-spacing="0.258">01:00</text><text x="3281.79" y="1103.40" text-anchor="middle" font-size="18.667" fill="#2b2b2b" letter-spacing="0.180">2025-12-03</text><path d="M2039.6 1347.1 L2043.8 1341.9 L2047.9 1343.6 L2051.4 1313.0 L2056.2 1317.1 L2060.3 1332.6 L2063.8 1362.6 L2067.9 1383.2 L2071.7 1401.8 L2075.8 1406.0 L2079.9 1410.7 L2083.6 1404.5 L2087.8 1411.1 L2091.7 1390.0 L2095.4 1414.2 L2099.5 1441.1 L2103.7 1422.5 L2107.8 1421.4 L2111.9 1432.8 L2116.1 1425.2 L2120.2 1424.1 L2123.9 1416.3 L2127.4 1421.4 L2131.6 1411.7 L2135.7 1426.0 L2139.4 1415.7 L2144.0 1421.9 L2148.1 1420.4 L2152.2 1415.2 L2156.4 1418.3 L2160.9 1425.0 L2164.6 1422.5 L2168.3 1414.8 L2172.3 1411.7 L2176.0 1416.7 L2179.7 1398.7 L2183.8 1400.8 L2187.8 1371.9 L2191.9 1330.1 L2196.0 1366.7 L2200.2 1344.0 L2203.9 1311.9 L2208.0 1312.4 L2212.1 1308.8 L2215.9 1303.1 L2220.0 1306.8 L2224.1 1316.1 L2227.6 1270.6 L2232.2 1249.5 L2235.9 1298.5 L2240.0 1355.7 L2244.2 1344.0 L2247.9 1331.6 L2252.4 1347.1 L2256.2 1373.9 L2260.1 1377.4 L2264.2 1363.2 L2267.9 1391.5 L2272.1 1420.8 L2276.2 1408.4 L2280.3 1429.1 L2284.0 1411.7 L2288.2 1404.9 L2292.3 1388.8 L2296.4 1419.0 L2300.4 1401.4 L2304.5 1422.5 L2308.2 1428.7 L2312.4 1436.9 L2316.5 1428.7 L2320.2 1432.8 L2324.1 1417.9 L2328.3 1427.2 L2332.4 1413.2 L2336.5 1430.7 L2340.7 1421.4 L2344.8 1404.3 L2348.5 1411.7 L2352.2 1408.0 L2356.4 1394.6 L2360.5 1415.2 L2364.6 1426.0 L2368.6 1411.7 L2372.7 1415.9 L2376.8 1419.8 L2380.5 1373.9 L2384.7 1384.9 L2388.4 1359.0 L2392.3 1318.6 L2396.4 1322.3 L2400.2 1307.8 L2404.7 1286.7 L2408.8 1294.4 L2412.6 1313.4 L2416.7 1319.2 L2420.8 1330.5 L2424.3 1303.7 L2428.5 1302.6 L2432.6 1304.7 L2436.7 1326.0 L2440.5 1310.9 L2444.6 1325.4 L2448.7 1380.1 L2452.4 1393.1 L2456.6 1389.8 L2460.5 1410.1 L2464.6 1412.6 L2468.8 1422.5 L2472.9 1430.7 L2476.6 1435.5 L2480.3 1406.0 L2484.9 1414.8 L2489.0 1415.7 L2493.1 1425.6 L2496.9 1430.1 L2501.0 1412.8 L2505.1 1420.8 L2508.6 1419.0 L2512.8 1408.6 L2516.9 1424.5 L2520.7 1443.1 L2524.8 1415.9 L2528.9 1441.1 L2532.6 1445.2 L2536.8 1438.6 L2540.9 1427.6 L2544.8 1410.5 L2549.0 1430.1 L2553.1 1435.5 L2556.8 1420.0 L2560.5 1425.6 L2565.1 1439.6 L2569.2 1411.5 L2572.9 1427.2 L2577.1 1443.6 L2581.0 1430.1 L2585.1 1444.2 L2589.3 1436.3 L2593.0 1434.9 L2597.1 1438.6 L2601.2 1425.2 L2605.4 1425.6 L2609.1 1428.7 L2613.2 1409.7 L2616.7 1405.3 L2621.3 1412.1 L2625.0 1413.2 L2629.1 1428.7 L2633.3 1438.4 L2637.0 1405.3 L2641.1 1443.1 L2645.2 1440.7 L2649.2 1431.2 L2653.3 1421.9 L2657.0 1426.2 L2661.2 1423.9 L2665.3 1432.8 L2669.0 1411.7 L2673.1 1430.1 L2677.3 1416.3 L2681.4 1401.2 L2685.3 1425.2 L2689.5 1435.9 L2693.6 1426.6 L2697.3 1433.8 L2701.4 1443.6 L2705.6 1422.9 L2709.3 1446.9 L2713.2 1434.9 L2717.4 1424.1 L2721.5 1434.9 L2725.2 1427.2 L2729.3 1422.5 L2733.5 1435.9 L2737.6 1410.7 L2741.7 1412.1 L2745.5 1414.8 L2749.4 1410.7 L2753.5 1422.1 L2757.2 1437.6 L2761.4 1424.5 L2765.5 1448.3 L2769.6 1444.2 L2773.8 1435.9 L2777.5 1431.4 L2781.0 1434.3 L2785.1 1416.9 L2789.3 1423.5 L2793.0 1414.2 L2797.1 1421.4 L2801.2 1446.2 L2805.8 1402.4 L2809.9 1420.4 L2813.6 1436.3 L2817.8 1426.2 L2821.7 1437.6 L2825.4 1440.0 L2830.0 1424.5 L2833.7 1433.8 L2837.8 1430.1 L2841.9 1427.2 L2846.1 1428.1 L2850.2 1425.0 L2853.7 1424.5 L2857.9 1428.7 L2861.6 1407.6 L2865.7 1420.4 L2869.8 1433.4 L2873.6 1426.2 L2877.7 1445.8 L2881.8 1443.1 L2885.7 1432.8 L2889.9 1421.9 L2893.6 1431.2 L2897.7 1418.8 L2901.4 1423.5 L2906.0 1407.0 L2909.7 1420.8 L2913.8 1423.5 L2917.8 1416.3 L2921.9 1423.1 L2925.6 1408.4 L2929.8 1416.9 L2933.9 1437.6 L2938.0 1431.8 L2941.7 1429.7 L2945.9 1415.9 L2950.0 1419.4 L2954.1 1397.7 L2958.1 1371.9 L2962.2 1336.7 L2966.3 1346.7 L2970.5 1344.6 L2974.2 1332.6 L2978.3 1306.8 L2982.4 1282.6 L2986.2 1313.6 L2990.1 1303.1 L2994.2 1308.8 L2998.3 1265.0 L3002.4 1271.7 L3010.2 1252.0 L3014.1 1308.8 L3018.3 1290.2 L3022.0 1287.1 L3026.1 1371.9 L3030.2 1368.1 L3034.0 1380.1 L3038.1 1396.2 L3042.2 1402.4 L3046.2 1423.5 L3050.3 1420.0 L3054.4 1426.0 L3058.6 1413.2 L3062.3 1418.3 L3066.4 1427.2 L3070.5 1414.2 L3074.3 1405.3 L3078.4 1413.2 L3082.3 1417.3 L3086.4 1416.3 L3090.2 1434.5 L3094.3 1430.7 L3098.4 1434.9 L3102.1 1412.1 L3106.3 1423.5 L3110.4 1430.1 L3114.5 1429.7 L3118.5 1409.0 L3122.6 1413.8 L3126.3 1429.7 L3130.5 1390.0 L3134.6 1416.3 L3138.3 1413.6 L3142.4 1409.5 L3146.6 1414.2 L3150.5 1357.0 L3154.6 1360.5 L3158.8 1342.5 L3162.5 1291.9 L3166.6 1308.8 L3170.7 1322.9 L3174.5 1273.1 L3178.6 1320.2 L3182.7 1324.3 L3186.7 1308.8 L3190.8 1329.5 L3194.5 1311.5 L3198.6 1328.5 L3202.8 1339.4 L3206.5 1321.2 L3210.6 1274.8 L3214.8 1329.1 L3218.9 1329.9 L3222.8 1360.5 L3226.5 1389.4 L3230.7 1401.8 L3234.8 1419.4 L3238.9 1423.1 L3242.6 1421.0 L3246.8 1419.4 L3250.7 1436.9 L3254.8 1426.2 L3259.0 1424.5 L3262.7 1423.5 L3266.8 1416.3 L3270.5 1431.8 L3274.7 1436.5 L3278.8 1416.9 L3282.9 1428.7 L3286.9 1396.2 L3291.0 1419.4 L3294.7 1409.7 L3298.8 1416.3 L3303.0 1447.9 L3307.1 1415.9 L3310.8 1422.1 L3315.0 1428.7 L3319.1 1413.6 L3323.0 1415.2 L3327.1 1420.8 L3331.3 1406.0 L3335.0 1414.8 L3339.1 1398.7 L3342.9 1359.0 L3347.0 1375.0 L3351.1 1386.3 L3355.0 1347.7 L3359.2 1355.3 L3362.9 1321.9 L3367.0 1338.4 L3371.2 1345.4 L3374.9 1325.0 L3379.0 1331.6 L3382.9 1330.1 L3387.1 1314.0 L3387.1 1510.9 L2039.6 1510.9 Z" fill="#dee9e3"/><g stroke="rgba(0,0,0,0.07)" stroke-width="1.4" fill="none"><line x1="2026.2" y1="1240.00" x2="3400.1" y2="1240.00"/><line x1="2026.2" y1="1330.30" x2="3400.1" y2="1330.30"/><line x1="2026.2" y1="1420.60" x2="3400.1" y2="1420.60"/><line x1="2026.2" y1="1510.90" x2="3400.1" y2="1510.90"/><line x1="2125.00" y1="1227.2" x2="2125.00" y2="1521.5"/><line x1="2317.43" y1="1227.2" x2="2317.43" y2="1521.5"/><line x1="2509.86" y1="1227.2" x2="2509.86" y2="1521.5"/><line x1="2702.29" y1="1227.2" x2="2702.29" y2="1521.5"/><line x1="2894.72" y1="1227.2" x2="2894.72" y2="1521.5"/><line x1="3087.15" y1="1227.2" x2="3087.15" y2="1521.5"/><line x1="3279.58" y1="1227.2" x2="3279.58" y2="1521.5"/></g><path d="M2039.6 1347.1 L2043.8 1341.9 L2047.9 1343.6 L2051.4 1313.0 L2056.2 1317.1 L2060.3 1332.6 L2063.8 1362.6 L2067.9 1383.2 L2071.7 1401.8 L2075.8 1406.0 L2079.9 1410.7 L2083.6 1404.5 L2087.8 1411.1 L2091.7 1390.0 L2095.4 1414.2 L2099.5 1441.1 L2103.7 1422.5 L2107.8 1421.4 L2111.9 1432.8 L2116.1 1425.2 L2120.2 1424.1 L2123.9 1416.3 L2127.4 1421.4 L2131.6 1411.7 L2135.7 1426.0 L2139.4 1415.7 L2144.0 1421.9 L2148.1 1420.4 L2152.2 1415.2 L2156.4 1418.3 L2160.9 1425.0 L2164.6 1422.5 L2168.3 1414.8 L2172.3 1411.7 L2176.0 1416.7 L2179.7 1398.7 L2183.8 1400.8 L2187.8 1371.9 L2191.9 1330.1 L2196.0 1366.7 L2200.2 1344.0 L2203.9 1311.9 L2208.0 1312.4 L2212.1 1308.8 L2215.9 1303.1 L2220.0 1306.8 L2224.1 1316.1 L2227.6 1270.6 L2232.2 1249.5 L2235.9 1298.5 L2240.0 1355.7 L2244.2 1344.0 L2247.9 1331.6 L2252.4 1347.1 L2256.2 1373.9 L2260.1 1377.4 L2264.2 1363.2 L2267.9 1391.5 L2272.1 1420.8 L2276.2 1408.4 L2280.3 1429.1 L2284.0 1411.7 L2288.2 1404.9 L2292.3 1388.8 L2296.4 1419.0 L2300.4 1401.4 L2304.5 1422.5 L2308.2 1428.7 L2312.4 1436.9 L2316.5 1428.7 L2320.2 1432.8 L2324.1 1417.9 L2328.3 1427.2 L2332.4 1413.2 L2336.5 1430.7 L2340.7 1421.4 L2344.8 1404.3 L2348.5 1411.7 L2352.2 1408.0 L2356.4 1394.6 L2360.5 1415.2 L2364.6 1426.0 L2368.6 1411.7 L2372.7 1415.9 L2376.8 1419.8 L2380.5 1373.9 L2384.7 1384.9 L2388.4 1359.0 L2392.3 1318.6 L2396.4 1322.3 L2400.2 1307.8 L2404.7 1286.7 L2408.8 1294.4 L2412.6 1313.4 L2416.7 1319.2 L2420.8 1330.5 L2424.3 1303.7 L2428.5 1302.6 L2432.6 1304.7 L2436.7 1326.0 L2440.5 1310.9 L2444.6 1325.4 L2448.7 1380.1 L2452.4 1393.1 L2456.6 1389.8 L2460.5 1410.1 L2464.6 1412.6 L2468.8 1422.5 L2472.9 1430.7 L2476.6 1435.5 L2480.3 1406.0 L2484.9 1414.8 L2489.0 1415.7 L2493.1 1425.6 L2496.9 1430.1 L2501.0 1412.8 L2505.1 1420.8 L2508.6 1419.0 L2512.8 1408.6 L2516.9 1424.5 L2520.7 1443.1 L2524.8 1415.9 L2528.9 1441.1 L2532.6 1445.2 L2536.8 1438.6 L2540.9 1427.6 L2544.8 1410.5 L2549.0 1430.1 L2553.1 1435.5 L2556.8 1420.0 L2560.5 1425.6 L2565.1 1439.6 L2569.2 1411.5 L2572.9 1427.2 L2577.1 1443.6 L2581.0 1430.1 L2585.1 1444.2 L2589.3 1436.3 L2593.0 1434.9 L2597.1 1438.6 L2601.2 1425.2 L2605.4 1425.6 L2609.1 1428.7 L2613.2 1409.7 L2616.7 1405.3 L2621.3 1412.1 L2625.0 1413.2 L2629.1 1428.7 L2633.3 1438.4 L2637.0 1405.3 L2641.1 1443.1 L2645.2 1440.7 L2649.2 1431.2 L2653.3 1421.9 L2657.0 1426.2 L2661.2 1423.9 L2665.3 1432.8 L2669.0 1411.7 L2673.1 1430.1 L2677.3 1416.3 L2681.4 1401.2 L2685.3 1425.2 L2689.5 1435.9 L2693.6 1426.6 L2697.3 1433.8 L2701.4 1443.6 L2705.6 1422.9 L2709.3 1446.9 L2713.2 1434.9 L2717.4 1424.1 L2721.5 1434.9 L2725.2 1427.2 L2729.3 1422.5 L2733.5 1435.9 L2737.6 1410.7 L2741.7 1412.1 L2745.5 1414.8 L2749.4 1410.7 L2753.5 1422.1 L2757.2 1437.6 L2761.4 1424.5 L2765.5 1448.3 L2769.6 1444.2 L2773.8 1435.9 L2777.5 1431.4 L2781.0 1434.3 L2785.1 1416.9 L2789.3 1423.5 L2793.0 1414.2 L2797.1 1421.4 L2801.2 1446.2 L2805.8 1402.4 L2809.9 1420.4 L2813.6 1436.3 L2817.8 1426.2 L2821.7 1437.6 L2825.4 1440.0 L2830.0 1424.5 L2833.7 1433.8 L2837.8 1430.1 L2841.9 1427.2 L2846.1 1428.1 L2850.2 1425.0 L2853.7 1424.5 L2857.9 1428.7 L2861.6 1407.6 L2865.7 1420.4 L2869.8 1433.4 L2873.6 1426.2 L2877.7 1445.8 L2881.8 1443.1 L2885.7 1432.8 L2889.9 1421.9 L2893.6 1431.2 L2897.7 1418.8 L2901.4 1423.5 L2906.0 1407.0 L2909.7 1420.8 L2913.8 1423.5 L2917.8 1416.3 L2921.9 1423.1 L2925.6 1408.4 L2929.8 1416.9 L2933.9 1437.6 L2938.0 1431.8 L2941.7 1429.7 L2945.9 1415.9 L2950.0 1419.4 L2954.1 1397.7 L2958.1 1371.9 L2962.2 1336.7 L2966.3 1346.7 L2970.5 1344.6 L2974.2 1332.6 L2978.3 1306.8 L2982.4 1282.6 L2986.2 1313.6 L2990.1 1303.1 L2994.2 1308.8 L2998.3 1265.0 L3002.4 1271.7 L3010.2 1252.0 L3014.1 1308.8 L3018.3 1290.2 L3022.0 1287.1 L3026.1 1371.9 L3030.2 1368.1 L3034.0 1380.1 L3038.1 1396.2 L3042.2 1402.4 L3046.2 1423.5 L3050.3 1420.0 L3054.4 1426.0 L3058.6 1413.2 L3062.3 1418.3 L3066.4 1427.2 L3070.5 1414.2 L3074.3 1405.3 L3078.4 1413.2 L3082.3 1417.3 L3086.4 1416.3 L3090.2 1434.5 L3094.3 1430.7 L3098.4 1434.9 L3102.1 1412.1 L3106.3 1423.5 L3110.4 1430.1 L3114.5 1429.7 L3118.5 1409.0 L3122.6 1413.8 L3126.3 1429.7 L3130.5 1390.0 L3134.6 1416.3 L3138.3 1413.6 L3142.4 1409.5 L3146.6 1414.2 L3150.5 1357.0 L3154.6 1360.5 L3158.8 1342.5 L3162.5 1291.9 L3166.6 1308.8 L3170.7 1322.9 L3174.5 1273.1 L3178.6 1320.2 L3182.7 1324.3 L3186.7 1308.8 L3190.8 1329.5 L3194.5 1311.5 L3198.6 1328.5 L3202.8 1339.4 L3206.5 1321.2 L3210.6 1274.8 L3214.8 1329.1 L3218.9 1329.9 L3222.8 1360.5 L3226.5 1389.4 L3230.7 1401.8 L3234.8 1419.4 L3238.9 1423.1 L3242.6 1421.0 L3246.8 1419.4 L3250.7 1436.9 L3254.8 1426.2 L3259.0 1424.5 L3262.7 1423.5 L3266.8 1416.3 L3270.5 1431.8 L3274.7 1436.5 L3278.8 1416.9 L3282.9 1428.7 L3286.9 1396.2 L3291.0 1419.4 L3294.7 1409.7 L3298.8 1416.3 L3303.0 1447.9 L3307.1 1415.9 L3310.8 1422.1 L3315.0 1428.7 L3319.1 1413.6 L3323.0 1415.2 L3327.1 1420.8 L3331.3 1406.0 L3335.0 1414.8 L3339.1 1398.7 L3342.9 1359.0 L3347.0 1375.0 L3351.1 1386.3 L3355.0 1347.7 L3359.2 1355.3 L3362.9 1321.9 L3367.0 1338.4 L3371.2 1345.4 L3374.9 1325.0 L3379.0 1331.6 L3382.9 1330.1 L3387.1 1314.0" fill="none" stroke="#8db49b" stroke-width="1.6" stroke-linejoin="round"/><text x="2019.80" y="1244.80" text-anchor="end" font-size="18.667" fill="#2b2b2b" letter-spacing="0.301">3.00</text><text x="2019.80" y="1335.10" text-anchor="end" font-size="18.667" fill="#2b2b2b" letter-spacing="0.301">2.00</text><text x="2019.80" y="1425.40" text-anchor="end" font-size="18.667" fill="#2b2b2b" letter-spacing="0.301">1.00</text><text x="2019.80" y="1515.70" text-anchor="end" font-size="18.667" fill="#2b2b2b" letter-spacing="0.301">0.00</text><text x="2125.13" y="1537.90" text-anchor="middle" font-size="18.667" fill="#2b2b2b" letter-spacing="0.258">01:00</text><text x="2125.16" y="1559.90" text-anchor="middle" font-size="18.667" fill="#2b2b2b" letter-spacing="0.319">2025-11-27</text><text x="2317.56" y="1537.90" text-anchor="middle" font-size="18.667" fill="#2b2b2b" letter-spacing="0.258">01:00</text><text x="2317.59" y="1559.90" text-anchor="middle" font-size="18.667" fill="#2b2b2b" letter-spacing="0.319">2025-11-28</text><text x="2509.99" y="1537.90" text-anchor="middle" font-size="18.667" fill="#2b2b2b" letter-spacing="0.258">01:00</text><text x="2510.02" y="1559.90" text-anchor="middle" font-size="18.667" fill="#2b2b2b" letter-spacing="0.319">2025-11-29</text><text x="2702.42" y="1537.90" text-anchor="middle" font-size="18.667" fill="#2b2b2b" letter-spacing="0.258">01:00</text><text x="2702.45" y="1559.90" text-anchor="middle" font-size="18.667" fill="#2b2b2b" letter-spacing="0.319">2025-11-30</text><text x="2894.85" y="1537.90" text-anchor="middle" font-size="18.667" fill="#2b2b2b" letter-spacing="0.258">01:00</text><text x="2894.81" y="1559.90" text-anchor="middle" font-size="18.667" fill="#2b2b2b" letter-spacing="0.180">2025-12-01</text><text x="3087.28" y="1537.90" text-anchor="middle" font-size="18.667" fill="#2b2b2b" letter-spacing="0.258">01:00</text><text x="3087.24" y="1559.90" text-anchor="middle" font-size="18.667" fill="#2b2b2b" letter-spacing="0.180">2025-12-02</text><text x="3279.71" y="1537.90" text-anchor="middle" font-size="18.667" fill="#2b2b2b" letter-spacing="0.258">01:00</text><text x="3279.67" y="1559.90" text-anchor="middle" font-size="18.667" fill="#2b2b2b" letter-spacing="0.180">2025-12-03</text><rect x="2067.9" y="1709.6" width="1318.8" height="300" fill="#dee9e3"/><g stroke="rgba(0,0,0,0.07)" stroke-width="1.4" fill="none"><line x1="2054.7" y1="1704.70" x2="3400.1" y2="1704.70"/><line x1="2054.7" y1="1738.47" x2="3400.1" y2="1738.47"/><line x1="2054.7" y1="1772.24" x2="3400.1" y2="1772.24"/><line x1="2054.7" y1="1806.01" x2="3400.1" y2="1806.01"/><line x1="2054.7" y1="1839.78" x2="3400.1" y2="1839.78"/><line x1="2054.7" y1="1873.55" x2="3400.1" y2="1873.55"/><line x1="2054.7" y1="1907.32" x2="3400.1" y2="1907.32"/><line x1="2054.7" y1="1941.09" x2="3400.1" y2="1941.09"/><line x1="2150.60" y1="1691.0" x2="2150.60" y2="1990.0"/><line x1="2339.10" y1="1691.0" x2="2339.10" y2="1990.0"/><line x1="2527.60" y1="1691.0" x2="2527.60" y2="1990.0"/><line x1="2716.10" y1="1691.0" x2="2716.10" y2="1990.0"/><line x1="2904.60" y1="1691.0" x2="2904.60" y2="1990.0"/><line x1="3093.10" y1="1691.0" x2="3093.10" y2="1990.0"/><line x1="3281.60" y1="1691.0" x2="3281.60" y2="1990.0"/></g><line x1="2067.9" y1="1709.6" x2="3386.7" y2="1709.6" stroke="#8db49b" stroke-width="1.6"/><text x="2048.31" y="1708.70" text-anchor="end" font-size="18.667" fill="#2b2b2b" letter-spacing="-0.189">128 GiB</text><text x="2048.51" y="1742.47" text-anchor="end" font-size="18.667" fill="#2b2b2b" letter-spacing="0.009">112 GiB</text><text x="2048.20" y="1776.24" text-anchor="end" font-size="18.667" fill="#2b2b2b" letter-spacing="-0.302">96 GiB</text><text x="2048.20" y="1810.01" text-anchor="end" font-size="18.667" fill="#2b2b2b" letter-spacing="-0.302">80 GiB</text><text x="2048.20" y="1843.78" text-anchor="end" font-size="18.667" fill="#2b2b2b" letter-spacing="-0.302">64 GiB</text><text x="2048.20" y="1877.55" text-anchor="end" font-size="18.667" fill="#2b2b2b" letter-spacing="-0.302">48 GiB</text><text x="2048.20" y="1911.32" text-anchor="end" font-size="18.667" fill="#2b2b2b" letter-spacing="-0.302">32 GiB</text><text x="2048.20" y="1945.09" text-anchor="end" font-size="18.667" fill="#2b2b2b" letter-spacing="-0.302">16 GiB</text></svg>
<div class="r" style="left:0.00px;top:0.00px;width:1.10px;height:1948.20px;background:#808287;"></div>
<div class="r" style="left:0.00px;top:1948.20px;width:3464.00px;height:3.80px;background:#0c0c0c;"></div>
</body></html>
